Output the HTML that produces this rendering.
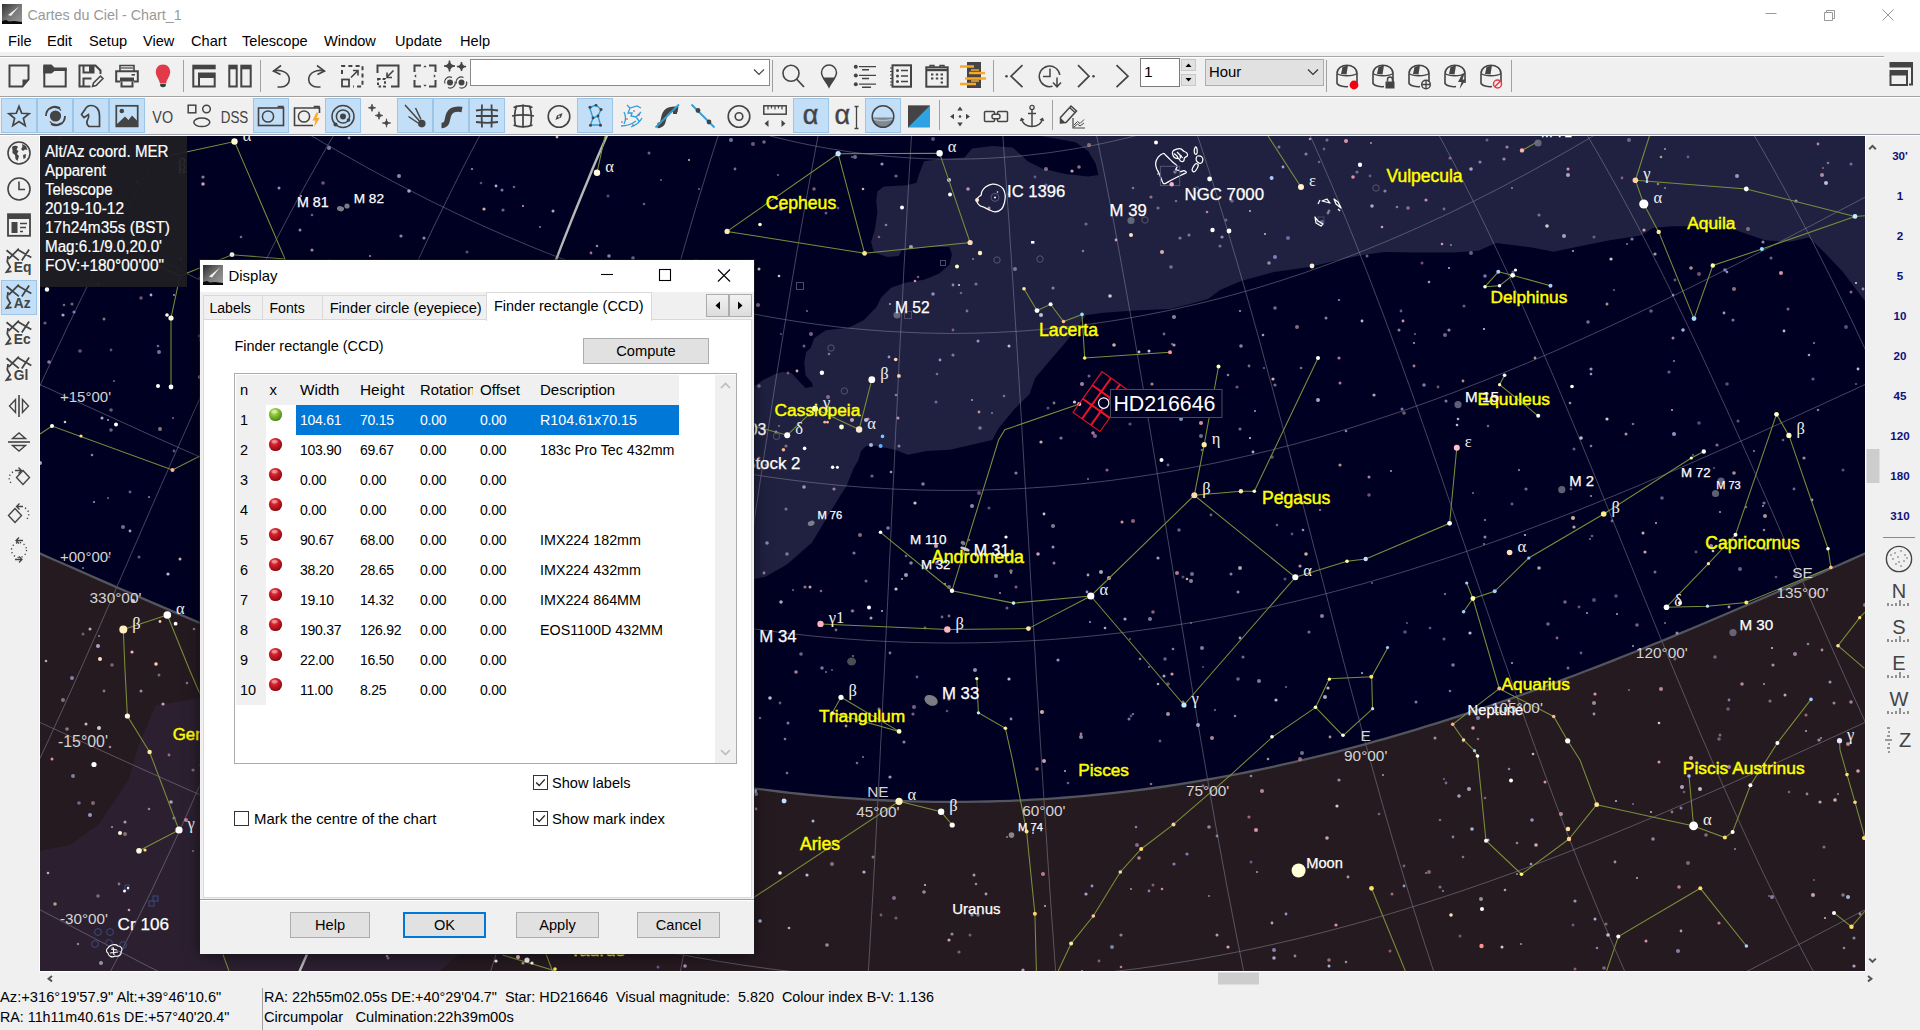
<!DOCTYPE html>
<html><head><meta charset="utf-8"><title>Cartes du Ciel - Chart_1</title>
<style>
*{box-sizing:border-box;margin:0;padding:0}
html,body{width:1920px;height:1030px;overflow:hidden;background:#f0f0f0;font-family:"Liberation Sans",sans-serif;font-size:14px;color:#000}
.abs{position:absolute}
#titlebar{left:0;top:0;width:1920px;height:30px;background:#fff}
#menubar{left:0;top:30px;width:1920px;height:22px;background:#fff}
#menubar span{position:absolute;top:3px;font-size:14.6px;white-space:nowrap}
.hl{position:absolute;height:1px;background:#a0a0a0}
.vsep{position:absolute;width:1px;background:#a0a0a0}
.tbsel{position:absolute;background:#c2dff7;border:1px solid #9cc6e8}
.t{position:absolute;white-space:nowrap}
svg{position:absolute;overflow:visible}
.ic{stroke:#444;fill:none;stroke-width:2}
</style></head><body>
<div id="titlebar" class="abs"></div>
<svg style="left:2px;top:4px" width="20" height="20" viewBox="0 0 20 20"><defs><linearGradient id="lg1" x1="0" y1="0" x2="1" y2="1"><stop offset="0" stop-color="#333"/><stop offset="0.5" stop-color="#777"/><stop offset="1" stop-color="#999"/></linearGradient></defs><rect width="20" height="20" fill="url(#lg1)"/><path d="M6 11 L17 2.5 L9 12Z" fill="#eee"/><path d="M0 17 L4 16 L7 17.5 L12 17 L20 18 V20 H0Z" fill="#0a0a0a"/></svg>
<div class="t" style="left:27.5px;top:6.5px;font-size:14.3px;color:#999">Cartes du Ciel - Chart_1</div>
<svg style="left:1750px;top:0" width="170" height="30" viewBox="0 0 170 30" stroke="#999" stroke-width="1" fill="none"><path d="M15.5 13.5H26.5"/><path d="M74.5 12.5H82.5V20.5H74.5Z M76.5 12.5V10.5H84.5V18.5H82.5"/><path d="M132.5 9.5L143.5 20.5M143.5 9.5L132.5 20.5"/></svg>
<div id="menubar" class="abs">
<span style="left:8px">File</span>
<span style="left:47px">Edit</span>
<span style="left:89px">Setup</span>
<span style="left:143px">View</span>
<span style="left:191px">Chart</span>
<span style="left:242px">Telescope</span>
<span style="left:324px">Window</span>
<span style="left:395px">Update</span>
<span style="left:460px">Help</span>
</div>
<div class="vsep" style="left:39px;top:136px;height:836px;background:#fff"></div><div class="vsep" style="left:1865px;top:136px;height:836px;background:#fff"></div><div class="hl" style="left:39px;top:971px;width:1827px;background:#fff"></div>
<div class="hl" style="left:0;top:56px;width:1884px;background:#a6a6a6"></div><div class="hl" style="left:0;top:57px;width:1884px;background:#fff"></div>
<div class="hl" style="left:0;top:96px;width:1920px;background:#a4a2a0"></div><div class="hl" style="left:0;top:97px;width:1920px;background:#fff"></div>
<div class="hl" style="left:0;top:134px;width:1920px;background:#9aa0a6"></div><div class="hl" style="left:0;top:135px;width:1920px;background:#fff"></div>
<svg style="left:7px;top:64px" width="24" height="24" viewBox="0 0 24 24" fill="none" stroke="#444" stroke-width="2" stroke-linejoin="miter"><path d="M2.5 1.5H21.5V15.5L15.5 22.5H2.5Z"/><path d="M21.5 15.5H15.5V22.5Z" fill="#444" stroke="none"/></svg>
<svg style="left:43px;top:64px" width="24" height="24" viewBox="0 0 24 24" fill="none" stroke="#444" stroke-width="2" stroke-linejoin="miter"><path d="M1.3 2V22.5H22.7V5.5H11"/><path d="M0.3 0.5H8.5L11.5 3.5H23.7V7H11.5L8.5 9.5H0.3Z" fill="#444" stroke="none"/></svg>
<svg style="left:78px;top:64px" width="24" height="24" viewBox="0 0 24 24" fill="none" stroke="#444" stroke-width="2" stroke-linejoin="miter"><path d="M12.5 22.5H1.5V1.5H17.5L22.5 6.5V10"/><path d="M5.5 1.5V8.5H15.5V1.5"/><rect x="11" y="2" width="4" height="6" fill="#444" stroke="none"/><path d="M5.5 22.5V14.5H13.5"/><path d="M14.5 22.5L15.5 19L22.5 12L25 14.5L18 21.5Z" stroke-width="1.5"/></svg>
<svg style="left:115px;top:64px" width="24" height="24" viewBox="0 0 24 24" fill="none" stroke="#444" stroke-width="2" stroke-linejoin="miter"><path d="M5 7V1.5H19V7" stroke-width="1.6"/><path d="M6 4H18" stroke-width="1.2"/><path d="M5 17.5H1.2V7.2H22.8V17.5H19"/><rect x="5" y="13.5" width="14" height="4" fill="#444" stroke="none"/><path d="M6.5 17.5V22.5H17.5V17.5"/><rect x="16.5" y="10" width="3.5" height="1.6" fill="#444" stroke="none"/></svg>
<svg style="left:151px;top:64px" width="24" height="24" viewBox="0 0 24 24" fill="none" stroke="#444" stroke-width="2" stroke-linejoin="miter"><path d="M12 0.5C7.5 0.5 4.8 4 4.8 8C4.8 12 8 15 9 19.5H15C16 15 19.2 12 19.2 8C19.2 4 16.5 0.5 12 0.5Z" fill="#e23a4b" stroke="none"/><path d="M9.2 20H14.8V22Q12 24.5 9.2 22Z" fill="#2c4038" stroke="none"/></svg>
<div class="vsep" style="left:183px;top:60px;height:32px"></div>
<svg style="left:192px;top:64px" width="24" height="24" viewBox="0 0 24 24" fill="none" stroke="#444" stroke-width="2" stroke-linejoin="miter"><path d="M1.3 5V22.5H6"/><rect x="0.3" y="0.7" width="23.4" height="4.6" fill="#444" stroke="none"/><path d="M7 14V22.5H22.7V14"/><rect x="6" y="8.5" width="17.7" height="5.5" fill="#444" stroke="none"/></svg>
<svg style="left:228px;top:64px" width="24" height="24" viewBox="0 0 24 24" fill="none" stroke="#444" stroke-width="2" stroke-linejoin="miter"><path d="M1.3 5V22.5H8.7V5"/><rect x="0.3" y="0.7" width="9.4" height="4.6" fill="#444" stroke="none"/><path d="M13.3 5V22.5H22.7V5"/><rect x="12.3" y="0.7" width="11.4" height="4.6" fill="#444" stroke="none"/></svg>
<div class="vsep" style="left:260px;top:60px;height:32px"></div>
<svg style="left:268px;top:64px" width="24" height="24" viewBox="0 0 24 24" fill="none" stroke="#444" stroke-width="2" stroke-linejoin="miter"><path d="M13 1.5L5.5 7L12.5 10.5" stroke-width="1.6"/><path d="M5.5 7C13 5 21.3 8.5 21.3 15.5C21.3 20 17.5 23 13 23H9.5" stroke-width="1.6"/></svg>
<svg style="left:306px;top:64px" width="24" height="24" viewBox="0 0 24 24" fill="none" stroke="#444" stroke-width="2" stroke-linejoin="miter"><path d="M11 1.5L18.5 7L11.5 10.5" stroke-width="1.6"/><path d="M18.5 7C11 5 2.7 8.5 2.7 15.5C2.7 20 6.5 23 11 23H14.5" stroke-width="1.6"/></svg>
<svg style="left:340px;top:64px" width="24" height="24" viewBox="0 0 24 24" fill="none" stroke="#444" stroke-width="2" stroke-linejoin="miter"><path d="M2 10V2H22.5V22.5H13" stroke-dasharray="4 3.2"/><rect x="2" y="15.5" width="7" height="7" stroke-width="1.8"/><path d="M11 13.5L18 6.5M13 6.5H18V11.5" stroke-width="1.6"/></svg>
<svg style="left:376px;top:64px" width="24" height="24" viewBox="0 0 24 24" fill="none" stroke="#444" stroke-width="2" stroke-linejoin="miter"><path d="M1.5 9V1.5H22.5V22.5H15"/><path d="M2 15H9V22.5H2Z" stroke-dasharray="2.6 2"/><path d="M17.5 6.5L11 13M11 8.5V13.5H16" stroke-width="1.6"/></svg>
<svg style="left:413px;top:64px" width="24" height="24" viewBox="0 0 24 24" fill="none" stroke="#444" stroke-width="2" stroke-linejoin="miter"><path d="M1.5 8V1.5H8M16 1.5H22.5V8M22.5 16V22.5H16M8 22.5H1.5V16"/><path d="M10.3 3.2L12 1.2L13.7 3.2ZM10.3 20.8L12 22.8L13.7 20.8ZM3.2 10.3L1.2 12L3.2 13.7ZM20.8 10.3L22.8 12L20.8 13.7Z" fill="#444" stroke="none"/></svg>
<svg style="left:443px;top:60px" width="26" height="32" viewBox="0 0 26 32" fill="none" stroke="#444" stroke-width="2" stroke-linejoin="miter"><path d="M6.5 0.5Q6.5 6 12 6Q6.5 6 6.5 11.5Q6.5 6 1 6Q6.5 6 6.5 0.5Z M18.5 1.9Q18.5 6.5 23.1 6.5Q18.5 6.5 18.5 11.1Q18.5 6.5 13.9 6.5Q18.5 6.5 18.5 1.9Z" fill="#444" stroke="#444" stroke-width="1.4"/><circle cx="7" cy="22.5" r="3" fill="#444" stroke="none"/><path d="M2 23.5A5 5 0 0 1 9 17.5 M12 21.5A5 5 0 0 1 5 27.5" stroke-width="1.1"/><circle cx="18.5" cy="22.5" r="3" fill="#444" stroke="none"/><path d="M13.5 23.5A5 5 0 0 1 20.5 17.5 M23.5 21.5A5 5 0 0 1 16.5 27.5" stroke-width="1.1"/></svg>
<div class="abs" style="left:470px;top:59px;width:300px;height:27px;background:#fff;border:1px solid #8a8a8a"></div>
<svg style="left:752px;top:67px" width="14" height="10" viewBox="0 0 14 10" fill="none" stroke="#444" stroke-width="1.2"><path d="M2 2.5L7 7.5L12 2.5"/></svg>
<div class="vsep" style="left:772px;top:60px;height:32px"></div>
<svg style="left:781px;top:64px" width="24" height="24" viewBox="0 0 24 24" fill="none" stroke="#444" stroke-width="2" stroke-linejoin="miter"><circle cx="10" cy="9.3" r="8" stroke-width="1.6"/><path d="M15.5 15L23 23" stroke-width="1.8"/></svg>
<svg style="left:816px;top:64px" width="24" height="24" viewBox="0 0 24 24" fill="none" stroke="#444" stroke-width="2" stroke-linejoin="miter"><path d="M13 23C10 17 5.5 13.5 5.5 8.5A7.5 7.5 0 0 1 20.5 8.5C20.5 13.5 16 17 13 23Z" stroke-width="1.5"/><path d="M6.8 13.5H19.2C17.5 17 15 19.5 13 23C11 19.5 8.5 17 6.8 13.5Z" fill="#444" stroke="none"/></svg>
<svg style="left:853px;top:64px" width="24" height="24" viewBox="0 0 24 24" fill="none" stroke="#444" stroke-width="2" stroke-linejoin="miter"><circle cx="2.8" cy="2.8" r="2" fill="#444" stroke="none"/><circle cx="2.8" cy="11.5" r="2" fill="#444" stroke="none"/><circle cx="2.8" cy="20.3" r="2" fill="#444" stroke="none"/><path d="M6 2.6H23M6 11.3H23M6 20.1H23" stroke-width="1.2"/><path d="M9 5.8H16M9 14.5H16M9 23.2H18" stroke-width="1.6"/></svg>
<svg style="left:889px;top:64px" width="24" height="24" viewBox="0 0 24 24" fill="none" stroke="#444" stroke-width="2" stroke-linejoin="miter"><rect x="3.5" y="1.3" width="18.5" height="21.4"/><path d="M1 4H3M1 7.5H3M1 11H3M1 14.5H3M1 18H3M1 21H3" stroke-width="1.2"/><circle cx="8.5" cy="6.5" r="1.5" fill="#444" stroke="none"/><circle cx="8.5" cy="12" r="1.5" fill="#444" stroke="none"/><circle cx="8.5" cy="17.5" r="1.5" fill="#444" stroke="none"/><path d="M12 6.5H19M12 12H19M12 17.5H19" stroke-width="1.6"/></svg>
<svg style="left:925px;top:64px" width="24" height="24" viewBox="0 0 24 24" fill="none" stroke="#444" stroke-width="2" stroke-linejoin="miter"><rect x="1.3" y="3.3" width="21.4" height="19.4"/><path d="M1.3 6H22.7" stroke-width="2.4"/><path d="M5 3.5V1.5H9V3.5M15 3.5V1.5H19V3.5" stroke-width="1.4"/><path d="M6 10.5H8.4M10.8 10.5H13.2M15.6 10.5H18M6 14.5H8.4M10.8 14.5H13.2M15.6 14.5H18M15.6 18.5H18" stroke-width="2.2"/></svg>
<svg style="left:959px;top:62px" width="28" height="26" viewBox="0 0 28 26" fill="none" stroke="#444" stroke-width="2" stroke-linejoin="miter"><rect x="8" y="0" width="14" height="26" fill="#444" stroke="none"/><path d="M1 4.5H15M10 11H26M6 16.5H27M1 22H17" stroke="#f9a826" stroke-width="2.6"/><path d="M12 8H20M12 19H20" stroke="#f9a826" stroke-width="1.6"/></svg>
<div class="vsep" style="left:993px;top:60px;height:32px"></div>
<svg style="left:1001px;top:64px" width="24" height="24" viewBox="0 0 24 24" fill="none" stroke="#444" stroke-width="2" stroke-linejoin="miter"><circle cx="5.5" cy="12.2" r="1.3" fill="#444" stroke="none"/><path d="M21.5 1.2L10 12.2L21.5 23.2" stroke-width="1.7"/></svg>
<svg style="left:1038px;top:64px" width="24" height="24" viewBox="0 0 24 24" fill="none" stroke="#444" stroke-width="2" stroke-linejoin="miter"><path d="M14.5 22.2A10.3 10.3 0 1 1 21.8 11" stroke-width="1.5"/><path d="M12 4.5V12.5H5" stroke-width="1.5"/><path d="M19 13.5V22.5M15 18.5L19 22.8L23 18.5" stroke-width="1.5"/></svg>
<svg style="left:1073px;top:64px" width="24" height="24" viewBox="0 0 24 24" fill="none" stroke="#444" stroke-width="2" stroke-linejoin="miter"><circle cx="20.5" cy="12.2" r="1.3" fill="#444" stroke="none"/><path d="M5 1.2L16 12.2L5 23.2" stroke-width="1.7"/></svg>
<svg style="left:1110px;top:64px" width="24" height="24" viewBox="0 0 24 24" fill="none" stroke="#444" stroke-width="2" stroke-linejoin="miter"><path d="M6.5 1.2L18 12.2L6.5 23.2" stroke-width="1.7"/></svg>
<div class="abs" style="left:1140px;top:58px;width:40px;height:29px;background:#fff;border:1px solid #7a7a7a"></div><div class="t" style="left:1144px;top:63px;font-size:15.5px">1</div>
<div class="abs" style="left:1181px;top:59px;width:15px;height:12px;background:#e1e1e1;border:1px solid #c8c8c8"></div><div class="abs" style="left:1181px;top:74px;width:15px;height:12px;background:#e1e1e1;border:1px solid #c8c8c8"></div>
<svg style="left:1181px;top:59px" width="15" height="27" viewBox="0 0 15 27"><path d="M4.5 8L7.5 4.5L10.5 8Z M4.5 19L7.5 22.5L10.5 19Z" fill="#000"/></svg>
<div class="abs" style="left:1205px;top:59px;width:119px;height:27px;background:#e1e1e1;border:1px solid #adadad"></div><div class="t" style="left:1209px;top:64px;font-size:14.9px">Hour</div>
<svg style="left:1306px;top:67px" width="14" height="10" viewBox="0 0 14 10" fill="none" stroke="#333" stroke-width="1.2"><path d="M2 2.5L7 7.5L12 2.5"/></svg>
<div class="vsep" style="left:1326px;top:60px;height:32px"></div>
<svg style="left:1335px;top:64px" width="26" height="28" viewBox="0 0 26 28" fill="none" stroke="#444" stroke-width="2" stroke-linejoin="miter"><path d="M2 9.5C2 -1.5 22 -1.5 22 9.5V19" stroke-width="1.6"/><path d="M2 9.5V19.5C4 22.5 10 23 13 22.5" stroke-width="1.6"/><path d="M2 9.5C6 12.5 18 12.5 22 9.5" stroke-width="1.4"/><path d="M7.5 3L13 1.2L11.5 10.5L6 10Z" fill="#444" stroke="none"/><circle cx="19" cy="21" r="4.4" fill="#f00010" stroke="none"/></svg>
<svg style="left:1371px;top:64px" width="26" height="28" viewBox="0 0 26 28" fill="none" stroke="#444" stroke-width="2" stroke-linejoin="miter"><path d="M2 9.5C2 -1.5 22 -1.5 22 9.5V19" stroke-width="1.6"/><path d="M2 9.5V19.5C4 22.5 10 23 13 22.5" stroke-width="1.6"/><path d="M2 9.5C6 12.5 18 12.5 22 9.5" stroke-width="1.4"/><path d="M7.5 3L13 1.2L11.5 10.5L6 10Z" fill="#444" stroke="none"/><rect x="14.5" y="17.5" width="9" height="7" fill="#444" stroke="none"/><path d="M16.5 17.5V15.5A2.5 2.5 0 0 1 21.5 15.5V17.5" stroke-width="1.5"/></svg>
<svg style="left:1407px;top:64px" width="26" height="28" viewBox="0 0 26 28" fill="none" stroke="#444" stroke-width="2" stroke-linejoin="miter"><path d="M2 9.5C2 -1.5 22 -1.5 22 9.5V19" stroke-width="1.6"/><path d="M2 9.5V19.5C4 22.5 10 23 13 22.5" stroke-width="1.6"/><path d="M2 9.5C6 12.5 18 12.5 22 9.5" stroke-width="1.4"/><path d="M7.5 3L13 1.2L11.5 10.5L6 10Z" fill="#444" stroke="none"/><circle cx="19" cy="20.5" r="4.3" stroke-width="1.4" fill="#f0f0f0"/><path d="M19 16V25M14.5 20.5H23.5" stroke-width="1.3"/></svg>
<svg style="left:1443px;top:64px" width="26" height="28" viewBox="0 0 26 28" fill="none" stroke="#444" stroke-width="2" stroke-linejoin="miter"><path d="M2 9.5C2 -1.5 22 -1.5 22 9.5V19" stroke-width="1.6"/><path d="M2 9.5V19.5C4 22.5 10 23 13 22.5" stroke-width="1.6"/><path d="M2 9.5C6 12.5 18 12.5 22 9.5" stroke-width="1.4"/><path d="M7.5 3L13 1.2L11.5 10.5L6 10Z" fill="#444" stroke="none"/><path d="M19.5 9.5L15 18H18.5L16.5 25L23 15.5H19.5L21.5 9.5Z" fill="#444" stroke="none"/></svg>
<svg style="left:1479px;top:64px" width="26" height="28" viewBox="0 0 26 28" fill="none" stroke="#444" stroke-width="2" stroke-linejoin="miter"><path d="M2 9.5C2 -1.5 22 -1.5 22 9.5V19" stroke-width="1.6"/><path d="M2 9.5V19.5C4 22.5 10 23 13 22.5" stroke-width="1.6"/><path d="M2 9.5C6 12.5 18 12.5 22 9.5" stroke-width="1.4"/><path d="M7.5 3L13 1.2L11.5 10.5L6 10Z" fill="#444" stroke="none"/><circle cx="18.5" cy="20" r="4" stroke="#e23a4b" stroke-width="1.5" fill="#f0f0f0"/><path d="M15.8 22.7L21.2 17.3" stroke="#e23a4b" stroke-width="1.5"/></svg>
<div class="vsep" style="left:1511px;top:60px;height:32px"></div>
<svg style="left:1889px;top:62px" width="24" height="24" viewBox="0 0 24 24" fill="none" stroke="#444" stroke-width="2" stroke-linejoin="miter"><rect x="0.5" y="0" width="23.5" height="5.5" fill="#444" stroke="none"/><path d="M23 5V22.5H20"/><rect x="0.5" y="8" width="18.5" height="5.5" fill="#444" stroke="none"/><path d="M1.5 13V23H18V13"/></svg>
<div class="tbsel" style="left:1px;top:98px;width:36px;height:35px"></div>
<div class="tbsel" style="left:37px;top:98px;width:36px;height:35px"></div>
<div class="tbsel" style="left:73px;top:98px;width:36px;height:35px"></div>
<div class="tbsel" style="left:109px;top:98px;width:36px;height:35px"></div>
<div class="tbsel" style="left:253px;top:98px;width:36px;height:35px"></div>
<div class="tbsel" style="left:325px;top:98px;width:36px;height:35px"></div>
<div class="tbsel" style="left:397px;top:98px;width:36px;height:35px"></div>
<div class="tbsel" style="left:433px;top:98px;width:36px;height:35px"></div>
<div class="tbsel" style="left:469px;top:98px;width:36px;height:35px"></div>
<div class="tbsel" style="left:577px;top:98px;width:36px;height:35px"></div>
<div class="tbsel" style="left:793px;top:98px;width:36px;height:35px"></div>
<div class="tbsel" style="left:865px;top:98px;width:36px;height:35px"></div>
<svg style="left:7px;top:104px" width="24" height="24" viewBox="0 0 24 24" fill="none" stroke="#444" stroke-width="2" stroke-linejoin="miter"><polygon points="12.0,2.4 14.7,9.3 22.1,9.7 16.4,14.4 18.2,21.6 12.0,17.6 5.8,21.6 7.6,14.4 1.9,9.7 9.3,9.3" stroke-width="1.7"/></svg>
<svg style="left:43px;top:104px" width="24" height="24" viewBox="0 0 24 24" fill="none" stroke="#444" stroke-width="2" stroke-linejoin="miter"><circle cx="12.5" cy="12" r="5.6" fill="#444" stroke="none"/><path d="M3 12C3 4 11 0.5 17 4M22 12C22 20 14 23.5 8 20" stroke-width="1.8"/><path d="M7 17.5C9 21 15 21.5 18 19M18 6.5C16 3 10 2.5 7 5" stroke-width="1.3"/></svg>
<svg style="left:79px;top:104px" width="24" height="24" viewBox="0 0 24 24" fill="none" stroke="#444" stroke-width="2" stroke-linejoin="miter"><path d="M10 22.5H20.5V12C20.5 5 17 1.5 12 1.5C9 1.5 7 3.5 6 5.5L2.5 10.5L5 13.5L9.5 10.5C10.5 13 9 15 8 17C7.5 19 8 21 10 22.5Z" stroke-width="1.7"/></svg>
<svg style="left:115px;top:104px" width="24" height="24" viewBox="0 0 24 24" fill="none" stroke="#444" stroke-width="2" stroke-linejoin="miter"><rect x="1.3" y="1.8" width="21.4" height="20.6" stroke-width="1.7"/><circle cx="6.8" cy="7" r="2.3" fill="#444" stroke="none"/><path d="M2 22V20L10 12.5L13.5 16L17 11.5L22 16.5V22Z" fill="#444" stroke="none"/></svg>
<svg style="left:151px;top:104px" width="24" height="24" viewBox="0 0 24 24"><text x="1.3" y="18.6" font-family="'Liberation Sans',sans-serif" font-size="17.4" fill="#444" textLength="20.8" lengthAdjust="spacingAndGlyphs">VO</text></svg>
<svg style="left:187px;top:104px" width="24" height="24" viewBox="0 0 24 24" fill="none" stroke="#444" stroke-width="2" stroke-linejoin="miter"><rect x="1.2" y="1.2" width="7.6" height="7.6" stroke-width="1.5"/><circle cx="19.5" cy="5" r="3.8" stroke-width="1.5"/><ellipse cx="14.8" cy="18.3" rx="8" ry="4.3" stroke-width="1.5"/></svg>
<svg style="left:220px;top:104px" width="34" height="24" viewBox="0 0 34 24"><text x="0.7" y="18.8" font-family="'Liberation Sans',sans-serif" font-size="17.4" fill="#444" textLength="27.6" lengthAdjust="spacingAndGlyphs">DSS</text></svg>
<svg style="left:259px;top:104px" width="24" height="24" viewBox="0 0 24 24" fill="none" stroke="#444" stroke-width="2" stroke-linejoin="miter"><rect x="-0.5" y="4" width="25" height="17.5" stroke-width="1.6"/><circle cx="9" cy="12.5" r="5.6" stroke-width="1.5"/><path d="M19.5 4V2.6H24V4.5" stroke-width="1.6"/></svg>
<svg style="left:295px;top:104px" width="24" height="24" viewBox="0 0 24 24" fill="none" stroke="#444" stroke-width="2" stroke-linejoin="miter"><path d="M18 21.5H-0.5V4H24.5V9" stroke-width="1.6"/><circle cx="9" cy="12.5" r="5.6" stroke-width="1.5"/><path d="M19.5 4V2.6H24V4.5" stroke-width="1.6"/><path d="M21.5 8.5L17.5 16.5H20.5L19 23.5L24.5 14H21.5L23.5 8.5Z" fill="#f9a826" stroke="none"/></svg>
<svg style="left:331px;top:104px" width="24" height="24" viewBox="0 0 24 24" fill="none" stroke="#444" stroke-width="2" stroke-linejoin="miter"><circle cx="12" cy="12.5" r="11" stroke-width="1.5"/><circle cx="12" cy="12.5" r="6.6" stroke-width="1.5"/><circle cx="12" cy="12.5" r="3" fill="#444" stroke="none"/><circle cx="4.5" cy="20.5" r="2" fill="#444" stroke="none"/><circle cx="17.5" cy="16" r="1.8" fill="#444" stroke="none"/></svg>
<svg style="left:367px;top:104px" width="24" height="24" viewBox="0 0 24 24" fill="none" stroke="#444" stroke-width="2" stroke-linejoin="miter"><path d="M5 0.2Q5 3.8 8.6 3.8Q5 3.8 5 7.4Q5 3.8 1.4 3.8Q5 3.8 5 0.2Z M12 7.7Q12 11.5 15.8 11.5Q12 11.5 12 15.3Q12 11.5 8.2 11.5Q12 11.5 12 7.7Z M19.5 14.8Q19.5 19 23.7 19Q19.5 19 19.5 23.2Q19.5 19 15.3 19Q19.5 19 19.5 14.8Z" fill="#444" stroke-width="0.8"/></svg>
<svg style="left:403px;top:104px" width="24" height="24" viewBox="0 0 24 24" fill="none" stroke="#444" stroke-width="2" stroke-linejoin="miter"><circle cx="18.8" cy="19.6" r="3.8" fill="#444" stroke="none"/><path d="M16.5 17L2 1M18 15.5L12.5 4M15 19L5.5 12.5" stroke-width="1.5"/></svg>
<svg style="left:439px;top:104px" width="24" height="24" viewBox="0 0 24 24" fill="none" stroke="#444" stroke-width="2" stroke-linejoin="miter"><path d="M2.5 21.5C9.5 21.5 7.5 15 10 10C12.5 5 17 4.5 23 5.5" stroke-width="5.4"/></svg>
<svg style="left:475px;top:104px" width="24" height="24" viewBox="0 0 24 24" fill="none" stroke="#444" stroke-width="2" stroke-linejoin="miter"><path d="M7 0.5C6.5 8 6.5 16 7 23.5M16.5 0.5C17 8 17 16 16.5 23.5" stroke-width="1.8"/><path d="M1 6.5C8 5.5 16 5.5 23 6.5M1 12H23M1 18C8 19 16 19 23 18" stroke-width="1.8"/></svg>
<svg style="left:511px;top:104px" width="24" height="24" viewBox="0 0 24 24" fill="none" stroke="#444" stroke-width="2" stroke-linejoin="miter"><path d="M2.5 3.5C8 1 16 1 21.5 3.5M1 12C8 10.5 16 10.5 23 12M2.5 21C8 23.5 16 23.5 21.5 21" stroke-width="1.7"/><path d="M12 0.5V23.5M5.5 1.5C3.5 8 3 15 4.5 22M18.5 1.5C20.5 8 21 15 19.5 22" stroke-width="1.7"/></svg>
<svg style="left:547px;top:104px" width="24" height="24" viewBox="0 0 24 24" fill="none" stroke="#444" stroke-width="2" stroke-linejoin="miter"><circle cx="12" cy="12.5" r="10.8" stroke-width="1.6"/><path d="M15.5 9L10 11.5L8.5 16L14 13.5Z" fill="#444" stroke="none"/><circle cx="12" cy="12.5" r="1" fill="#f0f0f0" stroke="none"/></svg>
<svg style="left:583px;top:104px" width="24" height="24" viewBox="0 0 24 24" fill="none" stroke="#444" stroke-width="2" stroke-linejoin="miter"><path d="M8 3L13 1L18 5.5L15 12L17.5 21H7.5L10 14L6.5 3Z M10 14L15 12" stroke="#2ba0dc" stroke-width="1.4"/><g fill="#444" stroke="none"><circle cx="7" cy="3.2" r="1.5"/><circle cx="13" cy="1.3" r="1.4"/><circle cx="18" cy="5.5" r="1.5"/><circle cx="15" cy="12" r="1.4"/><circle cx="10" cy="14" r="1.4"/><circle cx="17.5" cy="21.2" r="1.5"/><circle cx="7.5" cy="21.2" r="1.5"/></g></svg>
<svg style="left:619px;top:104px" width="24" height="24" viewBox="0 0 24 24" fill="none" stroke="#444" stroke-width="2" stroke-linejoin="miter"><path d="M8 1L11 4L18 2L22 4M11 4L9 9H13L12 12L17 13L22 8M5 8C7 12 7 16 5 20M2 22C8 22 13 20 17 17M12 23C17 21 21 18 23 14M17 13L20 17" stroke="#2ba0dc" stroke-width="1.3"/><g fill="#b03050" stroke="none"><circle cx="8" cy="15" r="0.8"/><circle cx="15" cy="7" r="0.8"/><circle cx="14" cy="21" r="0.8"/><circle cx="20" cy="11" r="0.8"/><circle cx="3" cy="18" r="0.8"/></g></svg>
<svg style="left:655px;top:104px" width="24" height="24" viewBox="0 0 24 24" fill="none" stroke="#444" stroke-width="2" stroke-linejoin="miter"><path d="M2.5 21.5C9.5 21.5 7.5 15 10 10C12.5 5 17 4.5 23 5.5" stroke-width="5.4"/><path d="M20 4V10" stroke-width="4"/><path d="M0.5 23.5L24 0.5" stroke="#2ba0dc" stroke-width="1.8"/></svg>
<svg style="left:691px;top:104px" width="24" height="24" viewBox="0 0 24 24" fill="none" stroke="#444" stroke-width="2" stroke-linejoin="miter"><path d="M0.5 0.5L23.5 23.5" stroke="#2ba0dc" stroke-width="1.8"/><circle cx="7" cy="6.5" r="2.4" fill="#444" stroke="none"/><circle cx="18" cy="18" r="2.4" fill="#444" stroke="none"/></svg>
<svg style="left:727px;top:104px" width="24" height="24" viewBox="0 0 24 24" fill="none" stroke="#444" stroke-width="2" stroke-linejoin="miter"><circle cx="12" cy="12.5" r="10.8" stroke-width="1.6"/><circle cx="12" cy="12.5" r="3.8" stroke-width="1.6"/></svg>
<svg style="left:763px;top:104px" width="24" height="24" viewBox="0 0 24 24" fill="none" stroke="#444" stroke-width="2" stroke-linejoin="miter"><rect x="0.8" y="1.8" width="22.4" height="8.4" stroke-width="1.5"/><path d="M5 2V5.5M8.5 2V4.5M12 2V5.5M15.5 2V4.5M19 2V5.5" stroke-width="1.2"/><path d="M5.5 16L1.5 19.5L5.5 23ZM18.5 16L22.5 19.5L18.5 23Z" fill="#444" stroke="none"/></svg>
<svg style="left:796px;top:98px" width="30" height="32" viewBox="0 0 30 32"><text x="6.7" y="25.5" stroke="#444" stroke-width="0.5" font-family="'Liberation Sans','DejaVu Sans',sans-serif" font-size="27" fill="#444">α</text></svg>
<svg style="left:832px;top:98px" width="34" height="32" viewBox="0 0 34 32"><text x="2.5" y="25.5" stroke="#444" stroke-width="0.4" font-family="'Liberation Sans','DejaVu Sans',sans-serif" font-size="27" fill="#444">α</text><path d="M24.5 8.5V30.5M22.5 8.5H26.5M22.5 30.5H26.5" stroke="#444" stroke-width="1.3"/></svg>
<svg style="left:871px;top:104px" width="24" height="24" viewBox="0 0 24 24" fill="none" stroke="#444" stroke-width="2" stroke-linejoin="miter"><defs><clipPath id="hc"><circle cx="12" cy="12.5" r="10.8"/></clipPath></defs><g clip-path="url(#hc)" stroke="none"><rect x="0" y="13.5" width="24" height="12" fill="#7d8a96"/><path d="M0 13.5C6 16.5 18 16.5 24 13.5V15C18 18 6 18 0 15Z" fill="#aebbc6"/></g><circle cx="12" cy="12.5" r="10.8" stroke-width="1.5"/></svg>
<svg style="left:907px;top:104px" width="24" height="24" viewBox="0 0 24 24" fill="none" stroke="#444" stroke-width="2" stroke-linejoin="miter"><path d="M1 1.5H23V23.5H1Z" fill="#2ea3e3" stroke="none"/><path d="M1 1.5H23L1 23.5Z" fill="#444" stroke="none"/></svg>
<div class="vsep" style="left:939px;top:100px;height:30px"></div>
<svg style="left:948px;top:104px" width="24" height="24" viewBox="0 0 24 24" fill="none" stroke="#444" stroke-width="2" stroke-linejoin="miter"><path d="M12 2.5L9.3 6.5H14.7ZM12 22.5L9.3 18.5H14.7ZM2 12.5L6 9.8V15.2ZM22 12.5L18 9.8V15.2Z" fill="#444" stroke="none"/><circle cx="12" cy="12.5" r="1.3" fill="#444" stroke="none"/></svg>
<svg style="left:984px;top:104px" width="24" height="24" viewBox="0 0 24 24" fill="none" stroke="#444" stroke-width="2" stroke-linejoin="miter"><rect x="0.5" y="7.5" width="10" height="10" rx="1" stroke-width="1.5"/><rect x="13.5" y="7.5" width="10" height="10" rx="1" stroke-width="1.5"/><rect x="8" y="10.3" width="8" height="4.4" rx="2" stroke-width="1.4" fill="#f0f0f0"/></svg>
<svg style="left:1020px;top:104px" width="24" height="24" viewBox="0 0 24 24" fill="none" stroke="#444" stroke-width="2" stroke-linejoin="miter"><circle cx="12" cy="3.5" r="2.1" stroke-width="1.3"/><path d="M12 5.6V22.5M8 9.5H16" stroke-width="1.5"/><path d="M1.5 15C3 20 7 22.5 12 22.5C17 22.5 21 20 22.5 15M0.5 17L1.5 14.5L4 16M23.5 17L22.5 14.5L20 16" stroke-width="1.4"/></svg>
<div class="vsep" style="left:1052px;top:100px;height:30px"></div>
<svg style="left:1059px;top:104px" width="28" height="26" viewBox="0 0 28 26" fill="none" stroke="#444" stroke-width="2" stroke-linejoin="miter"><path d="M1.5 13.5L12 2L17.5 7L7 18.5L1.5 19Z" stroke-width="1.5"/><path d="M1.5 14L6.5 18.5L1.5 19.2Z" fill="#444" stroke="none"/><path d="M10.5 3.5L16 8.5" stroke-width="1.3"/><path d="M14 14V24H26" stroke-width="1.2"/><path d="M15 21L18.5 17.5L21 19.5L25 15.5M15 23L18.5 20L21 22L25 19" stroke-width="1"/></svg>
<div class="tbsel" style="left:1px;top:280px;width:36px;height:35px"></div>
<svg style="left:5px;top:139px" width="28" height="28" viewBox="0 0 28 28" fill="none" stroke="#444" stroke-width="2" stroke-linejoin="miter"><circle cx="14" cy="14" r="11" stroke-width="1.6"/><path d="M7 8C9 6 12 6.5 13 8L11.5 10.5L13.5 12L12 15L14 17L12.5 22L10.5 20L10 16L7.5 14L7.5 11Z M17 5L21 7L22.5 11L20 10.5L18 12L16 10L17.5 8Z M18 16L21 15L20.5 19L18.5 20Z" fill="#444" stroke="none"/></svg>
<svg style="left:5px;top:175px" width="28" height="28" viewBox="0 0 28 28" fill="none" stroke="#444" stroke-width="2" stroke-linejoin="miter"><circle cx="14" cy="14" r="11" stroke-width="1.6"/><path d="M14 6.5V14.5H20" stroke-width="1.6"/></svg>
<svg style="left:5px;top:211px" width="28" height="28" viewBox="0 0 28 28" fill="none" stroke="#444" stroke-width="2" stroke-linejoin="miter"><rect x="3" y="3.2" width="22" height="21.6" stroke-width="1.8"/><rect x="3" y="3" width="22" height="5" fill="#444" stroke="none"/><rect x="6.5" y="11" width="6" height="11" fill="#444" stroke="none"/><path d="M15 12.5H22M15 16.5H21M15 20.5H18" stroke-width="1.6"/></svg>
<svg style="left:4px;top:247px" width="30" height="28" viewBox="0 0 30 28" fill="none" stroke="#444" stroke-width="2" stroke-linejoin="miter"><path d="M2.5 3.2L14.9 13.4M14.9 1.7L4.7 11.9M13.5 2.5L27.3 10.5M25.1 2.5L17.8 13.4M4 9L3.3 14.8L6.2 19.9L2.5 25L7.6 24.3" stroke-width="1.8"/><text x="9.8" y="24.8" font-family="'Liberation Sans',sans-serif" font-weight="bold" font-size="13.8" fill="#444" stroke="none">Eq</text></svg>
<svg style="left:4px;top:283px" width="30" height="28" viewBox="0 0 30 28" fill="none" stroke="#444" stroke-width="2" stroke-linejoin="miter"><path d="M2.5 3.2L14.9 13.4M14.9 1.7L4.7 11.9M13.5 2.5L27.3 10.5M25.1 2.5L17.8 13.4M4 9L3.3 14.8L6.2 19.9L2.5 25L7.6 24.3" stroke-width="1.8"/><text x="9.8" y="24.8" font-family="'Liberation Sans',sans-serif" font-weight="bold" font-size="13.8" fill="#444" stroke="none">Az</text></svg>
<svg style="left:4px;top:319px" width="30" height="28" viewBox="0 0 30 28" fill="none" stroke="#444" stroke-width="2" stroke-linejoin="miter"><path d="M2.5 3.2L14.9 13.4M14.9 1.7L4.7 11.9M13.5 2.5L27.3 10.5M25.1 2.5L17.8 13.4M4 9L3.3 14.8L6.2 19.9L2.5 25L7.6 24.3" stroke-width="1.8"/><text x="9.8" y="24.8" font-family="'Liberation Sans',sans-serif" font-weight="bold" font-size="13.8" fill="#444" stroke="none">Ec</text></svg>
<svg style="left:4px;top:355px" width="30" height="28" viewBox="0 0 30 28" fill="none" stroke="#444" stroke-width="2" stroke-linejoin="miter"><path d="M2.5 3.2L14.9 13.4M14.9 1.7L4.7 11.9M13.5 2.5L27.3 10.5M25.1 2.5L17.8 13.4M4 9L3.3 14.8L6.2 19.9L2.5 25L7.6 24.3" stroke-width="1.8"/><text x="9.8" y="24.8" font-family="'Liberation Sans',sans-serif" font-weight="bold" font-size="13.8" fill="#444" stroke="none">Gl</text></svg>
<svg style="left:5px;top:392px" width="28" height="28" viewBox="0 0 28 28" fill="none" stroke="#444" stroke-width="2" stroke-linejoin="miter"><path d="M14 3V25" stroke-width="1.6"/><path d="M10.5 7.5V20.5L4.5 14ZM17.5 7.5V20.5L23.5 14Z" stroke-width="1.4"/></svg>
<svg style="left:5px;top:428px" width="28" height="28" viewBox="0 0 28 28" fill="none" stroke="#444" stroke-width="2" stroke-linejoin="miter"><path d="M3 14H25" stroke-width="1.6"/><path d="M7.5 10.5H20.5L14 5ZM7.5 17.5H20.5L14 23Z" stroke-width="1.4"/></svg>
<svg style="left:5px;top:464px" width="28" height="28" viewBox="0 0 28 28" fill="none" stroke="#444" stroke-width="2" stroke-linejoin="miter"><path d="M18 6.5L24.5 13.5L18 20.5L11.5 13.5Z" stroke-width="1.4"/><path d="M10 6.5H16M13.5 3.5L16.5 6.5L13.5 9.5" stroke-width="1.3"/><path d="M8 8C4 10 3 15 6 19" stroke-width="1.4" stroke-dasharray="1.2 2.6"/></svg>
<svg style="left:5px;top:500px" width="28" height="28" viewBox="0 0 28 28" fill="none" stroke="#444" stroke-width="2" stroke-linejoin="miter"><path d="M10 8.5L16.5 15.5L10 22.5L3.5 15.5Z" stroke-width="1.4"/><path d="M18 6.5H12M14.5 3.5L11.5 6.5L14.5 9.5" stroke-width="1.3"/><path d="M20 8C24 10 25 15 22 19" stroke-width="1.4" stroke-dasharray="1.2 2.6"/></svg>
<svg style="left:5px;top:535px" width="28" height="30" viewBox="0 0 28 30" fill="none" stroke="#444" stroke-width="2" stroke-linejoin="miter"><circle cx="14" cy="15" r="7.5" stroke-width="1.4" stroke-dasharray="1.2 2.8"/><path d="M18 5.5H11M14 2.5L11 5.5L14 8.5M10 24.5H17M14 21.5L17 24.5L14 27.5" stroke-width="1.3"/></svg>
<svg style="left:1865px;top:136px" width="16" height="836" viewBox="0 0 16 836" fill="none" stroke="#555" stroke-width="2"><path d="M4.2 13.2L7.5 9.9L10.8 13.2M4.2 822.6L7.5 825.9L10.8 822.6"/><rect x="1.5" y="313" width="13" height="34" fill="#cdcdcd" stroke="none"/></svg>
<div class="t" style="left:1881px;width:38px;text-align:center;top:149px;font-size:11.6px;font-weight:bold;color:#10107c">30'</div>
<div class="t" style="left:1881px;width:38px;text-align:center;top:189px;font-size:11.6px;font-weight:bold;color:#10107c">1</div>
<div class="t" style="left:1881px;width:38px;text-align:center;top:229px;font-size:11.6px;font-weight:bold;color:#10107c">2</div>
<div class="t" style="left:1881px;width:38px;text-align:center;top:269px;font-size:11.6px;font-weight:bold;color:#10107c">5</div>
<div class="t" style="left:1881px;width:38px;text-align:center;top:309px;font-size:11.6px;font-weight:bold;color:#10107c">10</div>
<div class="t" style="left:1881px;width:38px;text-align:center;top:349px;font-size:11.6px;font-weight:bold;color:#10107c">20</div>
<div class="t" style="left:1881px;width:38px;text-align:center;top:389px;font-size:11.6px;font-weight:bold;color:#10107c">45</div>
<div class="t" style="left:1881px;width:38px;text-align:center;top:429px;font-size:11.6px;font-weight:bold;color:#10107c">120</div>
<div class="t" style="left:1881px;width:38px;text-align:center;top:469px;font-size:11.6px;font-weight:bold;color:#10107c">180</div>
<div class="t" style="left:1881px;width:38px;text-align:center;top:509px;font-size:11.6px;font-weight:bold;color:#10107c">310</div>
<div class="hl" style="left:1883px;top:537px;width:32px;background:#888"></div>
<svg style="left:1884px;top:544px" width="30" height="30" viewBox="0 0 30 30" fill="none" stroke="#444"><circle cx="15" cy="15" r="12.6" stroke-width="1.4"/><g fill="#444" stroke="none"><circle cx="11" cy="9" r="0.7"/><circle cx="17" cy="7" r="0.7"/><circle cx="21" cy="11" r="0.7"/><circle cx="9" cy="15" r="0.7"/><circle cx="14" cy="13" r="0.7"/><circle cx="20" cy="17" r="0.7"/><circle cx="12" cy="20" r="0.7"/><circle cx="17" cy="22" r="0.7"/><circle cx="23" cy="14" r="0.7"/><circle cx="7" cy="11" r="0.7"/><circle cx="15" cy="18" r="0.7"/></g></svg>
<svg style="left:1884px;top:579px" width="30" height="32" viewBox="0 0 30 32"><text x="15" y="18.6" text-anchor="middle" font-family="'Liberation Sans',sans-serif" font-size="20" fill="#444">N</text><path d="M4 24V27M8 25V27M12 24V27M16 21V27M20 25V27M24 24V27" stroke="#444" stroke-width="1.1"/></svg>
<svg style="left:1884px;top:615px" width="30" height="32" viewBox="0 0 30 32"><text x="15" y="18.6" text-anchor="middle" font-family="'Liberation Sans',sans-serif" font-size="20" fill="#444">S</text><path d="M4 24V27M8 25V27M12 24V27M16 21V27M20 25V27M24 24V27" stroke="#444" stroke-width="1.1"/></svg>
<svg style="left:1884px;top:651px" width="30" height="32" viewBox="0 0 30 32"><text x="15" y="18.6" text-anchor="middle" font-family="'Liberation Sans',sans-serif" font-size="20" fill="#444">E</text><path d="M4 24V27M8 25V27M12 24V27M16 21V27M20 25V27M24 24V27" stroke="#444" stroke-width="1.1"/></svg>
<svg style="left:1884px;top:687px" width="30" height="32" viewBox="0 0 30 32"><text x="15" y="18.6" text-anchor="middle" font-family="'Liberation Sans',sans-serif" font-size="20" fill="#444">W</text><path d="M4 24V27M8 25V27M12 24V27M16 21V27M20 25V27M24 24V27" stroke="#444" stroke-width="1.1"/></svg>
<svg style="left:1884px;top:724px" width="30" height="32" viewBox="0 0 30 32"><text x="21" y="22.6" text-anchor="middle" font-family="'Liberation Sans',sans-serif" font-size="20" fill="#444">Z</text><path d="M3 4H6M4 8H6M3 12H6M1 16H8M4 20H6M3 24H6M4 28H6" stroke="#444" stroke-width="1.1"/></svg>
<svg style="left:40px;top:971px" width="1841" height="16" viewBox="0 0 1841 16" fill="none" stroke="#555" stroke-width="2"><path d="M12 5L8.6 7.7L12 10.4M1828 5L1831.4 7.7L1828 10.4"/><rect x="1178" y="1.5" width="41" height="12" fill="#cdcdcd" stroke="none"/></svg>
<div class="vsep" style="left:262px;top:988px;height:42px;background:#a0a0a0"></div>
<div class="t" style="left:0px;top:987px;line-height:20px;font-size:14.69px;white-space:pre">Az:+316°19'57.9" Alt:+39°46'10.6"</div>
<div class="t" style="left:0px;top:1007px;line-height:20px;font-size:14.29px;white-space:pre">RA: 11h11m40.61s DE:+57°40'20.4"</div>
<div class="t" style="left:264px;top:987px;line-height:20px;font-size:14.39px;white-space:pre">RA: 22h55m02.05s DE:+40°29'04.7"  Star: HD216646  Visual magnitude:  5.820  Colour index B-V: 1.136</div>
<div class="t" style="left:264px;top:1007px;line-height:20px;font-size:14.70px;white-space:pre">Circumpolar   Culmination:22h39m00s</div>
<svg id="chart" style="left:40px;top:136px" width="1825" height="835" viewBox="40 136 1825 835" font-family="'Liberation Sans',sans-serif">
<defs><clipPath id="cc"><rect x="40" y="136" width="1825" height="835"/></clipPath><clipPath id="gc"><polygon points="23.9,546.4 33.1,550.5 42.4,554.6 51.7,558.7 61.0,562.7 70.2,566.8 79.5,570.9 88.8,575.0 98.1,579.1 107.4,583.1 116.7,587.2 126.0,591.3 135.4,595.3 144.7,599.4 154.0,603.4 163.4,607.4 172.7,611.4 182.1,615.4 191.5,619.4 200.9,623.4 210.3,627.3 219.8,631.3 229.2,635.2 238.7,639.1 248.2,643.0 257.7,646.8 267.2,650.7 276.8,654.5 286.3,658.3 295.9,662.1 305.5,665.8 315.2,669.6 324.9,673.3 334.5,676.9 344.3,680.6 354.0,684.2 363.8,687.8 373.6,691.3 383.4,694.8 393.2,698.3 403.1,701.7 413.0,705.1 423.0,708.5 432.9,711.8 442.9,715.1 453.0,718.4 463.0,721.6 473.1,724.7 483.2,727.9 493.4,730.9 503.6,733.9 513.8,736.9 524.0,739.8 534.3,742.7 544.6,745.5 555.0,748.3 565.4,751.0 575.8,753.6 586.2,756.2 596.7,758.7 607.2,761.2 617.7,763.6 628.3,766.0 638.9,768.2 649.5,770.5 660.1,772.6 670.8,774.7 681.5,776.7 692.2,778.6 703.0,780.5 713.8,782.3 724.6,784.0 735.4,785.7 746.2,787.3 757.1,788.8 768.0,790.2 778.9,791.5 789.9,792.8 800.8,794.0 811.8,795.1 822.8,796.1 833.8,797.1 844.8,797.9 855.8,798.7 866.8,799.4 877.9,800.0 888.9,800.5 900.0,801.0 911.1,801.4 922.1,801.6 933.2,801.8 944.3,801.9 955.4,801.9 966.5,801.9 977.5,801.7 988.6,801.5 999.7,801.2 1010.8,800.8 1021.8,800.3 1032.9,799.7 1043.9,799.1 1054.9,798.3 1066.0,797.5 1077.0,796.6 1087.9,795.6 1098.9,794.5 1109.9,793.4 1120.8,792.1 1131.8,790.8 1142.7,789.5 1153.5,788.0 1164.4,786.5 1175.2,784.8 1186.1,783.1 1196.8,781.4 1207.6,779.5 1218.4,777.6 1229.1,775.7 1239.8,773.6 1250.4,771.5 1261.1,769.3 1271.7,767.1 1282.2,764.7 1292.8,762.4 1303.3,759.9 1313.8,757.4 1324.2,754.9 1334.6,752.3 1345.0,749.6 1355.4,746.8 1365.7,744.1 1376.0,741.2 1386.3,738.3 1396.5,735.4 1406.7,732.4 1416.9,729.3 1427.0,726.2 1437.1,723.1 1447.2,719.9 1457.3,716.7 1467.3,713.4 1477.2,710.1 1487.2,706.8 1497.1,703.4 1507.0,700.0 1516.9,696.5 1526.7,693.0 1536.5,689.5 1546.3,685.9 1556.1,682.3 1565.8,678.7 1575.5,675.0 1585.2,671.3 1594.8,667.6 1604.5,663.9 1614.1,660.1 1623.6,656.3 1633.2,652.5 1642.7,648.7 1652.3,644.8 1661.8,641.0 1671.2,637.1 1680.7,633.1 1690.1,629.2 1699.6,625.3 1709.0,621.3 1718.4,617.3 1727.8,613.3 1737.1,609.3 1746.5,605.3 1755.8,601.3 1765.2,597.3 1774.5,593.2 1783.8,589.2 1793.1,585.1 1802.4,581.0 1811.7,576.9 1821.0,572.9 1830.3,568.8 1839.6,564.7 1848.9,560.6 1858.1,556.5 1867.4,552.4 1876.7,548.3 2100.0,1100.0 -200.0,1100.0"/></clipPath></defs>
<g clip-path="url(#cc)">
<rect x="40" y="136" width="1825" height="835" fill="#000022"/>
<polygon points="1040.2,136.0 1052.8,138.0 1075.6,142.3 1088.2,151.1 1095.7,163.8 1098.3,175.1 1088.2,176.4 1065.5,173.9 1042.7,168.8 1027.6,161.2 1022.6,156.2 1012.5,147.4 992.3,146.1 972.1,148.6 964.5,157.5 939.3,159.2 924.1,161.2 919.1,173.9 916.6,182.7 906.5,185.2 883.8,186.5 877.4,191.5 876.2,201.6 877.4,211.7 874.9,229.4 871.1,242.0 873.7,252.1 887.5,257.1 898.9,255.9 901.4,250.8 926.7,247.0 949.4,247.0 951.9,254.6 949.4,264.7 939.3,273.5 924.1,279.8 906.5,282.4 891.3,287.4 881.2,297.5 876.2,307.6 863.6,320.2 848.4,327.8 825.7,330.3 814.4,337.9 810.6,348.0 806.2,352.0 804.3,362.6 805.5,375.2 811.8,382.8 813.1,386.6 805.5,387.9 799.2,381.5 791.6,373.3 782.8,372.1 775.2,374.0 762.6,380.3 753.8,386.6 752.0,392.0 700.0,420.0 600.0,480.0 420.0,590.0 280.0,670.0 200.0,698.0 155.5,705.5 138.0,747.0 129.0,779.6 99.0,824.0 70.0,845.0 40.0,851.0 40.0,971.0 440.0,971.0 520.0,900.0 620.0,750.0 700.0,630.0 750.0,579.8 765.5,576.7 787.3,564.3 812.0,542.5 840.0,496.0 846.3,486.6 853.5,468.6 858.5,459.8 861.0,450.9 866.1,445.9 876.2,445.9 895.1,449.7 907.7,454.7 926.7,450.9 950.0,449.7 992.3,440.0 998.6,428.3 1014.0,409.6 1029.6,394.0 1035.0,378.3 1047.8,363.1 1062.9,345.5 1075.6,330.3 1085.6,315.2 1103.3,312.7 1135.0,310.5 1170.0,309.0 1190.0,304.0 1208.0,299.0 1220.0,290.0 1241.0,281.0 1274.0,272.0 1309.5,267.0 1340.0,259.7 1365.0,254.6 1385.0,252.0 1415.5,252.6 1453.0,252.6 1478.5,250.8 1496.0,243.0 1529.0,247.0 1553.7,251.8 1578.6,246.5 1609.6,240.3 1640.7,235.6 1653.0,227.9 1671.8,226.3 1702.8,226.3 1733.9,229.4 1765.0,240.3 1789.8,241.8 1809.0,237.5 1826.0,254.0 1843.0,272.0 1858.0,292.0 1865.0,301.0 1865.0,136.0" fill="#202140"/>
<g clip-path="url(#gc)"><rect x="40" y="136" width="1825" height="835" fill="#261a21"/><polygon points="1040.2,136.0 1052.8,138.0 1075.6,142.3 1088.2,151.1 1095.7,163.8 1098.3,175.1 1088.2,176.4 1065.5,173.9 1042.7,168.8 1027.6,161.2 1022.6,156.2 1012.5,147.4 992.3,146.1 972.1,148.6 964.5,157.5 939.3,159.2 924.1,161.2 919.1,173.9 916.6,182.7 906.5,185.2 883.8,186.5 877.4,191.5 876.2,201.6 877.4,211.7 874.9,229.4 871.1,242.0 873.7,252.1 887.5,257.1 898.9,255.9 901.4,250.8 926.7,247.0 949.4,247.0 951.9,254.6 949.4,264.7 939.3,273.5 924.1,279.8 906.5,282.4 891.3,287.4 881.2,297.5 876.2,307.6 863.6,320.2 848.4,327.8 825.7,330.3 814.4,337.9 810.6,348.0 806.2,352.0 804.3,362.6 805.5,375.2 811.8,382.8 813.1,386.6 805.5,387.9 799.2,381.5 791.6,373.3 782.8,372.1 775.2,374.0 762.6,380.3 753.8,386.6 752.0,392.0 700.0,420.0 600.0,480.0 420.0,590.0 280.0,670.0 200.0,698.0 155.5,705.5 138.0,747.0 129.0,779.6 99.0,824.0 70.0,845.0 40.0,851.0 40.0,971.0 440.0,971.0 520.0,900.0 620.0,750.0 700.0,630.0 750.0,579.8 765.5,576.7 787.3,564.3 812.0,542.5 840.0,496.0 846.3,486.6 853.5,468.6 858.5,459.8 861.0,450.9 866.1,445.9 876.2,445.9 895.1,449.7 907.7,454.7 926.7,450.9 950.0,449.7 992.3,440.0 998.6,428.3 1014.0,409.6 1029.6,394.0 1035.0,378.3 1047.8,363.1 1062.9,345.5 1075.6,330.3 1085.6,315.2 1103.3,312.7 1135.0,310.5 1170.0,309.0 1190.0,304.0 1208.0,299.0 1220.0,290.0 1241.0,281.0 1274.0,272.0 1309.5,267.0 1340.0,259.7 1365.0,254.6 1385.0,252.0 1415.5,252.6 1453.0,252.6 1478.5,250.8 1496.0,243.0 1529.0,247.0 1553.7,251.8 1578.6,246.5 1609.6,240.3 1640.7,235.6 1653.0,227.9 1671.8,226.3 1702.8,226.3 1733.9,229.4 1765.0,240.3 1789.8,241.8 1809.0,237.5 1826.0,254.0 1843.0,272.0 1858.0,292.0 1865.0,301.0 1865.0,136.0" fill="#2c2030"/></g>
<polyline points="-298.0,933.5 -290.3,937.7 -282.6,942.0 -274.9,946.3 -267.1,950.6 -259.4,955.0 -251.6,959.5 -243.8,964.0 -236.0,968.6 -228.1,973.2 -220.3,977.9 -212.4,982.7 -204.5,987.5 -196.6,992.3 -188.6,997.2 -180.7,1002.2 -172.7,1007.2 -164.6,1012.3 -156.6,1017.4 -148.5,1022.6 -140.4,1027.8 -132.2,1033.1 -124.0,1038.5 -115.8,1043.9 -107.5,1049.3 -99.2,1054.9 -90.8,1060.4 -82.4,1066.1 -74.0,1071.8 -65.5,1077.5 -57.0,1083.3 -48.4,1089.2 -39.7,1095.1 -31.0,1101.0 -22.3,1107.1 -13.4,1113.2 -4.5,1119.3 4.4,1125.5 13.4,1131.8 22.5,1138.1 31.7,1144.4 40.9,1150.9 50.3,1157.3 59.7,1163.9 69.2,1170.5 78.8,1177.1 88.4,1183.8 98.2,1190.5 108.1,1197.3 118.1,1204.2 128.1,1211.1 138.3,1218.0 148.6,1225.0 159.1,1232.0 169.6,1239.1 180.3,1246.3 191.1,1253.4 202.0,1260.6 213.1,1267.9 224.4,1275.1 235.7,1282.4 247.3,1289.8 259.0,1297.1 270.8,1304.5 282.8,1311.9 295.1,1319.3 307.4,1326.7 320.0,1334.1 332.8,1341.6 345.7,1349.0 358.9,1356.4 372.2,1363.7 385.8,1371.1 399.6,1378.4 413.6,1385.7 427.9,1392.9" stroke="#9a9aa8" stroke-opacity="0.45" stroke-width="1" fill="none"/>
<polyline points="1470.2,1396.3 1484.6,1389.2 1498.7,1381.9 1512.6,1374.6 1526.3,1367.3 1539.7,1359.9 1553.0,1352.5 1566.0,1345.1 1578.9,1337.7 1591.6,1330.3 1604.0,1322.9 1616.3,1315.5 1628.4,1308.1 1640.4,1300.7 1652.1,1293.3 1663.8,1286.0 1675.2,1278.6 1686.5,1271.4 1697.7,1264.1 1708.7,1256.9 1719.5,1249.7 1730.3,1242.5 1740.9,1235.4 1751.4,1228.4 1761.7,1221.4 1772.0,1214.4 1782.1,1207.5 1792.1,1200.6 1802.1,1193.8 1811.9,1187.0 1821.6,1180.3 1831.2,1173.6 1840.8,1167.0 1850.2,1160.5 1859.6,1154.0 1868.9,1147.5 1878.1,1141.1 1887.2,1134.8 1896.3,1128.5 1905.3,1122.3 1914.2,1116.1 1923.0,1110.0 1931.8,1103.9 1940.6,1097.9 1949.2,1092.0 1957.8,1086.1 1966.4,1080.3 1974.9,1074.5 1983.4,1068.8 1991.8,1063.1 2000.2,1057.5 2008.5,1052.0 2016.8,1046.5 2025.1,1041.1 2033.3,1035.7 2041.4,1030.4 2049.6,1025.1 2057.7,1019.9 2065.8,1014.7 2073.8,1009.6 2081.8,1004.6 2089.8,999.6 2097.8,994.7 2105.7,989.8 2113.6,985.0 2121.5,980.2 2129.4,975.5 2137.2,970.8 2145.0,966.2 2152.8,961.7 2160.6,957.2 2168.4,952.7 2176.1,948.4 2183.9,944.0 2191.6,939.7 2199.3,935.5" stroke="#9a9aa8" stroke-opacity="0.45" stroke-width="1" fill="none"/>
<polyline points="-297.6,744.1 -289.1,747.8 -280.6,751.4 -272.0,755.1 -263.5,758.9 -254.9,762.7 -246.4,766.5 -237.8,770.4 -229.3,774.3 -220.7,778.2 -212.1,782.2 -203.5,786.2 -194.9,790.3 -186.3,794.4 -177.7,798.5 -169.1,802.7 -160.4,806.9 -151.8,811.1 -143.1,815.4 -134.4,819.7 -125.7,824.0 -117.0,828.4 -108.2,832.8 -99.4,837.3 -90.6,841.7 -81.8,846.2 -73.0,850.8 -64.1,855.3 -55.2,859.9 -46.3,864.6 -37.3,869.2 -28.4,873.9 -19.3,878.6 -10.3,883.3 -1.2,888.1 7.9,892.9 17.1,897.7 26.3,902.5 35.5,907.4 44.8,912.3 54.1,917.2 63.5,922.1 72.9,927.1 82.3,932.0 91.9,937.0 101.4,942.0 111.0,947.0 120.7,952.1 130.4,957.1 140.2,962.2 150.1,967.3 160.0,972.3 169.9,977.4 180.0,982.5 190.1,987.6 200.2,992.8 210.5,997.9 220.8,1003.0 231.2,1008.1 241.6,1013.2 252.1,1018.3 262.8,1023.4 273.5,1028.5 284.2,1033.6 295.1,1038.7 306.0,1043.8 317.1,1048.8 328.2,1053.8 339.4,1058.8 350.7,1063.8 362.1,1068.8 373.6,1073.7 385.2,1078.6 396.9,1083.4 408.7,1088.2 420.6,1093.0 432.6,1097.7 444.7,1102.4 456.9,1107.0 469.2,1111.6 481.6,1116.1 494.1,1120.5 506.7,1124.9 519.4,1129.2 532.2,1133.4 545.1,1137.5 558.2,1141.6 571.3,1145.5 584.5,1149.4 597.9,1153.1 611.3,1156.8 624.8,1160.3 638.4,1163.8 652.2,1167.1 666.0,1170.3 679.9,1173.4 693.9,1176.3 708.0,1179.1 722.1,1181.8 736.4,1184.3 750.7,1186.7 765.1,1188.9 779.5,1191.0 794.0,1192.9 808.6,1194.7 823.2,1196.2 837.9,1197.7 852.6,1198.9 867.4,1200.0 882.1,1201.0 897.0,1201.7 911.8,1202.3 926.6,1202.7 941.5,1202.9 956.4,1202.9 971.2,1202.8 986.1,1202.5 1000.9,1202.0 1015.7,1201.3 1030.5,1200.5 1045.3,1199.5 1060.0,1198.3 1074.7,1197.0 1089.4,1195.4 1104.0,1193.8 1118.5,1191.9 1133.0,1189.9 1147.4,1187.8 1161.8,1185.5 1176.0,1183.0 1190.2,1180.4 1204.4,1177.7 1218.4,1174.8 1232.3,1171.8 1246.2,1168.6 1260.0,1165.4 1273.7,1162.0 1287.2,1158.5 1300.7,1154.9 1314.1,1151.2 1327.4,1147.4 1340.6,1143.5 1353.6,1139.5 1366.6,1135.4 1379.5,1131.2 1392.2,1126.9 1404.9,1122.6 1417.5,1118.2 1429.9,1113.7 1442.3,1109.2 1454.5,1104.6 1466.6,1100.0 1478.7,1095.3 1490.6,1090.5 1502.4,1085.7 1514.2,1080.9 1525.8,1076.0 1537.4,1071.1 1548.8,1066.2 1560.2,1061.2 1571.4,1056.2 1582.6,1051.2 1593.7,1046.2 1604.7,1041.1 1615.6,1036.1 1626.4,1031.0 1637.1,1025.9 1647.8,1020.8 1658.3,1015.7 1668.8,1010.6 1679.3,1005.4 1689.6,1000.3 1699.9,995.2 1710.1,990.1 1720.2,985.0 1730.3,979.9 1740.3,974.8 1750.2,969.7 1760.1,964.6 1769.9,959.5 1779.6,954.5 1789.3,949.4 1799.0,944.4 1808.6,939.4 1818.1,934.4 1827.6,929.4 1837.0,924.5 1846.4,919.5 1855.7,914.6 1865.0,909.7 1874.3,904.9 1883.5,900.0 1892.7,895.2 1901.8,890.4 1910.9,885.6 1920.0,880.9 1929.0,876.1 1938.0,871.5 1947.0,866.8 1955.9,862.1 1964.8,857.5 1973.7,853.0 1982.6,848.4 1991.4,843.9 2000.2,839.4 2009.0,834.9 2017.8,830.5 2026.5,826.1 2035.2,821.8 2043.9,817.5 2052.6,813.2 2061.3,808.9 2069.9,804.7 2078.6,800.5 2087.2,796.4 2095.8,792.2 2104.4,788.2 2113.0,784.1 2121.6,780.1 2130.2,776.2 2138.7,772.2 2147.3,768.4 2155.8,764.5 2164.4,760.7 2172.9,756.9 2181.5,753.2 2190.0,749.5 2198.5,745.9" stroke="#9a9aa8" stroke-opacity="0.45" stroke-width="1" fill="none"/>
<polyline points="-293.7,578.8 -284.5,582.3 -275.4,585.8 -266.2,589.3 -257.1,592.8 -247.9,596.4 -238.8,600.1 -229.7,603.7 -220.6,607.4 -211.4,611.1 -202.3,614.9 -193.2,618.6 -184.1,622.4 -175.1,626.3 -166.0,630.1 -156.9,634.0 -147.8,637.9 -138.7,641.8 -129.6,645.8 -120.5,649.8 -111.4,653.8 -102.3,657.8 -93.2,661.8 -84.1,665.9 -75.0,670.0 -65.9,674.1 -56.8,678.2 -47.6,682.3 -38.5,686.5 -29.3,690.6 -20.2,694.8 -11.0,699.0 -1.8,703.2 7.4,707.5 16.6,711.7 25.9,715.9 35.1,720.2 44.4,724.5 53.7,728.7 63.0,733.0 72.4,737.3 81.7,741.6 91.1,745.9 100.5,750.2 110.0,754.5 119.4,758.8 128.9,763.1 138.5,767.4 148.0,771.7 157.6,776.0 167.2,780.3 176.9,784.6 186.5,788.9 196.3,793.2 206.0,797.5 215.8,801.7 225.6,806.0 235.5,810.3 245.4,814.5 255.4,818.7 265.4,822.9 275.4,827.1 285.5,831.3 295.7,835.4 305.8,839.6 316.1,843.7 326.3,847.8 336.7,851.8 347.0,855.9 357.5,859.9 367.9,863.9 378.5,867.8 389.1,871.7 399.7,875.6 410.4,879.4 421.1,883.2 431.9,887.0 442.8,890.7 453.7,894.4 464.6,898.0 475.7,901.6 486.7,905.1 497.9,908.5 509.1,912.0 520.3,915.3 531.6,918.6 543.0,921.8 554.4,925.0 565.9,928.1 577.4,931.1 589.0,934.1 600.6,937.0 612.3,939.8 624.0,942.6 635.8,945.2 647.7,947.8 659.6,950.3 671.5,952.7 683.5,955.0 695.5,957.3 707.6,959.4 719.7,961.5 731.9,963.4 744.1,965.3 756.4,967.0 768.6,968.7 780.9,970.3 793.3,971.7 805.7,973.1 818.1,974.3 830.5,975.5 843.0,976.5 855.4,977.4 867.9,978.2 880.5,978.9 893.0,979.5 905.5,980.0 918.1,980.4 930.6,980.6 943.2,980.8 955.8,980.8 968.3,980.7 980.9,980.5 993.4,980.2 1006.0,979.8 1018.5,979.2 1031.0,978.6 1043.6,977.8 1056.0,977.0 1068.5,976.0 1081.0,974.9 1093.4,973.7 1105.8,972.4 1118.1,971.0 1130.5,969.5 1142.8,967.9 1155.0,966.1 1167.2,964.3 1179.4,962.4 1191.6,960.4 1203.7,958.3 1215.7,956.1 1227.7,953.8 1239.7,951.5 1251.6,949.0 1263.5,946.5 1275.3,943.8 1287.1,941.1 1298.8,938.4 1310.5,935.5 1322.1,932.6 1333.6,929.6 1345.1,926.5 1356.6,923.4 1367.9,920.2 1379.3,916.9 1390.5,913.6 1401.8,910.2 1412.9,906.7 1424.0,903.3 1435.1,899.7 1446.1,896.1 1457.0,892.5 1467.9,888.8 1478.7,885.0 1489.5,881.3 1500.2,877.4 1510.9,873.6 1521.5,869.7 1532.0,865.8 1542.5,861.8 1553.0,857.8 1563.4,853.8 1573.7,849.7 1584.0,845.7 1594.3,841.6 1604.5,837.4 1614.6,833.3 1624.7,829.1 1634.8,824.9 1644.8,820.7 1654.8,816.5 1664.7,812.3 1674.6,808.1 1684.5,803.8 1694.3,799.5 1704.1,795.3 1713.8,791.0 1723.5,786.7 1733.2,782.4 1742.8,778.1 1752.4,773.8 1762.0,769.5 1771.5,765.2 1781.0,760.9 1790.5,756.6 1799.9,752.2 1809.4,747.9 1818.8,743.6 1828.1,739.3 1837.5,735.1 1846.8,730.8 1856.1,726.5 1865.4,722.2 1874.7,718.0 1883.9,713.7 1893.2,709.5 1902.4,705.3 1911.6,701.0 1920.8,696.8 1929.9,692.7 1939.1,688.5 1948.2,684.3 1957.4,680.2 1966.5,676.0 1975.6,671.9 1984.7,667.8 1993.9,663.8 2003.0,659.7 2012.1,655.7 2021.2,651.7 2030.2,647.7 2039.3,643.7 2048.4,639.8 2057.5,635.9 2066.6,632.0 2075.7,628.1 2084.8,624.3 2093.9,620.4 2103.0,616.7 2112.1,612.9 2121.2,609.2 2130.3,605.5 2139.4,601.8 2148.5,598.2 2157.7,594.6 2166.8,591.0 2176.0,587.4 2185.1,583.9 2194.3,580.5" stroke="#9a9aa8" stroke-opacity="0.45" stroke-width="1" fill="none"/>
<polyline points="-293.0,241.2 -282.5,245.2 -272.0,249.2 -261.6,253.2 -251.3,257.3 -241.0,261.3 -230.7,265.4 -220.5,269.6 -210.4,273.7 -200.3,277.9 -190.2,282.1 -180.2,286.3 -170.2,290.5 -160.3,294.7 -150.4,298.9 -140.5,303.2 -130.7,307.5 -120.9,311.7 -111.2,316.0 -101.5,320.3 -91.8,324.6 -82.2,328.9 -72.6,333.2 -63.0,337.5 -53.5,341.8 -44.0,346.1 -34.5,350.4 -25.1,354.8 -15.6,359.1 -6.2,363.4 3.1,367.7 12.5,371.9 21.8,376.2 31.1,380.5 40.4,384.8 49.7,389.0 58.9,393.3 68.2,397.5 77.4,401.7 86.6,406.0 95.8,410.2 104.9,414.3 114.1,418.5 123.2,422.7 132.4,426.8 141.5,431.0 150.6,435.1 159.7,439.2 168.9,443.2 178.0,447.3 187.1,451.3 196.2,455.3 205.2,459.3 214.3,463.3 223.4,467.2 232.5,471.1 241.6,475.0 250.7,478.9 259.8,482.7 268.9,486.6 278.0,490.3 287.1,494.1 296.2,497.8 305.3,501.5 314.4,505.2 323.5,508.8 332.7,512.4 341.8,516.0 351.0,519.6 360.1,523.1 369.3,526.5 378.5,530.0 387.7,533.4 396.9,536.7 406.1,540.1 415.3,543.3 424.6,546.6 433.8,549.8 443.1,553.0 452.4,556.1 461.7,559.2 471.0,562.2 480.3,565.2 489.6,568.1 499.0,571.0 508.4,573.9 517.8,576.7 527.2,579.5 536.6,582.2 546.0,584.8 555.5,587.5 564.9,590.0 574.4,592.5 583.9,595.0 593.5,597.4 603.0,599.7 612.6,602.0 622.1,604.3 631.7,606.5 641.3,608.6 650.9,610.7 660.6,612.7 670.2,614.6 679.9,616.5 689.6,618.3 699.3,620.1 709.0,621.8 718.7,623.5 728.4,625.0 738.2,626.6 748.0,628.0 757.7,629.4 767.5,630.7 777.3,632.0 787.1,633.2 797.0,634.3 806.8,635.4 816.6,636.4 826.5,637.3 836.3,638.1 846.2,638.9 856.1,639.6 866.0,640.3 875.9,640.9 885.7,641.4 895.6,641.8 905.5,642.2 915.4,642.5 925.3,642.7 935.3,642.9 945.2,643.0 955.1,643.0 965.0,642.9 974.9,642.8 984.8,642.6 994.7,642.3 1004.6,642.0 1014.5,641.6 1024.4,641.1 1034.3,640.6 1044.2,640.0 1054.1,639.3 1063.9,638.5 1073.8,637.7 1083.6,636.8 1093.5,635.8 1103.3,634.8 1113.2,633.7 1123.0,632.6 1132.8,631.3 1142.6,630.0 1152.4,628.7 1162.1,627.3 1171.9,625.8 1181.6,624.2 1191.4,622.6 1201.1,620.9 1210.8,619.2 1220.5,617.4 1230.1,615.5 1239.8,613.6 1249.4,611.6 1259.1,609.6 1268.7,607.5 1278.3,605.3 1287.9,603.1 1297.4,600.9 1307.0,598.5 1316.5,596.1 1326.0,593.7 1335.5,591.2 1345.0,588.7 1354.4,586.1 1363.9,583.5 1373.3,580.8 1382.7,578.0 1392.1,575.3 1401.5,572.4 1410.9,569.5 1420.2,566.6 1429.6,563.6 1438.9,560.6 1448.2,557.6 1457.5,554.5 1466.7,551.3 1476.0,548.1 1485.2,544.9 1494.5,541.6 1503.7,538.3 1512.9,535.0 1522.1,531.6 1531.3,528.2 1540.5,524.7 1549.6,521.2 1558.8,517.7 1567.9,514.2 1577.1,510.6 1586.2,506.9 1595.3,503.3 1604.4,499.6 1613.6,495.9 1622.7,492.1 1631.8,488.4 1640.9,484.6 1649.9,480.7 1659.0,476.9 1668.1,473.0 1677.2,469.1 1686.3,465.2 1695.4,461.2 1704.5,457.2 1713.6,453.2 1722.7,449.2 1731.8,445.2 1740.9,441.1 1750.0,437.0 1759.1,432.9 1768.2,428.8 1777.4,424.7 1786.5,420.5 1795.7,416.4 1804.8,412.2 1814.0,408.0 1823.2,403.8 1832.4,399.5 1841.6,395.3 1850.9,391.1 1860.1,386.8 1869.4,382.5 1878.7,378.3 1888.0,374.0 1897.4,369.7 1906.7,365.4 1916.1,361.1 1925.5,356.8 1935.0,352.5 1944.4,348.2 1953.9,343.9 1963.5,339.6 1973.0,335.3 1982.6,331.0 1992.2,326.7 2001.9,322.4 2011.5,318.1 2021.3,313.8 2031.0,309.5 2040.8,305.3 2050.6,301.0 2060.5,296.7 2070.4,292.5 2080.4,288.3 2090.4,284.1 2100.4,279.9 2110.5,275.7 2120.7,271.6 2130.8,267.4 2141.1,263.3 2151.3,259.2 2161.7,255.2 2172.0,251.1 2182.5,247.1 2192.9,243.1" stroke="#9a9aa8" stroke-opacity="0.45" stroke-width="1" fill="none"/>
<polyline points="-299.2,31.0 -287.6,35.9 -276.2,40.8 -264.8,45.8 -253.6,50.8 -242.4,55.8 -231.3,60.8 -220.3,65.9 -209.4,70.9 -198.6,76.0 -187.9,81.1 -177.2,86.2 -166.7,91.3 -156.2,96.4 -145.7,101.6 -135.4,106.7 -125.1,111.8 -114.9,116.9 -104.8,122.0 -94.7,127.1 -84.7,132.2 -74.8,137.3 -64.9,142.4 -55.1,147.5 -45.4,152.5 -35.7,157.6 -26.0,162.6 -16.4,167.6 -6.9,172.6 2.6,177.6 12.0,182.5 21.4,187.5 30.7,192.4 40.0,197.3 49.3,202.1 58.5,207.0 67.7,211.8 76.8,216.6 85.9,221.4 95.0,226.1 104.0,230.9 113.0,235.5 122.0,240.2 130.9,244.9 139.8,249.5 148.7,254.0 157.6,258.6 166.4,263.1 175.2,267.6 184.0,272.1 192.8,276.5 201.5,280.9 210.2,285.2 218.9,289.5 227.6,293.8 236.3,298.1 244.9,302.3 253.6,306.5 262.2,310.6 270.8,314.8 279.4,318.8 288.0,322.9 296.6,326.9 305.2,330.8 313.7,334.8 322.3,338.6 330.8,342.5 339.4,346.3 347.9,350.1 356.5,353.8 365.0,357.5 373.5,361.1 382.1,364.7 390.6,368.3 399.1,371.8 407.6,375.3 416.1,378.7 424.7,382.1 433.2,385.5 441.7,388.8 450.3,392.0 458.8,395.2 467.3,398.4 475.9,401.5 484.4,404.6 492.9,407.6 501.5,410.6 510.0,413.5 518.6,416.4 527.2,419.2 535.7,422.0 544.3,424.7 552.9,427.4 561.5,430.0 570.1,432.6 578.7,435.2 587.3,437.6 595.9,440.1 604.5,442.4 613.2,444.8 621.8,447.0 630.5,449.2 639.1,451.4 647.8,453.5 656.4,455.6 665.1,457.6 673.8,459.5 682.5,461.4 691.2,463.2 699.9,465.0 708.6,466.7 717.3,468.4 726.1,470.0 734.8,471.5 743.5,473.0 752.3,474.4 761.0,475.8 769.8,477.1 778.6,478.3 787.3,479.5 796.1,480.6 804.9,481.7 813.7,482.7 822.5,483.6 831.3,484.5 840.1,485.4 848.9,486.1 857.7,486.8 866.5,487.5 875.3,488.0 884.2,488.5 893.0,489.0 901.8,489.4 910.6,489.7 919.5,490.0 928.3,490.2 937.1,490.3 946.0,490.4 954.8,490.4 963.6,490.4 972.5,490.3 981.3,490.1 990.1,489.8 999.0,489.5 1007.8,489.2 1016.6,488.8 1025.4,488.3 1034.2,487.7 1043.1,487.1 1051.9,486.5 1060.7,485.7 1069.5,484.9 1078.3,484.1 1087.1,483.2 1095.9,482.2 1104.7,481.2 1113.4,480.1 1122.2,478.9 1131.0,477.7 1139.8,476.4 1148.5,475.1 1157.3,473.7 1166.0,472.2 1174.7,470.7 1183.5,469.1 1192.2,467.5 1200.9,465.8 1209.6,464.1 1218.3,462.3 1227.0,460.4 1235.7,458.5 1244.4,456.5 1253.1,454.5 1261.7,452.4 1270.4,450.3 1279.0,448.1 1287.7,445.9 1296.3,443.6 1304.9,441.2 1313.6,438.8 1322.2,436.4 1330.8,433.8 1339.4,431.3 1348.0,428.7 1356.6,426.0 1365.1,423.3 1373.7,420.6 1382.3,417.7 1390.8,414.9 1399.4,412.0 1408.0,409.0 1416.5,406.0 1425.0,403.0 1433.6,399.9 1442.1,396.7 1450.7,393.6 1459.2,390.3 1467.7,387.0 1476.2,383.7 1484.8,380.4 1493.3,376.9 1501.8,373.5 1510.3,370.0 1518.9,366.4 1527.4,362.9 1535.9,359.2 1544.4,355.6 1553.0,351.9 1561.5,348.1 1570.1,344.3 1578.6,340.5 1587.2,336.6 1595.7,332.7 1604.3,328.8 1612.9,324.8 1621.5,320.8 1630.1,316.7 1638.7,312.6 1647.3,308.5 1655.9,304.3 1664.6,300.1 1673.2,295.9 1681.9,291.6 1690.6,287.3 1699.3,283.0 1708.0,278.6 1716.8,274.2 1725.6,269.7 1734.4,265.3 1743.2,260.8 1752.0,256.2 1760.9,251.7 1769.8,247.1 1778.7,242.4 1787.7,237.8 1796.6,233.1 1805.7,228.4 1814.7,223.7 1823.8,218.9 1832.9,214.1 1842.1,209.3 1851.3,204.5 1860.5,199.6 1869.8,194.7 1879.1,189.8 1888.5,184.9 1897.9,179.9 1907.3,175.0 1916.9,170.0 1926.4,165.0 1936.0,160.0 1945.7,154.9 1955.4,149.9 1965.2,144.8 1975.1,139.7 1985.0,134.7 1994.9,129.6 2005.0,124.5 2015.1,119.4 2025.2,114.2 2035.5,109.1 2045.8,104.0 2056.2,98.9 2066.6,93.8 2077.1,88.7 2087.8,83.6 2098.5,78.5 2109.2,73.4 2120.1,68.3 2131.0,63.2 2142.1,58.2 2153.2,53.2 2164.4,48.2 2175.7,43.2 2187.1,38.2 2198.6,33.3" stroke="#9a9aa8" stroke-opacity="0.45" stroke-width="1" fill="none"/>
<polyline points="-298.7,-260.3 -285.3,-252.9 -272.0,-245.5 -259.0,-238.1 -246.1,-230.7 -233.4,-223.3 -221.0,-215.9 -208.7,-208.5 -196.6,-201.1 -184.6,-193.7 -172.9,-186.3 -161.2,-179.0 -149.8,-171.6 -138.5,-164.4 -127.3,-157.1 -116.3,-149.9 -105.5,-142.7 -94.7,-135.5 -84.1,-128.4 -73.6,-121.4 -63.3,-114.4 -53.0,-107.4 -42.9,-100.5 -32.9,-93.6 -22.9,-86.8 -13.1,-80.0 -3.4,-73.3 6.2,-66.6 15.8,-60.0 25.2,-53.5 34.6,-47.0 43.9,-40.5 53.1,-34.1 62.2,-27.8 71.3,-21.5 80.3,-15.3 89.2,-9.1 98.0,-3.0 106.8,3.1 115.6,9.1 124.2,15.0 132.8,20.9 141.4,26.7 149.9,32.5 158.4,38.2 166.8,43.9 175.2,49.5 183.5,55.0 191.8,60.5 200.1,65.9 208.3,71.3 216.4,76.6 224.6,81.9 232.7,87.1 240.8,92.3 248.8,97.4 256.8,102.4 264.8,107.4 272.8,112.3 280.7,117.2 288.6,122.0 296.5,126.8 304.4,131.5 312.2,136.2 320.0,140.8 327.8,145.3 335.6,149.8 343.4,154.3 351.1,158.6 358.9,163.0 366.6,167.3 374.3,171.5 382.0,175.7 389.7,179.8 397.4,183.8 405.1,187.9 412.7,191.8 420.4,195.7 428.0,199.6 435.6,203.4 443.3,207.1 450.9,210.8 458.5,214.5 466.1,218.0 473.7,221.6 481.3,225.1 488.9,228.5 496.5,231.8 504.1,235.2 511.7,238.4 519.3,241.6 526.9,244.8 534.4,247.9 542.0,251.0 549.6,254.0 557.2,256.9 564.8,259.8 572.4,262.6 579.9,265.4 587.5,268.1 595.1,270.8 602.7,273.4 610.3,276.0 617.9,278.5 625.5,280.9 633.1,283.3 640.7,285.7 648.3,288.0 655.9,290.2 663.5,292.4 671.1,294.5 678.7,296.6 686.3,298.6 693.9,300.6 701.5,302.5 709.2,304.3 716.8,306.1 724.4,307.8 732.1,309.5 739.7,311.1 747.3,312.7 755.0,314.2 762.6,315.7 770.3,317.1 777.9,318.4 785.6,319.7 793.2,320.9 800.9,322.1 808.6,323.2 816.2,324.2 823.9,325.2 831.6,326.2 839.2,327.1 846.9,327.9 854.6,328.7 862.3,329.4 869.9,330.0 877.6,330.6 885.3,331.2 893.0,331.6 900.7,332.0 908.4,332.4 916.1,332.7 923.7,333.0 931.4,333.1 939.1,333.3 946.8,333.4 954.5,333.4 962.2,333.3 969.9,333.2 977.6,333.1 985.3,332.8 992.9,332.6 1000.6,332.2 1008.3,331.8 1016.0,331.4 1023.7,330.9 1031.4,330.3 1039.1,329.7 1046.7,329.0 1054.4,328.3 1062.1,327.5 1069.8,326.6 1077.4,325.7 1085.1,324.7 1092.8,323.7 1100.4,322.6 1108.1,321.5 1115.8,320.3 1123.4,319.0 1131.1,317.7 1138.7,316.3 1146.4,314.9 1154.0,313.4 1161.6,311.9 1169.3,310.3 1176.9,308.7 1184.5,306.9 1192.2,305.2 1199.8,303.4 1207.4,301.5 1215.0,299.6 1222.7,297.6 1230.3,295.5 1237.9,293.4 1245.5,291.3 1253.1,289.1 1260.7,286.8 1268.3,284.5 1275.9,282.1 1283.5,279.7 1291.1,277.2 1298.7,274.7 1306.3,272.1 1313.8,269.4 1321.4,266.7 1329.0,264.0 1336.6,261.2 1344.2,258.3 1351.8,255.4 1359.3,252.4 1366.9,249.4 1374.5,246.3 1382.1,243.2 1389.7,240.0 1397.3,236.7 1404.9,233.4 1412.4,230.1 1420.0,226.7 1427.6,223.2 1435.2,219.7 1442.9,216.2 1450.5,212.6 1458.1,208.9 1465.7,205.2 1473.3,201.4 1481.0,197.6 1488.6,193.7 1496.3,189.8 1503.9,185.8 1511.6,181.7 1519.3,177.6 1527.0,173.5 1534.7,169.3 1542.4,165.0 1550.1,160.7 1557.9,156.4 1565.6,152.0 1573.4,147.5 1581.2,143.0 1589.0,138.4 1596.9,133.8 1604.7,129.1 1612.6,124.3 1620.5,119.5 1628.4,114.7 1636.4,109.8 1644.3,104.8 1652.3,99.8 1660.4,94.7 1668.4,89.6 1676.5,84.4 1684.6,79.2 1692.8,73.9 1701.0,68.5 1709.2,63.1 1717.5,57.7 1725.8,52.1 1734.2,46.6 1742.6,40.9 1751.0,35.2 1759.5,29.5 1768.0,23.7 1776.6,17.8 1785.3,11.9 1794.0,6.0 1802.7,-0.1 1811.6,-6.2 1820.5,-12.3 1829.4,-18.5 1838.4,-24.8 1847.5,-31.1 1856.7,-37.4 1865.9,-43.9 1875.3,-50.3 1884.7,-56.9 1894.2,-63.5 1903.8,-70.1 1913.4,-76.8 1923.2,-83.5 1933.1,-90.3 1943.1,-97.2 1953.1,-104.1 1963.3,-111.0 1973.6,-118.0 1984.1,-125.0 1994.6,-132.1 2005.3,-139.3 2016.1,-146.4 2027.0,-153.6 2038.1,-160.9 2049.4,-168.1 2060.7,-175.4 2072.3,-182.8 2084.0,-190.1 2095.8,-197.5 2107.8,-204.9 2120.1,-212.3 2132.4,-219.7 2145.0,-227.1 2157.8,-234.6 2170.7,-242.0 2183.9,-249.4 2197.2,-256.7" stroke="#9a9aa8" stroke-opacity="0.45" stroke-width="1" fill="none"/>
<polyline points="185.3,-297.3 192.5,-288.4 199.6,-279.6 206.7,-270.9 213.7,-262.4 220.6,-254.0 227.5,-245.8 234.4,-237.7 241.2,-229.7 247.9,-221.9 254.7,-214.2 261.3,-206.6 268.0,-199.1 274.6,-191.7 281.2,-184.5 287.8,-177.3 294.3,-170.3 300.8,-163.4 307.3,-156.6 313.7,-149.9 320.1,-143.3 326.5,-136.8 332.9,-130.3 339.3,-124.0 345.6,-117.8 352.0,-111.7 358.3,-105.6 364.6,-99.7 370.9,-93.8 377.1,-88.1 383.4,-82.4 389.7,-76.8 395.9,-71.3 402.1,-65.8 408.3,-60.5 414.5,-55.2 420.7,-50.0 426.9,-44.9 433.1,-39.9 439.3,-34.9 445.5,-30.0 451.6,-25.2 457.8,-20.5 464.0,-15.8 470.1,-11.2 476.3,-6.7 482.4,-2.2 488.6,2.2 494.7,6.5 500.8,10.7 507.0,14.9 513.1,19.0 519.3,23.1 525.4,27.1 531.5,31.0 537.7,34.8 543.8,38.6 549.9,42.3 556.1,46.0 562.2,49.6 568.4,53.1 574.5,56.6 580.6,60.0 586.8,63.4 592.9,66.7 599.1,69.9 605.2,73.0 611.4,76.2 617.5,79.2 623.7,82.2 629.9,85.1 636.0,88.0 642.2,90.8 648.4,93.5 654.5,96.2 660.7,98.9 666.9,101.4 673.1,103.9 679.2,106.4 685.4,108.8 691.6,111.2 697.8,113.4 704.0,115.7 710.2,117.8 716.4,120.0 722.6,122.0 728.8,124.0 735.1,126.0 741.3,127.9 747.5,129.7 753.7,131.5 759.9,133.2 766.2,134.9 772.4,136.5 778.6,138.0 784.9,139.5 791.1,141.0 797.4,142.4 803.6,143.7 809.9,145.0 816.1,146.2 822.4,147.4 828.6,148.5 834.9,149.5 841.2,150.5 847.4,151.5 853.7,152.4 860.0,153.2 866.2,154.0 872.5,154.7 878.8,155.4 885.0,156.0 891.3,156.6 897.6,157.1 903.9,157.5 910.2,157.9 916.4,158.3 922.7,158.6 929.0,158.8 935.3,159.0 941.6,159.1 947.9,159.2 954.1,159.2 960.4,159.1 966.7,159.0 973.0,158.9 979.3,158.7 985.5,158.4 991.8,158.1 998.1,157.7 1004.4,157.3 1010.7,156.8 1016.9,156.3 1023.2,155.7 1029.5,155.0 1035.8,154.3 1042.0,153.6 1048.3,152.8 1054.6,151.9 1060.8,151.0 1067.1,150.0 1073.4,149.0 1079.6,147.9 1085.9,146.8 1092.1,145.6 1098.4,144.3 1104.6,143.0 1110.9,141.6 1117.1,140.2 1123.4,138.8 1129.6,137.2 1135.8,135.6 1142.1,134.0 1148.3,132.3 1154.5,130.6 1160.7,128.7 1167.0,126.9 1173.2,125.0 1179.4,123.0 1185.6,121.0 1191.8,118.9 1198.0,116.7 1204.2,114.5 1210.4,112.3 1216.6,109.9 1222.8,107.6 1229.0,105.1 1235.2,102.6 1241.3,100.1 1247.5,97.5 1253.7,94.8 1259.9,92.1 1266.0,89.3 1272.2,86.5 1278.3,83.6 1284.5,80.6 1290.7,77.6 1296.8,74.5 1303.0,71.4 1309.1,68.2 1315.3,65.0 1321.4,61.6 1327.6,58.3 1333.7,54.8 1339.8,51.3 1346.0,47.7 1352.1,44.1 1358.3,40.4 1364.4,36.7 1370.5,32.8 1376.7,29.0 1382.8,25.0 1388.9,21.0 1395.1,16.9 1401.2,12.8 1407.4,8.5 1413.5,4.3 1419.6,-0.1 1425.8,-4.5 1431.9,-9.0 1438.1,-13.6 1444.2,-18.2 1450.4,-22.9 1456.6,-27.7 1462.7,-32.5 1468.9,-37.5 1475.1,-42.5 1481.3,-47.6 1487.5,-52.7 1493.7,-57.9 1499.9,-63.3 1506.1,-68.7 1512.4,-74.1 1518.6,-79.7 1524.9,-85.3 1531.1,-91.1 1537.4,-96.9 1543.7,-102.8 1550.0,-108.8 1556.3,-114.9 1562.7,-121.0 1569.0,-127.3 1575.4,-133.7 1581.8,-140.1 1588.2,-146.7 1594.6,-153.3 1601.1,-160.1 1607.6,-167.0 1614.1,-173.9 1620.6,-181.0 1627.2,-188.2 1633.8,-195.5 1640.5,-203.0 1647.1,-210.5 1653.8,-218.2 1660.6,-225.9 1667.4,-233.8 1674.2,-241.9 1681.1,-250.1 1688.0,-258.4 1695.0,-266.8 1702.0,-275.4 1709.1,-284.1 1716.2,-293.0" stroke="#9a9aa8" stroke-opacity="0.45" stroke-width="1" fill="none"/>
<polyline points="591.2,-295.4 593.7,-290.0 596.3,-284.7 598.9,-279.5 601.6,-274.4 604.3,-269.3 607.0,-264.3 609.8,-259.4 612.6,-254.5 615.5,-249.7 618.4,-245.0 621.4,-240.4 624.3,-235.8 627.4,-231.3 630.4,-226.9 633.5,-222.5 636.6,-218.2 639.8,-213.9 642.9,-209.8 646.2,-205.6 649.4,-201.6 652.7,-197.6 656.0,-193.7 659.3,-189.8 662.7,-186.0 666.0,-182.3 669.4,-178.6 672.9,-175.0 676.3,-171.4 679.8,-167.9 683.3,-164.5 686.8,-161.1 690.4,-157.8 693.9,-154.5 697.5,-151.3 701.1,-148.2 704.8,-145.1 708.4,-142.0 712.1,-139.0 715.8,-136.1 719.5,-133.2 723.2,-130.4 726.9,-127.6 730.7,-124.9 734.5,-122.3 738.3,-119.7 742.1,-117.1 745.9,-114.6 749.7,-112.2 753.6,-109.8 757.5,-107.4 761.3,-105.1 765.2,-102.9 769.1,-100.7 773.1,-98.6 777.0,-96.5 780.9,-94.4 784.9,-92.4 788.9,-90.5 792.8,-88.6 796.8,-86.8 800.8,-85.0 804.8,-83.3 808.9,-81.6 812.9,-79.9 816.9,-78.4 821.0,-76.8 825.0,-75.3 829.1,-73.9 833.2,-72.5 837.3,-71.2 841.3,-69.9 845.4,-68.6 849.5,-67.4 853.7,-66.3 857.8,-65.2 861.9,-64.1 866.0,-63.1 870.2,-62.1 874.3,-61.2 878.4,-60.4 882.6,-59.6 886.7,-58.8 890.9,-58.1 895.1,-57.4 899.2,-56.8 903.4,-56.2 907.6,-55.7 911.7,-55.2 915.9,-54.8 920.1,-54.4 924.3,-54.0 928.5,-53.7 932.6,-53.5 936.8,-53.3 941.0,-53.1 945.2,-53.0 949.4,-53.0 953.6,-53.0 957.8,-53.0 962.0,-53.1 966.2,-53.2 970.3,-53.4 974.5,-53.6 978.7,-53.9 982.9,-54.2 987.1,-54.6 991.3,-55.0 995.4,-55.4 999.6,-55.9 1003.8,-56.5 1007.9,-57.1 1012.1,-57.7 1016.3,-58.4 1020.4,-59.2 1024.6,-60.0 1028.7,-60.8 1032.9,-61.7 1037.0,-62.6 1041.1,-63.6 1045.3,-64.7 1049.4,-65.7 1053.5,-66.9 1057.6,-68.0 1061.7,-69.3 1065.8,-70.5 1069.9,-71.8 1073.9,-73.2 1078.0,-74.6 1082.1,-76.1 1086.1,-77.6 1090.2,-79.2 1094.2,-80.8 1098.2,-82.5 1102.3,-84.2 1106.3,-85.9 1110.3,-87.7 1114.2,-89.6 1118.2,-91.5 1122.2,-93.5 1126.1,-95.5 1130.1,-97.5 1134.0,-99.7 1137.9,-101.8 1141.8,-104.0 1145.7,-106.3 1149.6,-108.6 1153.4,-111.0 1157.3,-113.4 1161.1,-115.9 1164.9,-118.4 1168.7,-121.0 1172.5,-123.6 1176.3,-126.3 1180.0,-129.1 1183.7,-131.9 1187.4,-134.7 1191.1,-137.6 1194.8,-140.6 1198.5,-143.6 1202.1,-146.7 1205.7,-149.8 1209.3,-153.0 1212.9,-156.2 1216.5,-159.5 1220.0,-162.9 1223.5,-166.3 1227.0,-169.7 1230.5,-173.3 1233.9,-176.9 1237.3,-180.5 1240.7,-184.2 1244.1,-188.0 1247.4,-191.8 1250.7,-195.7 1254.0,-199.7 1257.3,-203.7 1260.5,-207.8 1263.7,-211.9 1266.9,-216.1 1270.0,-220.4 1273.1,-224.7 1276.2,-229.2 1279.2,-233.6 1282.2,-238.2 1285.2,-242.8 1288.1,-247.5 1291.0,-252.2 1293.8,-257.0 1296.7,-261.9 1299.4,-266.9 1302.1,-271.9 1304.8,-277.0 1307.5,-282.2 1310.1,-287.5 1312.6,-292.8 1315.1,-298.2" stroke="#9a9aa8" stroke-opacity="0.45" stroke-width="1" fill="none"/>
<polyline points="-295.4,-106.2 -287.7,-122.1 -279.7,-138.2 -271.4,-154.6 -262.6,-171.4 -253.4,-188.4 -243.7,-205.7 -233.4,-223.3 -222.7,-241.2 -211.3,-259.4 -199.2,-278.0 -186.5,-296.8" stroke="#9a9aa8" stroke-opacity="0.45" stroke-width="1" fill="none"/>
<polyline points="-297.5,380.8 -293.9,370.8 -290.3,360.8 -286.6,350.7 -282.9,340.5 -279.2,330.3 -275.3,320.1 -271.5,309.8 -267.6,299.4 -263.6,289.0 -259.6,278.5 -255.5,267.9 -251.3,257.3 -247.0,246.5 -242.7,235.7 -238.3,224.8 -233.8,213.9 -229.3,202.8 -224.6,191.6 -219.8,180.3 -214.9,169.0 -209.9,157.5 -204.8,145.9 -199.6,134.2 -194.2,122.4 -188.7,110.5 -183.0,98.4 -177.2,86.2 -171.3,73.9 -165.1,61.4 -158.8,48.8 -152.2,36.1 -145.5,23.2 -138.5,10.2 -131.3,-3.0 -123.8,-16.4 -116.1,-29.9 -108.1,-43.6 -99.8,-57.4 -91.2,-71.4 -82.3,-85.5 -73.0,-99.9 -63.3,-114.4 -53.2,-129.0 -42.6,-143.8 -31.7,-158.8 -20.2,-173.9 -8.2,-189.1 4.4,-204.5 17.5,-220.0 31.3,-235.5 45.7,-251.2 60.8,-266.8 76.7,-282.5 93.3,-298.2" stroke="#9a9aa8" stroke-opacity="0.45" stroke-width="1" fill="none"/>
<polyline points="-298.0,791.2 -293.6,781.2 -289.2,771.2 -284.8,761.3 -280.6,751.4 -276.3,741.6 -272.1,731.8 -268.0,722.1 -263.9,712.4 -259.8,702.7 -255.8,693.0 -251.8,683.4 -247.8,673.8 -243.8,664.3 -239.9,654.8 -236.0,645.2 -232.1,635.8 -228.2,626.3 -224.4,616.8 -220.6,607.4 -216.7,598.0 -212.9,588.5 -209.1,579.1 -205.3,569.7 -201.5,560.3 -197.7,550.9 -193.9,541.5 -190.1,532.1 -186.3,522.7 -182.5,513.3 -178.7,503.9 -174.8,494.4 -171.0,485.0 -167.1,475.5 -163.2,466.0 -159.3,456.6 -155.4,447.0 -151.5,437.5 -147.5,427.9 -143.5,418.3 -139.5,408.7 -135.4,399.0 -131.4,389.3 -127.2,379.6 -123.1,369.8 -118.8,360.0 -114.6,350.2 -110.3,340.3 -105.9,330.3 -101.5,320.3 -97.0,310.3 -92.5,300.2 -87.9,290.0 -83.2,279.8 -78.5,269.5 -73.6,259.1 -68.7,248.7 -63.8,238.2 -58.7,227.6 -53.5,217.0 -48.2,206.3 -42.9,195.5 -37.4,184.6 -31.8,173.6 -26.0,162.6 -20.2,151.4 -14.2,140.2 -8.0,128.9 -1.7,117.4 4.7,105.9 11.4,94.3 18.2,82.5 25.1,70.7 32.3,58.7 39.7,46.7 47.3,34.5 55.2,22.2 63.3,9.8 71.6,-2.7 80.3,-15.3 89.2,-28.0 98.4,-40.8 107.9,-53.7 117.8,-66.8 128.0,-79.9 138.6,-93.1 149.6,-106.4 161.0,-119.7 172.9,-133.2 185.2,-146.6 198.0,-160.2 211.4,-173.7 225.2,-187.2 239.6,-200.7 254.7,-214.2 270.3,-227.5 286.5,-240.8 303.5,-253.9 321.1,-266.8 339.4,-279.4 358.4,-291.8" stroke="#9a9aa8" stroke-opacity="0.45" stroke-width="1" fill="none"/>
<polyline points="-293.7,1059.9 -285.8,1048.2 -278.1,1036.6 -270.6,1025.0 -263.3,1013.6 -256.2,1002.2 -249.3,990.9 -242.6,979.7 -236.0,968.6 -229.5,957.6 -223.2,946.7 -217.1,935.8 -211.0,925.0 -205.1,914.3 -199.4,903.7 -193.7,893.1 -188.1,882.7 -182.7,872.2 -177.3,861.9 -172.0,851.6 -166.8,841.4 -161.7,831.3 -156.7,821.2 -151.8,811.1 -146.9,801.1 -142.1,791.2 -137.3,781.3 -132.6,771.5 -128.0,761.7 -123.4,752.0 -118.9,742.3 -114.4,732.6 -110.0,723.0 -105.6,713.4 -101.2,703.8 -96.9,694.3 -92.6,684.8 -88.4,675.3 -84.1,665.9 -79.9,656.5 -75.7,647.1 -71.6,637.7 -67.4,628.3 -63.3,619.0 -59.2,609.7 -55.1,600.3 -51.0,591.0 -47.0,581.7 -42.9,572.4 -38.8,563.1 -34.8,553.9 -30.7,544.6 -26.6,535.3 -22.6,526.0 -18.5,516.7 -14.4,507.4 -10.3,498.0 -6.2,488.7 -2.1,479.4 2.0,470.0 6.2,460.6 10.4,451.2 14.6,441.8 18.8,432.4 23.1,422.9 27.3,413.4 31.7,403.9 36.0,394.4 40.4,384.8 44.8,375.1 49.3,365.5 53.8,355.8 58.4,346.0 63.1,336.3 67.7,326.4 72.5,316.6 77.3,306.6 82.2,296.6 87.1,286.6 92.1,276.5 97.2,266.4 102.4,256.2 107.7,245.9 113.0,235.5 118.5,225.1 124.0,214.7 129.7,204.1 135.5,193.5 141.4,182.8 147.4,172.0 153.5,161.2 159.8,150.2 166.2,139.2 172.8,128.1 179.6,116.9 186.5,105.7 193.5,94.3 200.8,82.9 208.3,71.3 215.9,59.7 223.8,48.0 231.9,36.2 240.3,24.2 248.9,12.3 257.8,0.2 266.9,-12.0 276.3,-24.2 286.1,-36.5 296.2,-48.9 306.6,-61.4 317.3,-73.9 328.5,-86.4 340.0,-99.0 352.0,-111.7 364.4,-124.3 377.2,-137.0 390.5,-149.6 404.3,-162.2 418.6,-174.8 433.4,-187.2 448.8,-199.6 464.8,-211.8 481.4,-223.8 498.5,-235.7 516.3,-247.2 534.7,-258.5 553.7,-269.4 573.4,-280.0 593.7,-290.0 614.6,-299.6" stroke="#9a9aa8" stroke-opacity="0.45" stroke-width="1" fill="none"/>
<polyline points="-262.3,1228.0 -250.1,1215.3 -238.3,1202.7 -226.9,1190.0 -215.9,1177.5 -205.3,1164.9 -195.0,1152.5 -185.1,1140.1 -175.5,1127.7 -166.1,1115.5 -157.1,1103.3 -148.3,1091.3 -139.8,1079.3 -131.6,1067.4 -123.6,1055.6 -115.8,1043.9 -108.2,1032.3 -100.8,1020.7 -93.6,1009.3 -86.6,997.9 -79.8,986.7 -73.1,975.5 -66.6,964.4 -60.3,953.4 -54.0,942.5 -48.0,931.6 -42.0,920.9 -36.2,910.2 -30.4,899.6 -24.8,889.1 -19.3,878.6 -13.9,868.2 -8.6,857.9 -3.4,847.6 1.7,837.4 6.8,827.3 11.8,817.2 16.7,807.2 21.5,797.2 26.3,787.3 31.0,777.4 35.6,767.6 40.2,757.8 44.8,748.1 49.3,738.4 53.7,728.7 58.1,719.1 62.5,709.5 66.8,700.0 71.1,690.5 75.4,681.0 79.6,671.5 83.8,662.1 88.0,652.6 92.1,643.3 96.3,633.9 100.4,624.5 104.5,615.2 108.6,605.8 112.7,596.5 116.7,587.2 120.8,577.9 124.8,568.6 128.9,559.3 132.9,550.0 137.0,540.7 141.0,531.4 145.1,522.1 149.1,512.8 153.2,503.5 157.3,494.1 161.4,484.8 165.5,475.4 169.6,466.1 173.8,456.7 178.0,447.3 182.2,437.8 186.4,428.4 190.6,418.9 194.9,409.4 199.2,399.8 203.6,390.3 208.0,380.7 212.4,371.0 216.9,361.3 221.4,351.6 226.0,341.8 230.7,332.0 235.4,322.2 240.1,312.3 244.9,302.3 249.8,292.3 254.8,282.2 259.8,272.1 264.9,261.9 270.1,251.7 275.4,241.4 280.8,231.0 286.3,220.5 291.9,210.0 297.5,199.4 303.3,188.8 309.3,178.0 315.3,167.2 321.5,156.3 327.8,145.3 334.3,134.3 340.9,123.1 347.7,111.9 354.7,100.5 361.8,89.1 369.2,77.6 376.7,66.0 384.4,54.3 392.4,42.5 400.6,30.7 409.0,18.7 417.7,6.7 426.7,-5.5 435.9,-17.7 445.5,-30.0 455.3,-42.4 465.5,-54.8 476.1,-67.4 487.0,-79.9 498.3,-92.5 510.0,-105.2 522.1,-117.9 534.6,-130.6 547.7,-143.3 561.2,-156.0 575.2,-168.6 589.7,-181.1 604.8,-193.6 620.4,-206.0 636.6,-218.2 653.4,-230.2 670.9,-242.0 688.9,-253.5 707.6,-264.7 726.9,-275.5 746.9,-285.9 767.5,-295.9" stroke="#9a9aa8" stroke-opacity="0.45" stroke-width="1" fill="none"/>
<polyline points="-164.4,1332.9 -149.0,1319.4 -134.3,1305.7 -120.1,1292.1 -106.5,1278.4 -93.4,1264.7 -80.8,1251.1 -68.7,1237.5 -57.1,1224.0 -45.9,1210.5 -35.1,1197.1 -24.7,1183.9 -14.6,1170.7 -4.9,1157.6 4.4,1144.6 13.4,1131.8 22.2,1119.0 30.6,1106.4 38.8,1093.8 46.8,1081.4 54.5,1069.1 61.9,1056.9 69.2,1044.8 76.2,1032.9 83.1,1021.0 89.8,1009.3 96.3,997.6 102.6,986.1 108.8,974.7 114.8,963.3 120.7,952.1 126.5,940.9 132.1,929.9 137.6,918.9 143.0,908.0 148.3,897.2 153.5,886.5 158.5,875.8 163.5,865.3 168.4,854.8 173.3,844.4 178.0,834.0 182.7,823.7 187.3,813.5 191.8,803.3 196.3,793.2 200.7,783.1 205.0,773.1 209.3,763.2 213.6,753.3 217.7,743.4 221.9,733.6 226.0,723.8 230.1,714.1 234.1,704.4 238.1,694.7 242.1,685.1 246.0,675.5 249.9,665.9 253.8,656.4 257.7,646.8 261.5,637.3 265.4,627.8 269.2,618.4 273.0,608.9 276.8,599.5 280.5,590.0 284.3,580.6 288.1,571.2 291.8,561.7 295.6,552.3 299.3,542.9 303.1,533.5 306.9,524.1 310.6,514.6 314.4,505.2 318.2,495.7 322.0,486.3 325.8,476.8 329.7,467.3 333.5,457.8 337.4,448.3 341.3,438.7 345.2,429.1 349.1,419.5 353.1,409.9 357.1,400.2 361.2,390.5 365.2,380.7 369.4,371.0 373.5,361.1 377.7,351.3 382.0,341.3 386.3,331.4 390.7,321.4 395.1,311.3 399.6,301.2 404.1,291.0 408.7,280.7 413.4,270.4 418.2,260.1 423.0,249.6 427.9,239.1 432.9,228.5 438.1,217.9 443.3,207.1 448.6,196.3 454.0,185.4 459.5,174.4 465.2,163.3 471.0,152.1 476.9,140.9 483.0,129.5 489.2,118.0 495.6,106.5 502.1,94.8 508.8,83.0 515.7,71.2 522.8,59.2 530.1,47.1 537.7,34.8 545.4,22.5 553.4,10.1 561.7,-2.5 570.2,-15.2 579.0,-27.9 588.1,-40.8 597.6,-53.8 607.3,-66.9 617.4,-80.2 627.9,-93.5 638.8,-106.9 650.2,-120.3 661.9,-133.9 674.1,-147.5 686.8,-161.1 700.0,-174.8 713.8,-188.5 728.1,-202.1 743.0,-215.7 758.6,-229.3 774.7,-242.7 791.6,-256.0 809.1,-269.2 827.4,-282.1 846.4,-294.7" stroke="#9a9aa8" stroke-opacity="0.45" stroke-width="1" fill="none"/>
<polyline points="33.0,1387.5 48.4,1371.5 63.1,1355.6 77.2,1339.7 90.5,1323.9 103.3,1308.2 115.5,1292.7 127.1,1277.3 138.2,1262.0 148.9,1247.0 159.1,1232.0 168.8,1217.3 178.2,1202.7 187.2,1188.3 195.9,1174.1 204.3,1160.1 212.3,1146.2 220.0,1132.5 227.5,1118.9 234.7,1105.6 241.7,1092.3 248.5,1079.3 255.0,1066.4 261.3,1053.6 267.5,1041.0 273.5,1028.5 279.3,1016.2 284.9,1004.0 290.4,992.0 295.7,980.0 300.9,968.2 306.0,956.5 311.0,944.9 315.8,933.4 320.6,922.1 325.2,910.8 329.7,899.6 334.2,888.6 338.6,877.6 342.8,866.7 347.0,855.9 351.2,845.2 355.2,834.5 359.2,823.9 363.1,813.4 367.0,803.0 370.8,792.6 374.6,782.3 378.3,772.1 382.0,761.9 385.6,751.7 389.2,741.6 392.7,731.6 396.2,721.6 399.7,711.7 403.1,701.7 406.5,691.9 409.9,682.0 413.3,672.2 416.6,662.4 419.9,652.7 423.2,642.9 426.5,633.2 429.8,623.6 433.0,613.9 436.3,604.2 439.5,594.6 442.7,584.9 445.9,575.3 449.1,565.7 452.4,556.1 455.6,546.5 458.8,536.8 462.0,527.2 465.2,517.6 468.4,508.0 471.7,498.3 474.9,488.6 478.2,479.0 481.5,469.3 484.7,459.6 488.1,449.8 491.4,440.0 494.7,430.3 498.1,420.4 501.5,410.6 504.9,400.7 508.4,390.7 511.9,380.8 515.4,370.8 518.9,360.7 522.5,350.6 526.2,340.4 529.9,330.2 533.6,319.9 537.4,309.6 541.2,299.2 545.1,288.7 549.1,278.2 553.1,267.6 557.2,256.9 561.3,246.1 565.6,235.3 569.9,224.4 574.3,213.3 578.8,202.2 583.4,191.0 588.1,179.7 592.8,168.3 597.7,156.7 602.8,145.1 607.9,133.4 613.2,121.5 618.6,109.5 624.1,97.4 629.9,85.1 635.7,72.7 641.8,60.2 648.0,47.5 654.4,34.7 661.1,21.7 667.9,8.6 675.0,-4.7 682.4,-18.2 690.0,-31.8 697.8,-45.6 706.0,-59.5 714.5,-73.7 723.3,-88.0 732.5,-102.4 742.1,-117.1 752.0,-131.9 762.5,-146.9 773.3,-162.1 784.7,-177.4 796.6,-192.8 809.0,-208.5 822.0,-224.2 835.7,-240.0 850.0,-255.9 865.1,-271.9" stroke="#b8b8b8" stroke-width="2.4" fill="none"/>
<polyline points="298.5,1397.6 310.6,1378.6 322.0,1359.9 332.8,1341.6 343.0,1323.5 352.6,1305.9 361.8,1288.5 370.6,1271.4 378.9,1254.7 386.8,1238.3 394.4,1222.1 401.6,1206.3 408.5,1190.7 415.2,1175.3 421.5,1160.3 427.7,1145.5 433.5,1130.9 439.2,1116.5 444.7,1102.4 449.9,1088.5 455.0,1074.8 459.9,1061.3 464.7,1047.9 469.3,1034.8 473.8,1021.8 478.2,1009.0 482.4,996.4 486.5,983.9 490.5,971.6 494.4,959.4 498.2,947.3 501.9,935.4 505.5,923.6 509.1,912.0 512.5,900.4 515.9,888.9 519.2,877.6 522.5,866.4 525.7,855.2 528.8,844.2 531.9,833.2 535.0,822.3 537.9,811.6 540.9,800.8 543.8,790.2 546.6,779.6 549.5,769.1 552.2,758.7 555.0,748.3 557.7,737.9 560.4,727.7 563.0,717.4 565.7,707.2 568.3,697.1 570.9,687.0 573.4,676.9 576.0,666.9 578.5,656.9 581.0,646.9 583.6,637.0 586.0,627.1 588.5,617.2 591.0,607.3 593.5,597.4 595.9,587.5 598.4,577.7 600.8,567.8 603.3,558.0 605.7,548.2 608.2,538.3 610.6,528.5 613.1,518.6 615.5,508.8 618.0,498.9 620.5,489.0 622.9,479.1 625.4,469.2 627.9,459.2 630.5,449.2 633.0,439.2 635.5,429.2 638.1,419.1 640.7,409.0 643.3,398.9 646.0,388.7 648.6,378.5 651.3,368.2 654.0,357.8 656.8,347.4 659.6,337.0 662.4,326.5 665.2,315.9 668.1,305.2 671.1,294.5 674.1,283.7 677.1,272.8 680.2,261.9 683.3,250.8 686.5,239.7 689.8,228.4 693.1,217.1 696.5,205.6 700.0,194.0 703.6,182.4 707.2,170.6 710.9,158.6 714.7,146.6 718.6,134.4 722.6,122.0 726.7,109.5 731.0,96.9 735.3,84.1 739.8,71.1 744.5,57.9 749.2,44.6 754.2,31.1 759.3,17.3 764.6,3.4 770.0,-10.8 775.7,-25.1 781.6,-39.7 787.8,-54.6 794.2,-69.7 800.8,-85.0 807.8,-100.6 815.0,-116.5 822.6,-132.7 830.6,-149.1 838.9,-165.9 847.7,-183.0 856.9,-200.4 866.7,-218.1 876.9,-236.1 887.7,-254.5" stroke="#9a9aa8" stroke-opacity="0.45" stroke-width="1" fill="none"/>
<polyline points="574.6,1381.6 581.7,1360.8 588.4,1340.6 594.7,1320.9 600.6,1301.7 606.2,1283.1 611.5,1264.8 616.6,1247.0 621.4,1229.6 625.9,1212.6 630.3,1196.0 634.5,1179.7 638.4,1163.8 642.3,1148.1 645.9,1132.8 649.5,1117.7 652.8,1103.0 656.1,1088.4 659.3,1074.2 662.3,1060.1 665.2,1046.3 668.1,1032.7 670.8,1019.3 673.5,1006.1 676.1,993.1 678.6,980.2 681.1,967.5 683.5,955.0 685.8,942.7 688.1,930.5 690.3,918.4 692.5,906.4 694.6,894.6 696.7,882.9 698.7,871.4 700.7,859.9 702.7,848.5 704.6,837.3 706.5,826.1 708.4,815.0 710.2,804.0 712.0,793.1 713.8,782.3 715.5,771.6 717.2,760.9 718.9,750.2 720.6,739.7 722.3,729.2 723.9,718.7 725.6,708.3 727.2,698.0 728.8,687.7 730.4,677.4 732.0,667.2 733.5,657.0 735.1,646.8 736.6,636.7 738.2,626.6 739.7,616.5 741.3,606.4 742.8,596.3 744.3,586.3 745.8,576.2 747.3,566.2 748.9,556.2 750.4,546.2 751.9,536.1 753.4,526.1 754.9,516.1 756.4,506.0 758.0,495.9 759.5,485.9 761.0,475.8 762.6,465.6 764.1,455.5 765.7,445.3 767.3,435.1 768.9,424.9 770.5,414.6 772.1,404.2 773.7,393.9 775.3,383.4 777.0,373.0 778.7,362.4 780.4,351.9 782.1,341.2 783.8,330.5 785.6,319.7 787.4,308.8 789.2,297.9 791.0,286.9 792.9,275.7 794.8,264.5 796.7,253.2 798.7,241.8 800.7,230.3 802.8,218.7 804.9,206.9 807.0,195.0 809.2,183.0 811.5,170.9 813.8,158.6 816.1,146.2 818.5,133.6 821.0,120.9 823.6,107.9 826.2,94.8 828.9,81.5 831.7,68.0 834.6,54.3 837.6,40.4 840.7,26.3 843.9,11.9 847.2,-2.8 850.7,-17.7 854.3,-32.9 858.0,-48.3 861.9,-64.1 866.0,-80.2 870.2,-96.7 874.7,-113.5 879.3,-130.6 884.2,-148.2 889.4,-166.2 894.9,-184.6 900.6,-203.6 906.7,-222.9 913.2,-242.9" stroke="#9a9aa8" stroke-opacity="0.45" stroke-width="1" fill="none"/>
<polyline points="834.6,1393.9 836.9,1371.7 839.1,1350.2 841.1,1329.4 843.1,1309.2 844.9,1289.5 846.6,1270.5 848.2,1251.9 849.8,1233.8 851.2,1216.2 852.6,1198.9 853.9,1182.1 855.2,1165.7 856.4,1149.6 857.6,1133.8 858.7,1118.4 859.8,1103.3 860.8,1088.4 861.8,1073.8 862.8,1059.5 863.7,1045.4 864.6,1031.6 865.5,1017.9 866.3,1004.5 867.1,991.3 867.9,978.2 868.7,965.4 869.5,952.7 870.2,940.2 870.9,927.8 871.6,915.6 872.3,903.5 873.0,891.5 873.6,879.7 874.3,868.0 874.9,856.4 875.5,844.9 876.1,833.6 876.7,822.3 877.3,811.1 877.9,800.0 878.5,789.0 879.0,778.1 879.6,767.2 880.1,756.4 880.6,745.7 881.2,735.1 881.7,724.5 882.2,713.9 882.7,703.4 883.2,693.0 883.8,682.6 884.3,672.2 884.8,661.9 885.3,651.6 885.7,641.4 886.2,631.1 886.7,620.9 887.2,610.7 887.7,600.6 888.2,590.4 888.7,580.3 889.1,570.1 889.6,560.0 890.1,549.9 890.6,539.8 891.1,529.6 891.5,519.5 892.0,509.3 892.5,499.2 893.0,489.0 893.5,478.8 894.0,468.6 894.5,458.3 894.9,448.0 895.4,437.7 895.9,427.4 896.5,417.0 897.0,406.6 897.5,396.1 898.0,385.6 898.5,375.0 899.0,364.3 899.6,353.6 900.1,342.9 900.7,332.0 901.2,321.1 901.8,310.2 902.4,299.1 903.0,287.9 903.5,276.7 904.1,265.3 904.8,253.9 905.4,242.3 906.0,230.7 906.7,218.9 907.3,207.0 908.0,194.9 908.7,182.7 909.4,170.4 910.2,157.9 910.9,145.3 911.7,132.5 912.5,119.5 913.3,106.3 914.1,92.9 915.0,79.4 915.9,65.6 916.8,51.6 917.7,37.3 918.7,22.8 919.8,8.0 920.8,-7.0 921.9,-22.4 923.1,-38.0 924.3,-54.0 925.5,-70.4 926.8,-87.1 928.2,-104.2 929.7,-121.7 931.2,-139.6 932.8,-158.1 934.5,-177.0 936.2,-196.5 938.1,-216.5 940.1,-237.1" stroke="#9a9aa8" stroke-opacity="0.45" stroke-width="1" fill="none"/>
<polyline points="1096.6,1390.8 1093.8,1368.8 1091.2,1347.4 1088.7,1326.7 1086.3,1306.6 1084.1,1287.1 1082.1,1268.1 1080.1,1249.7 1078.2,1231.7 1076.4,1214.1 1074.7,1197.0 1073.1,1180.2 1071.6,1163.8 1070.1,1147.8 1068.7,1132.1 1067.3,1116.7 1066.0,1101.6 1064.7,1086.8 1063.5,1072.3 1062.3,1058.0 1061.2,1044.0 1060.1,1030.2 1059.0,1016.6 1058.0,1003.2 1057.0,990.0 1056.0,977.0 1055.1,964.1 1054.2,951.5 1053.3,939.0 1052.4,926.6 1051.5,914.4 1050.7,902.4 1049.9,890.4 1049.1,878.6 1048.3,866.9 1047.5,855.4 1046.8,843.9 1046.0,832.6 1045.3,821.3 1044.6,810.1 1043.9,799.1 1043.2,788.1 1042.5,777.1 1041.8,766.3 1041.2,755.5 1040.5,744.8 1039.9,734.2 1039.2,723.6 1038.6,713.1 1038.0,702.6 1037.3,692.1 1036.7,681.8 1036.1,671.4 1035.5,661.1 1034.9,650.8 1034.3,640.6 1033.7,630.3 1033.1,620.1 1032.5,610.0 1031.9,599.8 1031.3,589.7 1030.7,579.5 1030.1,569.4 1029.6,559.3 1029.0,549.2 1028.4,539.0 1027.8,528.9 1027.2,518.8 1026.6,508.6 1026.0,498.5 1025.4,488.3 1024.8,478.1 1024.2,467.9 1023.6,457.6 1023.0,447.3 1022.4,437.0 1021.8,426.7 1021.2,416.3 1020.6,405.9 1019.9,395.4 1019.3,384.9 1018.6,374.3 1018.0,363.7 1017.3,353.0 1016.7,342.2 1016.0,331.4 1015.3,320.5 1014.6,309.5 1013.9,298.4 1013.2,287.3 1012.5,276.0 1011.7,264.7 1011.0,253.2 1010.2,241.7 1009.5,230.0 1008.7,218.2 1007.8,206.3 1007.0,194.3 1006.2,182.1 1005.3,169.8 1004.4,157.3 1003.5,144.7 1002.5,131.9 1001.6,118.9 1000.6,105.7 999.5,92.3 998.5,78.8 997.4,65.0 996.3,51.0 995.1,36.7 993.9,22.2 992.6,7.5 991.3,-7.6 990.0,-22.9 988.5,-38.6 987.1,-54.6 985.5,-70.9 983.9,-87.6 982.2,-104.7 980.5,-122.2 978.6,-140.1 976.7,-158.5 974.6,-177.4 972.4,-196.8 970.1,-216.8 967.6,-237.5" stroke="#9a9aa8" stroke-opacity="0.45" stroke-width="1" fill="none"/>
<polyline points="1361.8,1394.1 1353.9,1373.1 1346.6,1352.7 1339.6,1332.9 1333.1,1313.5 1326.9,1294.7 1321.0,1276.3 1315.5,1258.3 1310.2,1240.8 1305.2,1223.6 1300.4,1206.8 1295.8,1190.4 1291.4,1174.3 1287.2,1158.5 1283.2,1143.0 1279.4,1127.8 1275.7,1112.9 1272.1,1098.3 1268.6,1083.9 1265.3,1069.7 1262.1,1055.8 1259.0,1042.1 1256.0,1028.6 1253.1,1015.3 1250.3,1002.2 1247.5,989.3 1244.8,976.5 1242.2,963.9 1239.7,951.5 1237.2,939.2 1234.8,927.0 1232.5,915.0 1230.2,903.1 1227.9,891.4 1225.7,879.8 1223.6,868.2 1221.5,856.8 1219.4,845.5 1217.3,834.3 1215.3,823.2 1213.4,812.1 1211.4,801.2 1209.5,790.3 1207.6,779.5 1205.8,768.8 1203.9,758.2 1202.1,747.6 1200.3,737.1 1198.5,726.6 1196.8,716.2 1195.1,705.8 1193.3,695.5 1191.6,685.2 1189.9,675.0 1188.3,664.7 1186.6,654.6 1184.9,644.4 1183.3,634.3 1181.6,624.2 1180.0,614.2 1178.4,604.1 1176.7,594.1 1175.1,584.0 1173.5,574.0 1171.9,564.0 1170.3,554.0 1168.7,544.0 1167.0,534.0 1165.4,523.9 1163.8,513.9 1162.2,503.9 1160.5,493.8 1158.9,483.8 1157.3,473.7 1155.6,463.6 1154.0,453.4 1152.3,443.2 1150.6,433.0 1148.9,422.8 1147.2,412.5 1145.5,402.2 1143.8,391.8 1142.0,381.4 1140.2,371.0 1138.4,360.4 1136.6,349.9 1134.8,339.2 1132.9,328.5 1131.1,317.7 1129.1,306.9 1127.2,295.9 1125.2,284.9 1123.2,273.8 1121.2,262.6 1119.1,251.3 1117.0,239.9 1114.9,228.4 1112.7,216.7 1110.4,205.0 1108.1,193.1 1105.8,181.1 1103.4,169.0 1100.9,156.7 1098.4,144.3 1095.8,131.7 1093.1,119.0 1090.4,106.1 1087.6,93.0 1084.7,79.7 1081.7,66.2 1078.6,52.5 1075.4,38.6 1072.1,24.5 1068.6,10.1 1065.1,-4.5 1061.4,-19.4 1057.5,-34.5 1053.5,-50.0 1049.4,-65.7 1045.0,-81.8 1040.5,-98.2 1035.7,-115.0 1030.7,-132.1 1025.4,-149.6 1019.9,-167.5 1014.1,-185.9 1007.9,-204.7 1001.4,-224.0 994.5,-243.8" stroke="#9a9aa8" stroke-opacity="0.45" stroke-width="1" fill="none"/>
<polyline points="1625.8,1385.0 1613.7,1366.4 1602.3,1348.2 1591.6,1330.3 1581.3,1312.7 1571.6,1295.4 1562.4,1278.4 1553.6,1261.6 1545.3,1245.2 1537.3,1229.1 1529.6,1213.2 1522.3,1197.6 1515.3,1182.3 1508.6,1167.2 1502.2,1152.4 1495.9,1137.8 1490.0,1123.4 1484.2,1109.2 1478.7,1095.3 1473.3,1081.5 1468.1,1068.0 1463.1,1054.6 1458.3,1041.5 1453.6,1028.5 1449.0,1015.6 1444.5,1003.0 1440.2,990.5 1436.0,978.1 1431.9,965.9 1428.0,953.8 1424.1,941.8 1420.3,930.0 1416.6,918.3 1412.9,906.7 1409.4,895.3 1405.9,883.9 1402.5,872.7 1399.1,861.5 1395.9,850.4 1392.6,839.4 1389.5,828.6 1386.3,817.7 1383.3,807.0 1380.2,796.4 1377.3,785.8 1374.3,775.2 1371.4,764.8 1368.6,754.4 1365.7,744.1 1362.9,733.8 1360.2,723.5 1357.4,713.3 1354.7,703.2 1352.0,693.1 1349.3,683.0 1346.7,673.0 1344.0,663.0 1341.4,653.0 1338.8,643.1 1336.2,633.2 1333.7,623.3 1331.1,613.4 1328.6,603.6 1326.0,593.7 1323.5,583.9 1320.9,574.1 1318.4,564.2 1315.9,554.4 1313.3,544.6 1310.8,534.8 1308.3,525.0 1305.7,515.1 1303.2,505.3 1300.6,495.4 1298.0,485.6 1295.5,475.7 1292.9,465.8 1290.3,455.8 1287.7,445.9 1285.1,435.9 1282.4,425.8 1279.7,415.8 1277.0,405.7 1274.3,395.6 1271.6,385.4 1268.8,375.2 1266.0,364.9 1263.2,354.5 1260.4,344.2 1257.5,333.7 1254.5,323.2 1251.6,312.6 1248.5,302.0 1245.5,291.3 1242.4,280.5 1239.2,269.6 1236.0,258.6 1232.7,247.6 1229.4,236.4 1226.0,225.2 1222.5,213.9 1219.0,202.4 1215.4,190.8 1211.7,179.2 1207.9,167.4 1204.0,155.4 1200.1,143.4 1196.0,131.2 1191.8,118.9 1187.5,106.4 1183.1,93.7 1178.6,80.9 1173.9,68.0 1169.0,54.8 1164.1,41.5 1158.9,28.0 1153.6,14.3 1148.1,0.4 1142.4,-13.7 1136.4,-28.1 1130.3,-42.6 1123.9,-57.4 1117.2,-72.4 1110.3,-87.7 1103.0,-103.3 1095.4,-119.1 1087.5,-135.2 1079.2,-151.5 1070.5,-168.2 1061.4,-185.2 1051.8,-202.4 1041.6,-220.0 1031.0,-237.8 1019.7,-256.0" stroke="#9a9aa8" stroke-opacity="0.45" stroke-width="1" fill="none"/>
<polyline points="1901.7,1389.5 1885.8,1373.8 1870.7,1358.2 1856.3,1342.5 1842.5,1327.0 1829.4,1311.5 1816.8,1296.1 1804.8,1280.9 1793.3,1265.8 1782.4,1250.8 1771.8,1236.0 1761.7,1221.4 1752.0,1206.9 1742.7,1192.5 1733.8,1178.4 1725.2,1164.4 1716.9,1150.6 1708.9,1136.9 1701.2,1123.4 1693.7,1110.0 1686.5,1096.8 1679.5,1083.8 1672.8,1070.9 1666.2,1058.2 1659.9,1045.6 1653.7,1033.1 1647.8,1020.8 1642.0,1008.6 1636.3,996.5 1630.8,984.6 1625.4,972.8 1620.2,961.1 1615.1,949.5 1610.1,938.0 1605.2,926.7 1600.4,915.4 1595.7,904.2 1591.2,893.1 1586.7,882.2 1582.3,871.3 1578.0,860.5 1573.7,849.7 1569.5,839.1 1565.4,828.5 1561.4,818.0 1557.4,807.6 1553.5,797.2 1549.7,786.9 1545.8,776.7 1542.1,766.5 1538.4,756.3 1534.7,746.2 1531.1,736.2 1527.5,726.2 1523.9,716.3 1520.4,706.4 1516.9,696.5 1513.4,686.7 1510.0,676.9 1506.6,667.1 1503.2,657.3 1499.8,647.6 1496.4,637.9 1493.1,628.3 1489.8,618.6 1486.5,609.0 1483.2,599.3 1479.9,589.7 1476.6,580.1 1473.3,570.5 1470.0,560.9 1466.7,551.3 1463.5,541.7 1460.2,532.1 1456.9,522.5 1453.6,512.9 1450.3,503.3 1447.0,493.7 1443.7,484.0 1440.4,474.3 1437.0,464.7 1433.6,455.0 1430.3,445.2 1426.9,435.5 1423.4,425.7 1420.0,415.9 1416.5,406.0 1413.0,396.1 1409.5,386.2 1405.9,376.3 1402.3,366.2 1398.6,356.2 1394.9,346.1 1391.2,335.9 1387.4,325.7 1383.6,315.4 1379.7,305.1 1375.7,294.7 1371.7,284.2 1367.7,273.7 1363.5,263.1 1359.3,252.4 1355.1,241.6 1350.7,230.8 1346.3,219.9 1341.7,208.8 1337.1,197.7 1332.4,186.5 1327.6,175.2 1322.6,163.8 1317.6,152.3 1312.4,140.6 1307.1,128.9 1301.7,117.0 1296.1,105.0 1290.4,92.9 1284.5,80.6 1278.4,68.3 1272.2,55.7 1265.8,43.1 1259.1,30.3 1252.3,17.3 1245.2,4.2 1237.9,-9.1 1230.3,-22.5 1222.5,-36.1 1214.4,-49.8 1205.9,-63.7 1197.2,-77.8 1188.1,-92.0 1178.6,-106.4 1168.7,-121.0 1158.4,-135.7 1147.7,-150.6 1136.5,-165.6 1124.8,-180.8 1112.5,-196.1 1099.7,-211.5 1086.3,-227.0 1072.2,-242.6 1057.5,-258.3 1042.0,-274.0" stroke="#9a9aa8" stroke-opacity="0.45" stroke-width="1" fill="none"/>
<polyline points="2079.7,1321.2 2064.6,1307.7 2050.2,1294.2 2036.4,1280.7 2023.0,1267.2 2010.2,1253.6 1997.9,1240.2 1986.0,1226.7 1974.6,1213.4 1963.6,1200.1 1953.0,1186.9 1942.8,1173.8 1932.9,1160.7 1923.4,1147.8 1914.2,1135.0 1905.3,1122.3 1896.6,1109.7 1888.3,1097.2 1880.2,1084.8 1872.3,1072.5 1864.7,1060.3 1857.3,1048.3 1850.1,1036.3 1843.2,1024.5 1836.4,1012.7 1829.7,1001.1 1823.3,989.6 1817.0,978.1 1810.8,966.8 1804.8,955.6 1799.0,944.4 1793.2,933.4 1787.6,922.4 1782.1,911.5 1776.8,900.7 1771.5,890.0 1766.3,879.4 1761.2,868.8 1756.3,858.3 1751.4,847.9 1746.5,837.5 1741.8,827.2 1737.1,817.0 1732.5,806.8 1728.0,796.7 1723.5,786.7 1719.1,776.7 1714.7,766.7 1710.4,756.8 1706.2,747.0 1701.9,737.2 1697.8,727.4 1693.6,717.7 1689.6,708.0 1685.5,698.3 1681.5,688.7 1677.5,679.1 1673.5,669.5 1669.6,660.0 1665.7,650.4 1661.8,641.0 1657.9,631.5 1654.0,622.0 1650.2,612.6 1646.3,603.1 1642.5,593.7 1638.7,584.3 1634.9,574.9 1631.1,565.5 1627.3,556.1 1623.5,546.7 1619.7,537.3 1615.9,527.9 1612.1,518.5 1608.3,509.0 1604.4,499.6 1600.6,490.2 1596.8,480.7 1592.9,471.2 1589.0,461.8 1585.1,452.2 1581.2,442.7 1577.2,433.2 1573.2,423.6 1569.2,414.0 1565.2,404.3 1561.1,394.6 1557.0,384.9 1552.9,375.2 1548.7,365.4 1544.4,355.6 1540.2,345.7 1535.8,335.8 1531.4,325.8 1527.0,315.8 1522.5,305.7 1517.9,295.6 1513.3,285.4 1508.6,275.1 1503.8,264.8 1499.0,254.4 1494.0,244.0 1489.0,233.4 1483.9,222.8 1478.7,212.2 1473.3,201.4 1467.9,190.6 1462.4,179.7 1456.7,168.6 1450.9,157.5 1445.0,146.4 1438.9,135.1 1432.7,123.7 1426.3,112.2 1419.8,100.6 1413.1,89.0 1406.2,77.2 1399.2,65.3 1391.9,53.3 1384.4,41.2 1376.7,29.0 1368.7,16.6 1360.5,4.2 1352.0,-8.4 1343.3,-21.0 1334.2,-33.8 1324.9,-46.6 1315.2,-59.6 1305.2,-72.7 1294.8,-85.8 1284.0,-99.1 1272.8,-112.4 1261.2,-125.8 1249.1,-139.3 1236.6,-152.8 1223.5,-166.3 1210.0,-179.8 1195.8,-193.3 1181.2,-206.8 1165.9,-220.2 1150.0,-233.5 1133.4,-246.7 1116.2,-259.7 1098.2,-272.5 1079.6,-285.1 1060.3,-297.3" stroke="#9a9aa8" stroke-opacity="0.45" stroke-width="1" fill="none"/>
<polyline points="2177.0,1218.7 2165.0,1206.0 2153.5,1193.4 2142.3,1180.9 2131.6,1168.4 2121.2,1155.9 2111.1,1143.5 2101.3,1131.2 2091.9,1119.0 2082.8,1106.8 2073.9,1094.7 2065.3,1082.8 2056.9,1070.8 2048.8,1059.0 2040.9,1047.3 2033.3,1035.7 2025.8,1024.1 2018.5,1012.7 2011.5,1001.3 2004.6,990.1 1997.8,978.9 1991.2,967.8 1984.8,956.8 1978.5,945.8 1972.4,935.0 1966.4,924.2 1960.5,913.5 1954.7,902.9 1949.0,892.3 1943.5,881.9 1938.0,871.5 1932.7,861.1 1927.4,850.8 1922.2,840.6 1917.1,830.5 1912.1,820.4 1907.2,810.4 1902.3,800.4 1897.5,790.4 1892.7,780.6 1888.1,770.7 1883.4,761.0 1878.8,751.2 1874.3,741.5 1869.8,731.9 1865.4,722.2 1861.0,712.6 1856.7,703.1 1852.3,693.6 1848.1,684.1 1843.8,674.6 1839.6,665.2 1835.4,655.8 1831.2,646.4 1827.0,637.0 1822.9,627.6 1818.8,618.3 1814.7,609.0 1810.6,599.6 1806.5,590.3 1802.4,581.0 1798.4,571.7 1794.3,562.4 1790.2,553.1 1786.2,543.9 1782.1,534.6 1778.0,525.3 1774.0,516.0 1769.9,506.7 1765.8,497.3 1761.7,488.0 1757.6,478.7 1753.4,469.3 1749.3,459.9 1745.1,450.5 1740.9,441.1 1736.6,431.7 1732.4,422.2 1728.1,412.7 1723.8,403.2 1719.4,393.6 1715.0,384.0 1710.6,374.4 1706.1,364.7 1701.6,355.0 1697.0,345.3 1692.4,335.5 1687.7,325.7 1682.9,315.8 1678.1,305.9 1673.2,295.9 1668.3,285.8 1663.3,275.7 1658.2,265.6 1653.0,255.4 1647.7,245.1 1642.3,234.8 1636.9,224.3 1631.3,213.9 1625.6,203.3 1619.9,192.7 1614.0,182.0 1607.9,171.2 1601.8,160.3 1595.5,149.4 1589.0,138.4 1582.4,127.3 1575.7,116.1 1568.8,104.8 1561.7,93.4 1554.4,82.0 1546.9,70.4 1539.2,58.8 1531.3,47.1 1523.2,35.2 1514.8,23.3 1506.2,11.3 1497.3,-0.7 1488.1,-12.9 1478.7,-25.1 1468.9,-37.5 1458.8,-49.9 1448.4,-62.3 1437.6,-74.8 1426.4,-87.4 1414.8,-100.0 1402.9,-112.6 1390.5,-125.3 1377.6,-138.0 1364.2,-150.6 1350.4,-163.2 1336.1,-175.7 1321.2,-188.2 1305.7,-200.5 1289.7,-212.7 1273.1,-224.7 1255.9,-236.6 1238.1,-248.1 1219.6,-259.4 1200.6,-270.2 1180.8,-280.7 1160.5,-290.8" stroke="#9a9aa8" stroke-opacity="0.45" stroke-width="1" fill="none"/>
<polyline points="2194.2,1029.4 2186.8,1017.9 2179.7,1006.5 2172.7,995.1 2165.9,983.9 2159.3,972.7 2152.8,961.7 2146.5,950.7 2140.3,939.8 2134.3,929.0 2128.3,918.2 2122.5,907.6 2116.9,897.0 2111.3,886.5 2105.8,876.0 2100.4,865.6 2095.1,855.3 2089.9,845.1 2084.8,834.9 2079.8,824.8 2074.8,814.7 2069.9,804.7 2065.1,794.7 2060.4,784.8 2055.7,775.0 2051.0,765.2 2046.4,755.4 2041.9,745.7 2037.4,736.0 2033.0,726.3 2028.6,716.7 2024.2,707.2 2019.9,697.6 2015.6,688.1 2011.4,678.6 2007.2,669.2 2003.0,659.7 1998.8,650.3 1994.6,640.9 1990.5,631.6 1986.4,622.2 1982.3,612.9 1978.2,603.5 1974.1,594.2 1970.1,584.9 1966.0,575.6 1962.0,566.3 1957.9,557.0 1953.9,547.7 1949.8,538.4 1945.8,529.1 1941.7,519.8 1937.7,510.5 1933.6,501.2 1929.5,491.8 1925.4,482.5 1921.3,473.1 1917.1,463.7 1913.0,454.4 1908.8,444.9 1904.6,435.5 1900.4,426.0 1896.1,416.5 1891.8,407.0 1887.5,397.5 1883.1,387.9 1878.7,378.3 1874.3,368.6 1869.8,358.9 1865.2,349.2 1860.6,339.4 1856.0,329.6 1851.3,319.7 1846.5,309.8 1841.7,299.8 1836.8,289.8 1831.8,279.7 1826.7,269.6 1821.6,259.4 1816.4,249.1 1811.1,238.8 1805.7,228.4 1800.2,217.9 1794.6,207.4 1788.8,196.8 1783.0,186.1 1777.0,175.4 1771.0,164.5 1764.7,153.6 1758.4,142.6 1751.9,131.5 1745.2,120.3 1738.4,109.1 1731.4,97.7 1724.2,86.3 1716.8,74.7 1709.2,63.1 1701.4,51.4 1693.4,39.6 1685.2,27.7 1676.7,15.7 1667.9,3.7 1658.9,-8.5 1649.5,-20.7 1639.9,-33.1 1630.0,-45.5 1619.7,-57.9 1609.1,-70.5 1598.1,-83.0 1586.7,-95.7 1574.9,-108.3 1562.7,-121.0 1550.0,-133.7 1536.9,-146.4 1523.2,-159.1 1509.1,-171.7 1494.4,-184.2 1479.2,-196.7 1463.4,-209.0 1447.1,-221.2 1430.1,-233.1 1412.5,-244.9 1394.3,-256.3 1375.5,-267.4 1356.0,-278.1 1335.9,-288.4 1315.1,-298.2" stroke="#9a9aa8" stroke-opacity="0.45" stroke-width="1" fill="none"/>
<polyline points="2198.5,745.9 2194.4,736.0 2190.2,726.3 2186.2,716.5 2182.1,706.8 2178.1,697.1 2174.1,687.5 2170.2,677.9 2166.3,668.3 2162.4,658.7 2158.5,649.2 2154.7,639.7 2150.8,630.2 2147.0,620.7 2143.2,611.3 2139.4,601.8 2135.6,592.4 2131.9,582.9 2128.1,573.5 2124.3,564.1 2120.6,554.7 2116.8,545.3 2113.1,535.8 2109.3,526.4 2105.5,517.0 2101.8,507.5 2098.0,498.1 2094.2,488.6 2090.4,479.2 2086.5,469.7 2082.7,460.2 2078.8,450.6 2074.9,441.1 2071.0,431.5 2067.1,421.9 2063.1,412.3 2059.1,402.6 2055.1,392.9 2051.0,383.2 2046.9,373.4 2042.7,363.6 2038.6,353.7 2034.3,343.8 2030.0,333.9 2025.7,323.9 2021.3,313.8 2016.8,303.7 2012.3,293.5 2007.7,283.3 2003.0,273.0 1998.3,262.6 1993.4,252.2 1988.5,241.7 1983.5,231.2 1978.5,220.5 1973.3,209.8 1968.0,199.0 1962.6,188.1 1957.1,177.1 1951.5,166.1 1945.7,154.9 1939.8,143.7 1933.8,132.3 1927.6,120.9 1921.3,109.4 1914.8,97.7 1908.1,86.0 1901.2,74.1 1894.2,62.2 1886.9,50.1 1879.5,37.9 1871.8,25.6 1863.8,13.2 1855.6,0.6 1847.2,-12.0 1838.4,-24.8 1829.4,-37.6 1820.1,-50.6 1810.4,-63.7 1800.3,-76.9 1789.9,-90.1 1779.1,-103.5 1767.9,-117.0 1756.3,-130.5 1744.2,-144.1 1731.6,-157.7 1718.5,-171.4 1704.9,-185.1 1690.7,-198.7 1676.0,-212.4 1660.6,-225.9 1644.6,-239.4 1627.9,-252.8 1610.5,-265.9 1592.5,-278.9 1573.7,-291.6" stroke="#9a9aa8" stroke-opacity="0.45" stroke-width="1" fill="none"/>
<polyline points="2199.6,324.7 2195.8,314.4 2192.0,304.0 2188.1,293.6 2184.2,283.1 2180.2,272.5 2176.2,261.8 2172.0,251.1 2167.8,240.3 2163.6,229.4 2159.2,218.4 2154.7,207.4 2150.2,196.2 2145.6,184.9 2140.8,173.6 2136.0,162.1 2131.0,150.5 2125.9,138.8 2120.7,127.0 2115.4,115.0 2109.9,103.0 2104.3,90.8 2098.5,78.5 2092.5,66.0 2086.3,53.4 2080.0,40.6 2073.5,27.7 2066.7,14.7 2059.7,1.4 2052.5,-11.9 2045.0,-25.5 2037.3,-39.2 2029.3,-53.1 2020.9,-67.1 2012.2,-81.3 2003.2,-95.7 1993.8,-110.3 1984.1,-125.0 1973.9,-140.0 1963.2,-155.0 1952.1,-170.3 1940.5,-185.7 1928.3,-201.2 1915.5,-216.9 1902.2,-232.7 1888.1,-248.6 1873.4,-264.5 1858.0,-280.5 1841.8,-296.5" stroke="#9a9aa8" stroke-opacity="0.45" stroke-width="1" fill="none"/>
<polyline points="2195.6,-164.4 2186.8,-181.5 2177.6,-198.9 2168.0,-216.5 2157.8,-234.6 2147.0,-252.9 2135.6,-271.6 2123.5,-290.6" stroke="#9a9aa8" stroke-opacity="0.45" stroke-width="1" fill="none"/>
<polyline points="23.9,546.4 33.1,550.5 42.4,554.6 51.7,558.7 61.0,562.7 70.2,566.8 79.5,570.9 88.8,575.0 98.1,579.1 107.4,583.1 116.7,587.2 126.0,591.3 135.4,595.3 144.7,599.4 154.0,603.4 163.4,607.4 172.7,611.4 182.1,615.4 191.5,619.4 200.9,623.4 210.3,627.3 219.8,631.3 229.2,635.2 238.7,639.1 248.2,643.0 257.7,646.8 267.2,650.7 276.8,654.5 286.3,658.3 295.9,662.1 305.5,665.8 315.2,669.6 324.9,673.3 334.5,676.9 344.3,680.6 354.0,684.2 363.8,687.8 373.6,691.3 383.4,694.8 393.2,698.3 403.1,701.7 413.0,705.1 423.0,708.5 432.9,711.8 442.9,715.1 453.0,718.4 463.0,721.6 473.1,724.7 483.2,727.9 493.4,730.9 503.6,733.9 513.8,736.9 524.0,739.8 534.3,742.7 544.6,745.5 555.0,748.3 565.4,751.0 575.8,753.6 586.2,756.2 596.7,758.7 607.2,761.2 617.7,763.6 628.3,766.0 638.9,768.2 649.5,770.5 660.1,772.6 670.8,774.7 681.5,776.7 692.2,778.6 703.0,780.5 713.8,782.3 724.6,784.0 735.4,785.7 746.2,787.3 757.1,788.8 768.0,790.2 778.9,791.5 789.9,792.8 800.8,794.0 811.8,795.1 822.8,796.1 833.8,797.1 844.8,797.9 855.8,798.7 866.8,799.4 877.9,800.0 888.9,800.5 900.0,801.0 911.1,801.4 922.1,801.6 933.2,801.8 944.3,801.9 955.4,801.9 966.5,801.9 977.5,801.7 988.6,801.5 999.7,801.2 1010.8,800.8 1021.8,800.3 1032.9,799.7 1043.9,799.1 1054.9,798.3 1066.0,797.5 1077.0,796.6 1087.9,795.6 1098.9,794.5 1109.9,793.4 1120.8,792.1 1131.8,790.8 1142.7,789.5 1153.5,788.0 1164.4,786.5 1175.2,784.8 1186.1,783.1 1196.8,781.4 1207.6,779.5 1218.4,777.6 1229.1,775.7 1239.8,773.6 1250.4,771.5 1261.1,769.3 1271.7,767.1 1282.2,764.7 1292.8,762.4 1303.3,759.9 1313.8,757.4 1324.2,754.9 1334.6,752.3 1345.0,749.6 1355.4,746.8 1365.7,744.1 1376.0,741.2 1386.3,738.3 1396.5,735.4 1406.7,732.4 1416.9,729.3 1427.0,726.2 1437.1,723.1 1447.2,719.9 1457.3,716.7 1467.3,713.4 1477.2,710.1 1487.2,706.8 1497.1,703.4 1507.0,700.0 1516.9,696.5 1526.7,693.0 1536.5,689.5 1546.3,685.9 1556.1,682.3 1565.8,678.7 1575.5,675.0 1585.2,671.3 1594.8,667.6 1604.5,663.9 1614.1,660.1 1623.6,656.3 1633.2,652.5 1642.7,648.7 1652.3,644.8 1661.8,641.0 1671.2,637.1 1680.7,633.1 1690.1,629.2 1699.6,625.3 1709.0,621.3 1718.4,617.3 1727.8,613.3 1737.1,609.3 1746.5,605.3 1755.8,601.3 1765.2,597.3 1774.5,593.2 1783.8,589.2 1793.1,585.1 1802.4,581.0 1811.7,576.9 1821.0,572.9 1830.3,568.8 1839.6,564.7 1848.9,560.6 1858.1,556.5 1867.4,552.4 1876.7,548.3" stroke="#53555d" stroke-width="2.3" fill="none"/>
<circle cx="631" cy="262" r="1.8" fill="#c8a0c8" opacity="0.50"/><circle cx="1539" cy="215" r="1.6" fill="#c8a0c8" opacity="0.60"/><circle cx="108" cy="498" r="1.1" fill="#d0d0e8" opacity="0.50"/><circle cx="1046" cy="185" r="1.6" fill="#a0a0e0" opacity="0.60"/><circle cx="1191" cy="623" r="1.1" fill="#f0a0b0" opacity="0.50"/><circle cx="1822" cy="175" r="2.0" fill="#e0b0c0" opacity="0.75"/><circle cx="805" cy="587" r="1.6" fill="#e8c0b0" opacity="0.60"/><circle cx="228" cy="613" r="1.3" fill="#b0c8f0" opacity="0.50"/><circle cx="1040" cy="188" r="1.1" fill="#d0d0e8" opacity="0.90"/><circle cx="1282" cy="493" r="1.4" fill="#e0e0e0" opacity="0.90"/><circle cx="700" cy="343" r="1.3" fill="#d0d0e8" opacity="0.50"/><circle cx="1088" cy="575" r="1.4" fill="#e0e0e0" opacity="0.75"/><circle cx="1151" cy="197" r="1.6" fill="#f0a0b0" opacity="0.60"/><circle cx="1422" cy="263" r="1.5" fill="#f0a0b0" opacity="0.50"/><circle cx="1796" cy="201" r="1.6" fill="#b0c8f0" opacity="0.75"/><circle cx="1309" cy="632" r="1.6" fill="#e0e0e0" opacity="0.50"/><circle cx="1573" cy="925" r="1.5" fill="#a0a0e0" opacity="0.50"/><circle cx="1374" cy="395" r="1.6" fill="#e0e0e0" opacity="0.75"/><circle cx="1348" cy="877" r="1.4" fill="#c8a0c8" opacity="0.90"/><circle cx="689" cy="646" r="1.5" fill="#c8a0c8" opacity="0.60"/><circle cx="1442" cy="244" r="1.3" fill="#f0a0b0" opacity="0.90"/><circle cx="1713" cy="551" r="1.3" fill="#e0e0e0" opacity="0.90"/><circle cx="1043" cy="874" r="2.0" fill="#f0a0b0" opacity="0.75"/><circle cx="1329" cy="960" r="1.8" fill="#f0a0b0" opacity="0.60"/><circle cx="315" cy="283" r="1.3" fill="#d0d0e8" opacity="0.50"/><circle cx="925" cy="628" r="1.4" fill="#e8c0b0" opacity="0.50"/><circle cx="306" cy="582" r="1.6" fill="#b0c8f0" opacity="0.60"/><circle cx="1300" cy="566" r="1.6" fill="#c8a0c8" opacity="0.90"/><circle cx="1682" cy="787" r="2.0" fill="#c0b0d8" opacity="0.90"/><circle cx="766" cy="465" r="1.5" fill="#f0a0b0" opacity="0.50"/><circle cx="388" cy="958" r="1.5" fill="#e0b0c0" opacity="0.50"/><circle cx="661" cy="180" r="1.1" fill="#e0b0c0" opacity="0.50"/><circle cx="1772" cy="648" r="1.1" fill="#d0d0e8" opacity="0.90"/><circle cx="311" cy="347" r="1.4" fill="#b0c8f0" opacity="0.90"/><circle cx="264" cy="845" r="1.5" fill="#e0e0e0" opacity="0.90"/><circle cx="609" cy="256" r="1.8" fill="#b0c8f0" opacity="0.75"/><circle cx="913" cy="714" r="1.6" fill="#c8a0c8" opacity="0.60"/><circle cx="1776" cy="577" r="1.3" fill="#c0b0d8" opacity="0.50"/><circle cx="1424" cy="385" r="1.8" fill="#a0a0e0" opacity="0.75"/><circle cx="986" cy="894" r="1.4" fill="#d0d0e8" opacity="0.75"/><circle cx="1202" cy="648" r="2.0" fill="#d0d0e8" opacity="0.60"/><circle cx="1533" cy="754" r="1.3" fill="#d0d0e8" opacity="0.90"/><circle cx="689" cy="160" r="1.1" fill="#e8c0b0" opacity="0.90"/><circle cx="513" cy="714" r="1.4" fill="#e0e0e0" opacity="0.75"/><circle cx="1783" cy="440" r="1.3" fill="#a0a0e0" opacity="0.60"/><circle cx="898" cy="418" r="1.5" fill="#c8a0c8" opacity="0.90"/><circle cx="1699" cy="423" r="1.8" fill="#a0a0e0" opacity="0.50"/><circle cx="1700" cy="789" r="2.0" fill="#d0d0e8" opacity="0.90"/><circle cx="1662" cy="498" r="1.8" fill="#b0c8f0" opacity="0.50"/><circle cx="1502" cy="947" r="1.5" fill="#e0e0e0" opacity="0.90"/><circle cx="1397" cy="207" r="1.3" fill="#e0b0c0" opacity="0.60"/><circle cx="90" cy="629" r="1.5" fill="#e0b0c0" opacity="0.90"/><circle cx="1240" cy="429" r="1.6" fill="#c0b0d8" opacity="0.60"/><circle cx="79" cy="803" r="1.8" fill="#a0a0e0" opacity="0.60"/><circle cx="832" cy="864" r="2.0" fill="#d0d0e8" opacity="0.50"/><circle cx="500" cy="381" r="1.3" fill="#b0c8f0" opacity="0.75"/><circle cx="1033" cy="833" r="1.1" fill="#b0c8f0" opacity="0.90"/><circle cx="1249" cy="817" r="1.6" fill="#f0a0b0" opacity="0.60"/><circle cx="1011" cy="573" r="1.1" fill="#e0e0e0" opacity="0.60"/><circle cx="1151" cy="784" r="1.3" fill="#e0b0c0" opacity="0.60"/><circle cx="904" cy="742" r="1.6" fill="#c8a0c8" opacity="0.75"/><circle cx="1285" cy="579" r="1.5" fill="#a0a0e0" opacity="0.50"/><circle cx="494" cy="367" r="2.0" fill="#a0a0e0" opacity="0.90"/><circle cx="1065" cy="771" r="1.1" fill="#e0e0e0" opacity="0.75"/><circle cx="1158" cy="558" r="1.6" fill="#d0d0e8" opacity="0.75"/><circle cx="866" cy="581" r="1.5" fill="#c0b0d8" opacity="0.60"/><circle cx="1316" cy="868" r="1.4" fill="#c0b0d8" opacity="0.60"/><circle cx="1573" cy="251" r="1.1" fill="#f0a0b0" opacity="0.90"/><circle cx="617" cy="696" r="1.5" fill="#a0a0e0" opacity="0.60"/><circle cx="1262" cy="791" r="2.0" fill="#e0b0c0" opacity="0.75"/><circle cx="301" cy="873" r="1.5" fill="#d0d0e8" opacity="0.50"/><circle cx="767" cy="543" r="1.8" fill="#d0d0e8" opacity="0.60"/><circle cx="1329" cy="966" r="1.5" fill="#b0c8f0" opacity="0.90"/><circle cx="397" cy="402" r="1.8" fill="#b0c8f0" opacity="0.50"/><circle cx="657" cy="519" r="1.8" fill="#c8a0c8" opacity="0.90"/><circle cx="645" cy="657" r="1.6" fill="#a0a0e0" opacity="0.50"/><circle cx="1838" cy="794" r="1.1" fill="#a0a0e0" opacity="0.75"/><circle cx="536" cy="892" r="1.3" fill="#e8c0b0" opacity="0.60"/><circle cx="1536" cy="845" r="1.8" fill="#e8c0b0" opacity="0.90"/><circle cx="313" cy="904" r="1.6" fill="#e0e0e0" opacity="0.75"/><circle cx="203" cy="184" r="1.8" fill="#e0b0c0" opacity="0.90"/><circle cx="1674" cy="361" r="1.1" fill="#a0a0e0" opacity="0.75"/><circle cx="193" cy="851" r="1.1" fill="#e8c0b0" opacity="0.50"/><circle cx="868" cy="419" r="1.6" fill="#f0a0b0" opacity="0.75"/><circle cx="1175" cy="172" r="1.8" fill="#d0d0e8" opacity="0.50"/><circle cx="1809" cy="355" r="1.3" fill="#d0d0e8" opacity="0.75"/><circle cx="1187" cy="579" r="1.3" fill="#e8c0b0" opacity="0.90"/><circle cx="953" cy="285" r="1.4" fill="#c8a0c8" opacity="0.75"/><circle cx="107" cy="151" r="1.6" fill="#c0b0d8" opacity="0.60"/><circle cx="978" cy="341" r="1.5" fill="#a0a0e0" opacity="0.90"/><circle cx="1238" cy="592" r="1.5" fill="#c0b0d8" opacity="0.75"/><circle cx="1295" cy="956" r="1.4" fill="#d0d0e8" opacity="0.60"/><circle cx="779" cy="426" r="1.1" fill="#e0b0c0" opacity="0.50"/><circle cx="169" cy="755" r="1.4" fill="#f0a0b0" opacity="0.60"/><circle cx="141" cy="691" r="1.5" fill="#c0b0d8" opacity="0.75"/><circle cx="1133" cy="714" r="1.1" fill="#e0e0e0" opacity="0.60"/><circle cx="327" cy="508" r="1.4" fill="#b0c8f0" opacity="0.75"/><circle cx="1815" cy="593" r="1.3" fill="#c8a0c8" opacity="0.75"/><circle cx="438" cy="289" r="1.4" fill="#f0a0b0" opacity="0.50"/><circle cx="906" cy="556" r="1.3" fill="#d0d0e8" opacity="0.50"/><circle cx="206" cy="818" r="1.3" fill="#f0a0b0" opacity="0.50"/><circle cx="759" cy="386" r="1.8" fill="#d0d0e8" opacity="0.50"/><circle cx="1109" cy="578" r="2.0" fill="#e0b0c0" opacity="0.90"/><circle cx="1435" cy="738" r="1.5" fill="#e0b0c0" opacity="0.75"/><circle cx="1362" cy="673" r="1.1" fill="#c0b0d8" opacity="0.90"/><circle cx="1379" cy="814" r="1.3" fill="#c0b0d8" opacity="0.50"/><circle cx="1548" cy="624" r="1.8" fill="#d0d0e8" opacity="0.50"/><circle cx="97" cy="247" r="1.4" fill="#a0a0e0" opacity="0.90"/><circle cx="1565" cy="602" r="1.8" fill="#c8a0c8" opacity="0.60"/><circle cx="933" cy="139" r="2.0" fill="#a0a0e0" opacity="0.50"/><circle cx="1243" cy="191" r="1.8" fill="#e0e0e0" opacity="0.75"/><circle cx="1517" cy="843" r="1.3" fill="#d0d0e8" opacity="0.60"/><circle cx="1390" cy="951" r="1.5" fill="#f0a0b0" opacity="0.50"/><circle cx="914" cy="707" r="2.0" fill="#c8a0c8" opacity="0.60"/><circle cx="181" cy="259" r="1.4" fill="#e8c0b0" opacity="0.60"/><circle cx="63" cy="187" r="1.4" fill="#a0a0e0" opacity="0.60"/><circle cx="1273" cy="379" r="1.6" fill="#e8c0b0" opacity="0.90"/><circle cx="890" cy="777" r="1.6" fill="#d0d0e8" opacity="0.75"/><circle cx="1825" cy="918" r="1.1" fill="#e8c0b0" opacity="0.90"/><circle cx="180" cy="559" r="1.5" fill="#e8c0b0" opacity="0.90"/><circle cx="423" cy="926" r="1.3" fill="#a0a0e0" opacity="0.50"/><circle cx="299" cy="574" r="1.4" fill="#e0b0c0" opacity="0.75"/><circle cx="1659" cy="723" r="1.3" fill="#e0e0e0" opacity="0.90"/><circle cx="759" cy="269" r="1.5" fill="#e0e0e0" opacity="0.90"/><circle cx="591" cy="253" r="1.4" fill="#f0a0b0" opacity="0.75"/><circle cx="261" cy="413" r="1.4" fill="#b0c8f0" opacity="0.90"/><circle cx="259" cy="910" r="1.8" fill="#c8a0c8" opacity="0.75"/><circle cx="502" cy="190" r="1.5" fill="#a0a0e0" opacity="0.75"/><circle cx="1729" cy="767" r="2.0" fill="#c8a0c8" opacity="0.75"/><circle cx="226" cy="833" r="1.4" fill="#e0b0c0" opacity="0.60"/><circle cx="1812" cy="500" r="1.4" fill="#d0d0e8" opacity="0.75"/><circle cx="1473" cy="493" r="1.1" fill="#f0a0b0" opacity="0.60"/><circle cx="1353" cy="177" r="1.8" fill="#f0a0b0" opacity="0.90"/><circle cx="1162" cy="252" r="2.0" fill="#e8c0b0" opacity="0.90"/><circle cx="129" cy="910" r="1.3" fill="#e0b0c0" opacity="0.90"/><circle cx="797" cy="371" r="1.4" fill="#e8c0b0" opacity="0.90"/><circle cx="1237" cy="387" r="1.6" fill="#f0a0b0" opacity="0.50"/><circle cx="345" cy="271" r="1.3" fill="#c0b0d8" opacity="0.90"/><circle cx="1044" cy="514" r="1.4" fill="#e0e0e0" opacity="0.90"/><circle cx="295" cy="297" r="1.1" fill="#e0b0c0" opacity="0.75"/><circle cx="1054" cy="403" r="1.4" fill="#e8c0b0" opacity="0.60"/><circle cx="1659" cy="762" r="1.5" fill="#f0a0b0" opacity="0.90"/><circle cx="1401" cy="311" r="1.4" fill="#b0c8f0" opacity="0.50"/><circle cx="949" cy="616" r="1.4" fill="#e0b0c0" opacity="0.60"/><circle cx="209" cy="885" r="1.5" fill="#f0a0b0" opacity="0.90"/><circle cx="828" cy="397" r="2.0" fill="#c8a0c8" opacity="0.60"/><circle cx="99" cy="728" r="2.0" fill="#e0e0e0" opacity="0.90"/><circle cx="40" cy="463" r="2.0" fill="#c0b0d8" opacity="0.90"/><circle cx="1814" cy="343" r="1.1" fill="#d0d0e8" opacity="0.60"/><circle cx="318" cy="948" r="1.1" fill="#e0e0e0" opacity="0.50"/><circle cx="1046" cy="169" r="2.0" fill="#e0b0c0" opacity="0.60"/><circle cx="1079" cy="167" r="1.8" fill="#e8c0b0" opacity="0.60"/><circle cx="1183" cy="577" r="1.5" fill="#a0a0e0" opacity="0.50"/><circle cx="168" cy="574" r="1.6" fill="#d0d0e8" opacity="0.90"/><circle cx="516" cy="796" r="1.1" fill="#c8a0c8" opacity="0.75"/><circle cx="1858" cy="369" r="1.4" fill="#d0d0e8" opacity="0.90"/><circle cx="1000" cy="593" r="1.1" fill="#f0a0b0" opacity="0.75"/><circle cx="141" cy="298" r="1.8" fill="#f0a0b0" opacity="0.50"/><circle cx="509" cy="693" r="1.4" fill="#d0d0e8" opacity="0.90"/><circle cx="102" cy="418" r="1.5" fill="#b0c8f0" opacity="0.90"/><circle cx="401" cy="802" r="1.8" fill="#c0b0d8" opacity="0.50"/><circle cx="415" cy="946" r="1.4" fill="#d0d0e8" opacity="0.60"/><circle cx="889" cy="357" r="1.4" fill="#a0a0e0" opacity="0.90"/><circle cx="1153" cy="885" r="1.5" fill="#f0a0b0" opacity="0.50"/><circle cx="1771" cy="258" r="1.5" fill="#c8a0c8" opacity="0.60"/><circle cx="83" cy="634" r="1.5" fill="#c8a0c8" opacity="0.50"/><circle cx="376" cy="511" r="1.8" fill="#b0c8f0" opacity="0.50"/><circle cx="1860" cy="914" r="1.4" fill="#d0d0e8" opacity="0.60"/><circle cx="1231" cy="574" r="1.5" fill="#c8a0c8" opacity="0.75"/><circle cx="1253" cy="452" r="1.4" fill="#b0c8f0" opacity="0.90"/><circle cx="349" cy="138" r="1.4" fill="#a0a0e0" opacity="0.75"/><circle cx="807" cy="875" r="1.6" fill="#d0d0e8" opacity="0.90"/><circle cx="691" cy="822" r="2.0" fill="#f0a0b0" opacity="0.50"/><circle cx="130" cy="531" r="1.4" fill="#c0b0d8" opacity="0.90"/><circle cx="392" cy="440" r="1.5" fill="#c8a0c8" opacity="0.90"/><circle cx="493" cy="658" r="1.5" fill="#c8a0c8" opacity="0.90"/><circle cx="104" cy="188" r="1.1" fill="#e8c0b0" opacity="0.60"/><circle cx="1404" cy="886" r="1.4" fill="#b0c8f0" opacity="0.75"/><circle cx="651" cy="932" r="1.1" fill="#e8c0b0" opacity="0.75"/><circle cx="1727" cy="384" r="1.8" fill="#a0a0e0" opacity="0.50"/><circle cx="1547" cy="226" r="1.8" fill="#e0e0e0" opacity="0.90"/><circle cx="1481" cy="899" r="2.0" fill="#e0e0e0" opacity="0.60"/><circle cx="1734" cy="289" r="2.0" fill="#e8c0b0" opacity="0.60"/><circle cx="1148" cy="410" r="1.4" fill="#e0e0e0" opacity="0.75"/><circle cx="1470" cy="633" r="1.6" fill="#d0d0e8" opacity="0.90"/><circle cx="1414" cy="343" r="1.1" fill="#c8a0c8" opacity="0.90"/><circle cx="1048" cy="408" r="1.5" fill="#a0a0e0" opacity="0.50"/><circle cx="523" cy="206" r="1.1" fill="#f0a0b0" opacity="0.90"/><circle cx="1844" cy="948" r="1.3" fill="#d0d0e8" opacity="0.60"/><circle cx="801" cy="654" r="1.8" fill="#d0d0e8" opacity="0.50"/><circle cx="1463" cy="381" r="1.4" fill="#e8c0b0" opacity="0.75"/><circle cx="504" cy="353" r="1.5" fill="#d0d0e8" opacity="0.60"/><circle cx="488" cy="264" r="1.6" fill="#d0d0e8" opacity="0.75"/><circle cx="158" cy="346" r="1.3" fill="#c0b0d8" opacity="0.60"/><circle cx="1226" cy="220" r="1.5" fill="#c8a0c8" opacity="0.50"/><circle cx="48" cy="873" r="1.3" fill="#e0e0e0" opacity="0.75"/><circle cx="114" cy="381" r="1.1" fill="#c8a0c8" opacity="0.60"/><circle cx="1136" cy="827" r="1.3" fill="#a0a0e0" opacity="0.75"/><circle cx="976" cy="284" r="1.6" fill="#e8c0b0" opacity="0.50"/><circle cx="233" cy="634" r="1.6" fill="#b0c8f0" opacity="0.60"/><circle cx="108" cy="420" r="1.1" fill="#d0d0e8" opacity="0.75"/><circle cx="110" cy="747" r="1.3" fill="#c8a0c8" opacity="0.75"/><circle cx="786" cy="446" r="1.6" fill="#e8c0b0" opacity="0.50"/><circle cx="411" cy="800" r="1.6" fill="#e0e0e0" opacity="0.50"/><circle cx="785" cy="801" r="1.8" fill="#c0b0d8" opacity="0.60"/><circle cx="1207" cy="212" r="1.3" fill="#f0a0b0" opacity="0.75"/><circle cx="788" cy="373" r="1.4" fill="#f0a0b0" opacity="0.50"/><circle cx="610" cy="609" r="1.4" fill="#f0a0b0" opacity="0.90"/><circle cx="73" cy="776" r="2.0" fill="#b0c8f0" opacity="0.60"/><circle cx="753" cy="474" r="1.1" fill="#f0a0b0" opacity="0.60"/><circle cx="813" cy="821" r="1.5" fill="#b0c8f0" opacity="0.90"/><circle cx="1451" cy="245" r="1.1" fill="#c0b0d8" opacity="0.60"/><circle cx="1209" cy="896" r="1.1" fill="#b0c8f0" opacity="0.60"/><circle cx="306" cy="373" r="1.6" fill="#e0b0c0" opacity="0.50"/><circle cx="239" cy="546" r="2.0" fill="#d0d0e8" opacity="0.75"/><circle cx="271" cy="923" r="1.5" fill="#b0c8f0" opacity="0.50"/><circle cx="1149" cy="667" r="1.1" fill="#e0b0c0" opacity="0.60"/><circle cx="1173" cy="649" r="1.3" fill="#e0e0e0" opacity="0.60"/><circle cx="1072" cy="171" r="1.6" fill="#e0b0c0" opacity="0.90"/><circle cx="696" cy="261" r="1.8" fill="#d0d0e8" opacity="0.50"/><circle cx="1653" cy="839" r="1.8" fill="#c8a0c8" opacity="0.75"/><circle cx="255" cy="637" r="1.6" fill="#e8c0b0" opacity="0.90"/><circle cx="602" cy="344" r="1.5" fill="#b0c8f0" opacity="0.90"/><circle cx="959" cy="285" r="1.1" fill="#e0e0e0" opacity="0.90"/><circle cx="469" cy="774" r="2.0" fill="#e0e0e0" opacity="0.60"/><circle cx="1519" cy="470" r="1.1" fill="#e0b0c0" opacity="0.75"/><circle cx="826" cy="213" r="1.5" fill="#c0b0d8" opacity="0.50"/><circle cx="114" cy="245" r="1.8" fill="#b0c8f0" opacity="0.50"/><circle cx="139" cy="557" r="1.5" fill="#e0b0c0" opacity="0.50"/><circle cx="1604" cy="968" r="1.8" fill="#a0a0e0" opacity="0.60"/><circle cx="280" cy="876" r="1.4" fill="#e0b0c0" opacity="0.60"/><circle cx="160" cy="429" r="2.0" fill="#e8c0b0" opacity="0.60"/><circle cx="631" cy="648" r="2.0" fill="#e0e0e0" opacity="0.60"/><circle cx="504" cy="941" r="1.5" fill="#d0d0e8" opacity="0.75"/><circle cx="1164" cy="334" r="1.4" fill="#c8a0c8" opacity="0.60"/><circle cx="372" cy="271" r="1.4" fill="#b0c8f0" opacity="0.90"/><circle cx="348" cy="791" r="1.1" fill="#c0b0d8" opacity="0.50"/><circle cx="1201" cy="436" r="2.0" fill="#e0e0e0" opacity="0.50"/><circle cx="500" cy="583" r="2.0" fill="#f0a0b0" opacity="0.75"/><circle cx="523" cy="963" r="1.6" fill="#e0b0c0" opacity="0.75"/><circle cx="644" cy="204" r="1.3" fill="#e0b0c0" opacity="0.50"/><circle cx="581" cy="567" r="1.4" fill="#b0c8f0" opacity="0.50"/><circle cx="1403" cy="321" r="1.4" fill="#f0a0b0" opacity="0.90"/><circle cx="976" cy="884" r="1.3" fill="#e0e0e0" opacity="0.60"/><circle cx="1158" cy="174" r="1.1" fill="#c8a0c8" opacity="0.75"/><circle cx="594" cy="573" r="1.6" fill="#d0d0e8" opacity="0.90"/><circle cx="1105" cy="628" r="1.3" fill="#b0c8f0" opacity="0.90"/><circle cx="329" cy="148" r="2.0" fill="#d0d0e8" opacity="0.60"/><circle cx="863" cy="189" r="1.3" fill="#e8c0b0" opacity="0.90"/><circle cx="1521" cy="944" r="1.1" fill="#c0b0d8" opacity="0.75"/><circle cx="1125" cy="619" r="1.6" fill="#c0b0d8" opacity="0.90"/><circle cx="494" cy="890" r="1.1" fill="#c8a0c8" opacity="0.50"/><circle cx="781" cy="334" r="1.1" fill="#a0a0e0" opacity="0.50"/><circle cx="1158" cy="684" r="1.3" fill="#e0b0c0" opacity="0.90"/><circle cx="404" cy="644" r="1.6" fill="#f0a0b0" opacity="0.60"/><circle cx="968" cy="189" r="1.8" fill="#c8a0c8" opacity="0.90"/><circle cx="1346" cy="141" r="2.0" fill="#f0a0b0" opacity="0.90"/><circle cx="187" cy="683" r="1.3" fill="#d0d0e8" opacity="0.50"/><circle cx="517" cy="674" r="1.1" fill="#b0c8f0" opacity="0.75"/><circle cx="1339" cy="358" r="1.6" fill="#f0a0b0" opacity="0.75"/><circle cx="580" cy="911" r="1.3" fill="#a0a0e0" opacity="0.50"/><circle cx="350" cy="891" r="2.0" fill="#d0d0e8" opacity="0.60"/><circle cx="1402" cy="409" r="1.5" fill="#b0c8f0" opacity="0.60"/><circle cx="732" cy="847" r="1.8" fill="#c0b0d8" opacity="0.90"/><circle cx="902" cy="579" r="1.1" fill="#c8a0c8" opacity="0.90"/><circle cx="1784" cy="331" r="1.4" fill="#d0d0e8" opacity="0.90"/><circle cx="1176" cy="201" r="1.3" fill="#e0b0c0" opacity="0.50"/><circle cx="89" cy="225" r="1.3" fill="#b0c8f0" opacity="0.60"/><circle cx="1319" cy="162" r="1.3" fill="#c8a0c8" opacity="0.50"/><circle cx="1385" cy="191" r="1.6" fill="#b0c8f0" opacity="0.60"/><circle cx="1532" cy="820" r="1.8" fill="#a0a0e0" opacity="0.90"/><circle cx="235" cy="308" r="1.1" fill="#c8a0c8" opacity="0.50"/><circle cx="1772" cy="897" r="2.0" fill="#a0a0e0" opacity="0.75"/><circle cx="911" cy="247" r="2.0" fill="#d0d0e8" opacity="0.75"/><circle cx="622" cy="490" r="1.1" fill="#b0c8f0" opacity="0.75"/><circle cx="1737" cy="176" r="2.0" fill="#b0c8f0" opacity="0.75"/><circle cx="1444" cy="639" r="1.5" fill="#e8c0b0" opacity="0.50"/><circle cx="1480" cy="162" r="1.6" fill="#a0a0e0" opacity="0.75"/><circle cx="896" cy="176" r="1.6" fill="#d0d0e8" opacity="0.50"/><circle cx="1089" cy="376" r="1.5" fill="#c8a0c8" opacity="0.60"/><circle cx="566" cy="763" r="1.1" fill="#c8a0c8" opacity="0.75"/><circle cx="936" cy="546" r="2.0" fill="#e0b0c0" opacity="0.90"/><circle cx="1121" cy="935" r="1.6" fill="#e8c0b0" opacity="0.60"/><circle cx="558" cy="315" r="1.8" fill="#d0d0e8" opacity="0.90"/><circle cx="343" cy="920" r="2.0" fill="#a0a0e0" opacity="0.90"/><circle cx="1478" cy="718" r="2.0" fill="#a0a0e0" opacity="0.75"/><circle cx="689" cy="471" r="1.5" fill="#a0a0e0" opacity="0.90"/><circle cx="1661" cy="157" r="1.3" fill="#e8c0b0" opacity="0.75"/><circle cx="821" cy="591" r="1.3" fill="#f0a0b0" opacity="0.60"/><circle cx="1763" cy="242" r="1.6" fill="#c8a0c8" opacity="0.75"/><circle cx="1101" cy="572" r="2.0" fill="#e0e0e0" opacity="0.75"/><circle cx="349" cy="502" r="2.0" fill="#e8c0b0" opacity="0.60"/><circle cx="270" cy="522" r="1.8" fill="#d0d0e8" opacity="0.60"/><circle cx="528" cy="766" r="2.0" fill="#e0b0c0" opacity="0.60"/><circle cx="1819" cy="740" r="1.6" fill="#c0b0d8" opacity="0.75"/><circle cx="334" cy="410" r="1.3" fill="#e8c0b0" opacity="0.50"/><circle cx="340" cy="685" r="1.3" fill="#f0a0b0" opacity="0.60"/><circle cx="1835" cy="800" r="1.8" fill="#e8c0b0" opacity="0.90"/><circle cx="540" cy="227" r="1.1" fill="#e8c0b0" opacity="0.60"/><circle cx="1656" cy="523" r="1.1" fill="#f0a0b0" opacity="0.90"/><circle cx="1306" cy="554" r="1.8" fill="#e8c0b0" opacity="0.90"/><circle cx="80" cy="351" r="1.8" fill="#f0a0b0" opacity="0.50"/><circle cx="1392" cy="894" r="1.5" fill="#f0a0b0" opacity="0.60"/><circle cx="1259" cy="681" r="2.0" fill="#d0d0e8" opacity="0.60"/><circle cx="1211" cy="515" r="1.4" fill="#e8c0b0" opacity="0.50"/><circle cx="1673" cy="338" r="1.5" fill="#e0b0c0" opacity="0.75"/><circle cx="1590" cy="539" r="1.1" fill="#f0a0b0" opacity="0.60"/><circle cx="1672" cy="410" r="1.1" fill="#f0a0b0" opacity="0.90"/><circle cx="1697" cy="225" r="1.4" fill="#c0b0d8" opacity="0.60"/><circle cx="334" cy="789" r="1.3" fill="#c0b0d8" opacity="0.75"/><circle cx="224" cy="616" r="1.6" fill="#d0d0e8" opacity="0.90"/><circle cx="975" cy="670" r="2.0" fill="#b0c8f0" opacity="0.75"/><circle cx="789" cy="928" r="1.3" fill="#e0b0c0" opacity="0.90"/><circle cx="978" cy="915" r="1.8" fill="#b0c8f0" opacity="0.50"/><circle cx="501" cy="455" r="1.1" fill="#c8a0c8" opacity="0.50"/><circle cx="804" cy="487" r="1.8" fill="#b0c8f0" opacity="0.75"/><circle cx="239" cy="389" r="1.5" fill="#c0b0d8" opacity="0.60"/><circle cx="1854" cy="938" r="1.5" fill="#d0d0e8" opacity="0.60"/><circle cx="276" cy="784" r="2.0" fill="#d0d0e8" opacity="0.90"/><circle cx="1212" cy="738" r="2.0" fill="#e0b0c0" opacity="0.75"/><circle cx="1256" cy="830" r="2.0" fill="#f0a0b0" opacity="0.90"/><circle cx="1858" cy="771" r="1.8" fill="#e0b0c0" opacity="0.90"/><circle cx="687" cy="846" r="1.4" fill="#f0a0b0" opacity="0.75"/><circle cx="1834" cy="703" r="1.5" fill="#c8a0c8" opacity="0.75"/><circle cx="693" cy="682" r="1.4" fill="#e0e0e0" opacity="0.90"/><circle cx="822" cy="668" r="1.8" fill="#b0c8f0" opacity="0.60"/><circle cx="1735" cy="849" r="1.1" fill="#a0a0e0" opacity="0.75"/><circle cx="1471" cy="253" r="2.0" fill="#b0c8f0" opacity="0.50"/><circle cx="1240" cy="311" r="1.1" fill="#e8c0b0" opacity="0.75"/><circle cx="1150" cy="619" r="2.0" fill="#d0d0e8" opacity="0.60"/><circle cx="1457" cy="425" r="1.3" fill="#d0d0e8" opacity="0.90"/><circle cx="1485" cy="276" r="1.8" fill="#a0a0e0" opacity="0.75"/><circle cx="400" cy="714" r="1.6" fill="#a0a0e0" opacity="0.90"/><circle cx="1265" cy="234" r="1.1" fill="#e8c0b0" opacity="0.90"/><circle cx="467" cy="252" r="1.5" fill="#c0b0d8" opacity="0.50"/><circle cx="924" cy="892" r="1.8" fill="#e0e0e0" opacity="0.60"/><circle cx="949" cy="587" r="2.0" fill="#c8a0c8" opacity="0.60"/><circle cx="1574" cy="527" r="1.6" fill="#e0e0e0" opacity="0.75"/><circle cx="1574" cy="449" r="1.5" fill="#a0a0e0" opacity="0.60"/><circle cx="1203" cy="667" r="1.1" fill="#c8a0c8" opacity="0.50"/><circle cx="1286" cy="914" r="1.4" fill="#a0a0e0" opacity="0.90"/><circle cx="925" cy="885" r="1.1" fill="#d0d0e8" opacity="0.90"/><circle cx="1181" cy="419" r="2.0" fill="#b0c8f0" opacity="0.75"/><circle cx="906" cy="575" r="2.0" fill="#d0d0e8" opacity="0.75"/><circle cx="834" cy="489" r="1.6" fill="#c8a0c8" opacity="0.75"/><circle cx="575" cy="827" r="1.5" fill="#b0c8f0" opacity="0.75"/><circle cx="1633" cy="424" r="1.3" fill="#e0e0e0" opacity="0.50"/><circle cx="644" cy="401" r="1.4" fill="#e0b0c0" opacity="0.50"/><circle cx="1471" cy="169" r="1.8" fill="#c0b0d8" opacity="0.90"/><circle cx="1035" cy="177" r="1.4" fill="#a0a0e0" opacity="0.50"/><circle cx="125" cy="822" r="1.5" fill="#c8a0c8" opacity="0.90"/><circle cx="1165" cy="659" r="1.8" fill="#a0a0e0" opacity="0.60"/><circle cx="112" cy="665" r="1.8" fill="#e0b0c0" opacity="0.50"/><circle cx="1251" cy="862" r="1.5" fill="#a0a0e0" opacity="0.50"/><circle cx="713" cy="823" r="2.0" fill="#e8c0b0" opacity="0.75"/><circle cx="1614" cy="290" r="1.1" fill="#b0c8f0" opacity="0.50"/><circle cx="826" cy="672" r="1.1" fill="#e0e0e0" opacity="0.50"/><circle cx="1545" cy="782" r="1.5" fill="#f0a0b0" opacity="0.90"/><circle cx="163" cy="704" r="1.6" fill="#e0b0c0" opacity="0.90"/><circle cx="1445" cy="594" r="1.1" fill="#e0e0e0" opacity="0.60"/><circle cx="1675" cy="659" r="1.5" fill="#c8a0c8" opacity="0.50"/><circle cx="1288" cy="238" r="2.0" fill="#a0a0e0" opacity="0.60"/><circle cx="1627" cy="244" r="1.1" fill="#e8c0b0" opacity="0.60"/><circle cx="863" cy="757" r="1.1" fill="#b0c8f0" opacity="0.60"/><circle cx="1372" cy="206" r="1.8" fill="#c0b0d8" opacity="0.90"/><circle cx="881" cy="915" r="1.4" fill="#c8a0c8" opacity="0.50"/><circle cx="61" cy="148" r="1.8" fill="#a0a0e0" opacity="0.90"/><circle cx="608" cy="745" r="1.3" fill="#e0e0e0" opacity="0.50"/><circle cx="617" cy="928" r="1.8" fill="#e0e0e0" opacity="0.90"/><circle cx="1275" cy="257" r="2.0" fill="#a0a0e0" opacity="0.75"/><circle cx="1781" cy="273" r="2.0" fill="#f0a0b0" opacity="0.90"/><circle cx="744" cy="793" r="1.4" fill="#b0c8f0" opacity="0.75"/><circle cx="551" cy="655" r="1.8" fill="#b0c8f0" opacity="0.50"/><circle cx="1557" cy="638" r="1.4" fill="#f0a0b0" opacity="0.60"/><circle cx="727" cy="708" r="1.6" fill="#d0d0e8" opacity="0.90"/><circle cx="557" cy="137" r="1.4" fill="#e8c0b0" opacity="0.90"/><circle cx="327" cy="905" r="2.0" fill="#c8a0c8" opacity="0.75"/><circle cx="1561" cy="814" r="2.0" fill="#e0b0c0" opacity="0.75"/><circle cx="1820" cy="802" r="1.6" fill="#e0e0e0" opacity="0.75"/><circle cx="1016" cy="587" r="1.5" fill="#f0a0b0" opacity="0.60"/><circle cx="1478" cy="739" r="1.3" fill="#e8c0b0" opacity="0.50"/><circle cx="1277" cy="525" r="1.3" fill="#e8c0b0" opacity="0.50"/><circle cx="1485" cy="520" r="1.1" fill="#c0b0d8" opacity="0.75"/><circle cx="1449" cy="330" r="1.6" fill="#c0b0d8" opacity="0.75"/><circle cx="1655" cy="572" r="1.5" fill="#c0b0d8" opacity="0.60"/><circle cx="385" cy="297" r="1.3" fill="#e8c0b0" opacity="0.75"/><circle cx="1095" cy="436" r="2.0" fill="#c0b0d8" opacity="0.60"/><circle cx="490" cy="906" r="1.5" fill="#b0c8f0" opacity="0.50"/><circle cx="718" cy="523" r="1.1" fill="#e0b0c0" opacity="0.75"/><circle cx="1130" cy="424" r="1.6" fill="#c8a0c8" opacity="0.50"/><circle cx="101" cy="963" r="2.0" fill="#e0e0e0" opacity="0.60"/><circle cx="517" cy="787" r="1.5" fill="#a0a0e0" opacity="0.90"/><circle cx="1440" cy="820" r="1.3" fill="#e8c0b0" opacity="0.50"/><circle cx="658" cy="967" r="1.5" fill="#a0a0e0" opacity="0.50"/><circle cx="133" cy="601" r="2.0" fill="#e0e0e0" opacity="0.90"/><circle cx="1769" cy="896" r="1.1" fill="#f0a0b0" opacity="0.50"/><circle cx="1329" cy="211" r="1.4" fill="#d0d0e8" opacity="0.50"/><circle cx="1785" cy="695" r="1.5" fill="#e0b0c0" opacity="0.90"/><circle cx="1591" cy="446" r="1.3" fill="#d0d0e8" opacity="0.60"/><circle cx="111" cy="350" r="1.4" fill="#c8a0c8" opacity="0.50"/><circle cx="1568" cy="175" r="2.0" fill="#c0b0d8" opacity="0.90"/><circle cx="142" cy="257" r="2.0" fill="#c8a0c8" opacity="0.60"/><circle cx="1275" cy="385" r="1.6" fill="#e0e0e0" opacity="0.50"/><circle cx="899" cy="446" r="1.5" fill="#a0a0e0" opacity="0.75"/><circle cx="918" cy="277" r="1.3" fill="#e0b0c0" opacity="0.50"/><circle cx="894" cy="898" r="2.0" fill="#c8a0c8" opacity="0.60"/><circle cx="1733" cy="320" r="1.6" fill="#b0c8f0" opacity="0.60"/><circle cx="1460" cy="936" r="1.5" fill="#c8a0c8" opacity="0.50"/><circle cx="866" cy="420" r="2.0" fill="#d0d0e8" opacity="0.90"/><circle cx="251" cy="442" r="1.4" fill="#d0d0e8" opacity="0.50"/><circle cx="369" cy="513" r="1.3" fill="#e0e0e0" opacity="0.60"/><circle cx="526" cy="480" r="1.3" fill="#c8a0c8" opacity="0.75"/><circle cx="1082" cy="384" r="2.0" fill="#e0b0c0" opacity="0.75"/><circle cx="936" cy="402" r="1.5" fill="#a0a0e0" opacity="0.60"/><circle cx="1826" cy="183" r="2.0" fill="#d0d0e8" opacity="0.90"/><circle cx="1564" cy="236" r="2.0" fill="#d0d0e8" opacity="0.75"/><circle cx="829" cy="354" r="1.3" fill="#d0d0e8" opacity="0.50"/><circle cx="752" cy="483" r="1.3" fill="#c8a0c8" opacity="0.75"/><circle cx="303" cy="670" r="1.5" fill="#c0b0d8" opacity="0.75"/><circle cx="972" cy="506" r="2.0" fill="#c0b0d8" opacity="0.75"/><circle cx="379" cy="499" r="1.5" fill="#d0d0e8" opacity="0.75"/><circle cx="1083" cy="251" r="1.3" fill="#c0b0d8" opacity="0.60"/><circle cx="1339" cy="300" r="1.1" fill="#a0a0e0" opacity="0.90"/><circle cx="1429" cy="282" r="1.3" fill="#d0d0e8" opacity="0.75"/><circle cx="409" cy="191" r="1.8" fill="#c0b0d8" opacity="0.90"/><circle cx="1575" cy="901" r="1.6" fill="#b0c8f0" opacity="0.75"/><circle cx="554" cy="670" r="1.5" fill="#a0a0e0" opacity="0.50"/><circle cx="787" cy="773" r="1.3" fill="#e8c0b0" opacity="0.60"/><circle cx="380" cy="830" r="1.4" fill="#c8a0c8" opacity="0.60"/><circle cx="1322" cy="616" r="2.0" fill="#c8a0c8" opacity="0.75"/><circle cx="989" cy="508" r="1.6" fill="#a0a0e0" opacity="0.50"/><circle cx="691" cy="340" r="2.0" fill="#b0c8f0" opacity="0.90"/><circle cx="1092" cy="886" r="1.4" fill="#a0a0e0" opacity="0.90"/><circle cx="855" cy="157" r="2.0" fill="#c0b0d8" opacity="0.60"/><circle cx="78" cy="944" r="1.3" fill="#e0b0c0" opacity="0.60"/><circle cx="227" cy="345" r="2.0" fill="#c8a0c8" opacity="0.50"/><circle cx="216" cy="720" r="1.3" fill="#e8c0b0" opacity="0.50"/><circle cx="1568" cy="668" r="1.5" fill="#c0b0d8" opacity="0.60"/><circle cx="1322" cy="222" r="2.0" fill="#a0a0e0" opacity="0.60"/><circle cx="122" cy="239" r="1.5" fill="#c0b0d8" opacity="0.75"/><circle cx="241" cy="237" r="1.3" fill="#c0b0d8" opacity="0.60"/><circle cx="1611" cy="259" r="1.6" fill="#e0e0e0" opacity="0.90"/><circle cx="340" cy="826" r="1.8" fill="#f0a0b0" opacity="0.90"/><circle cx="1130" cy="639" r="1.1" fill="#f0a0b0" opacity="0.50"/><circle cx="1458" cy="419" r="1.3" fill="#b0c8f0" opacity="0.90"/><circle cx="1579" cy="607" r="1.4" fill="#f0a0b0" opacity="0.50"/><circle cx="633" cy="258" r="1.8" fill="#b0c8f0" opacity="0.60"/><circle cx="1629" cy="690" r="1.1" fill="#b0c8f0" opacity="0.50"/><circle cx="1009" cy="194" r="1.5" fill="#d0d0e8" opacity="0.50"/><circle cx="451" cy="487" r="1.5" fill="#e0e0e0" opacity="0.50"/><circle cx="1517" cy="874" r="1.1" fill="#c8a0c8" opacity="0.75"/><circle cx="1715" cy="657" r="1.8" fill="#c0b0d8" opacity="0.50"/><circle cx="1174" cy="345" r="1.6" fill="#c8a0c8" opacity="0.90"/><circle cx="472" cy="169" r="1.1" fill="#e8c0b0" opacity="0.75"/><circle cx="1222" cy="237" r="1.6" fill="#c0b0d8" opacity="0.75"/><circle cx="194" cy="629" r="1.3" fill="#e0e0e0" opacity="0.50"/><circle cx="974" cy="875" r="1.5" fill="#e8c0b0" opacity="0.75"/><circle cx="484" cy="209" r="1.6" fill="#e8c0b0" opacity="0.90"/><circle cx="1153" cy="612" r="1.8" fill="#f0a0b0" opacity="0.60"/><circle cx="1041" cy="442" r="1.6" fill="#e8c0b0" opacity="0.90"/><circle cx="896" cy="395" r="1.3" fill="#b0c8f0" opacity="0.60"/><circle cx="385" cy="592" r="1.6" fill="#f0a0b0" opacity="0.50"/><circle cx="1727" cy="272" r="1.3" fill="#b0c8f0" opacity="0.75"/><circle cx="937" cy="374" r="1.3" fill="#e8c0b0" opacity="0.50"/><circle cx="1449" cy="268" r="1.1" fill="#b0c8f0" opacity="0.90"/><circle cx="1240" cy="568" r="2.0" fill="#e0e0e0" opacity="0.75"/><circle cx="1382" cy="227" r="1.3" fill="#e0b0c0" opacity="0.90"/><circle cx="655" cy="430" r="1.8" fill="#d0d0e8" opacity="0.75"/><circle cx="1539" cy="568" r="1.8" fill="#e0e0e0" opacity="0.75"/><circle cx="1473" cy="728" r="1.8" fill="#e0b0c0" opacity="0.90"/><circle cx="1629" cy="140" r="2.0" fill="#c0b0d8" opacity="0.50"/><circle cx="949" cy="940" r="1.6" fill="#e0b0c0" opacity="0.90"/><circle cx="1591" cy="369" r="1.6" fill="#a0a0e0" opacity="0.90"/><circle cx="1594" cy="714" r="1.4" fill="#b0c8f0" opacity="0.75"/><circle cx="684" cy="575" r="1.6" fill="#f0a0b0" opacity="0.75"/><circle cx="52" cy="759" r="1.5" fill="#f0a0b0" opacity="0.90"/><circle cx="588" cy="584" r="2.0" fill="#e0b0c0" opacity="0.90"/><circle cx="1090" cy="622" r="1.1" fill="#b0c8f0" opacity="0.75"/><circle cx="1808" cy="644" r="1.3" fill="#b0c8f0" opacity="0.60"/><circle cx="1814" cy="880" r="1.1" fill="#c8a0c8" opacity="0.50"/><circle cx="508" cy="884" r="1.4" fill="#c0b0d8" opacity="0.75"/><circle cx="1023" cy="970" r="1.6" fill="#c0b0d8" opacity="0.90"/><circle cx="751" cy="435" r="1.6" fill="#b0c8f0" opacity="0.90"/><circle cx="1770" cy="701" r="1.6" fill="#d0d0e8" opacity="0.50"/><circle cx="787" cy="554" r="1.8" fill="#c0b0d8" opacity="0.60"/><circle cx="1646" cy="941" r="1.5" fill="#f0a0b0" opacity="0.90"/><circle cx="1440" cy="887" r="1.6" fill="#b0c8f0" opacity="0.50"/><circle cx="352" cy="402" r="1.1" fill="#e8c0b0" opacity="0.60"/><circle cx="242" cy="883" r="1.8" fill="#b0c8f0" opacity="0.90"/><circle cx="1192" cy="574" r="2.0" fill="#c0b0d8" opacity="0.60"/><circle cx="961" cy="293" r="1.3" fill="#c8a0c8" opacity="0.50"/><circle cx="685" cy="966" r="1.8" fill="#c8a0c8" opacity="0.90"/><circle cx="60" cy="138" r="1.8" fill="#c0b0d8" opacity="0.50"/><circle cx="1714" cy="468" r="1.1" fill="#c8a0c8" opacity="0.50"/><circle cx="399" cy="552" r="1.6" fill="#e8c0b0" opacity="0.60"/><circle cx="1088" cy="479" r="1.1" fill="#e0b0c0" opacity="0.60"/><circle cx="986" cy="561" r="1.1" fill="#a0a0e0" opacity="0.50"/><circle cx="351" cy="572" r="2.0" fill="#e0e0e0" opacity="0.90"/><circle cx="1512" cy="188" r="1.1" fill="#b0c8f0" opacity="0.60"/><circle cx="1346" cy="431" r="1.3" fill="#c8a0c8" opacity="0.75"/><circle cx="1187" cy="854" r="1.6" fill="#a0a0e0" opacity="0.75"/><circle cx="390" cy="657" r="1.1" fill="#c8a0c8" opacity="0.60"/><circle cx="1665" cy="623" r="1.1" fill="#e0e0e0" opacity="0.50"/><circle cx="1172" cy="344" r="1.1" fill="#e0b0c0" opacity="0.60"/><circle cx="614" cy="887" r="2.0" fill="#e0e0e0" opacity="0.75"/><circle cx="804" cy="346" r="1.5" fill="#a0a0e0" opacity="0.60"/><circle cx="1276" cy="700" r="1.6" fill="#d0d0e8" opacity="0.90"/><circle cx="604" cy="867" r="1.5" fill="#c8a0c8" opacity="0.60"/><circle cx="200" cy="278" r="1.5" fill="#e0b0c0" opacity="0.50"/><circle cx="1813" cy="379" r="1.6" fill="#b0c8f0" opacity="0.50"/><circle cx="651" cy="864" r="1.4" fill="#f0a0b0" opacity="0.50"/><circle cx="1794" cy="489" r="1.4" fill="#c0b0d8" opacity="0.60"/><circle cx="747" cy="526" r="1.4" fill="#d0d0e8" opacity="0.90"/><circle cx="104" cy="691" r="1.4" fill="#e0b0c0" opacity="0.60"/><circle cx="1328" cy="213" r="1.4" fill="#c0b0d8" opacity="0.60"/><circle cx="1053" cy="526" r="2.0" fill="#d0d0e8" opacity="0.60"/><circle cx="711" cy="317" r="1.5" fill="#f0a0b0" opacity="0.60"/><circle cx="582" cy="533" r="1.3" fill="#d0d0e8" opacity="0.90"/><circle cx="1272" cy="923" r="1.4" fill="#e0e0e0" opacity="0.75"/><circle cx="1016" cy="473" r="1.6" fill="#d0d0e8" opacity="0.60"/><circle cx="1632" cy="239" r="1.6" fill="#a0a0e0" opacity="0.75"/><circle cx="1383" cy="775" r="1.1" fill="#e0b0c0" opacity="0.75"/><circle cx="67" cy="729" r="1.8" fill="#e0b0c0" opacity="0.60"/><circle cx="626" cy="689" r="1.1" fill="#a0a0e0" opacity="0.75"/><circle cx="1509" cy="769" r="1.3" fill="#a0a0e0" opacity="0.75"/><circle cx="200" cy="377" r="2.0" fill="#f0a0b0" opacity="0.75"/><circle cx="690" cy="841" r="1.5" fill="#e0b0c0" opacity="0.75"/><circle cx="362" cy="442" r="2.0" fill="#b0c8f0" opacity="0.90"/><circle cx="86" cy="724" r="1.5" fill="#d0d0e8" opacity="0.90"/><circle cx="683" cy="661" r="1.3" fill="#e8c0b0" opacity="0.50"/><circle cx="534" cy="644" r="1.3" fill="#c8a0c8" opacity="0.90"/><circle cx="113" cy="271" r="1.3" fill="#e8c0b0" opacity="0.60"/><circle cx="735" cy="169" r="1.4" fill="#e0b0c0" opacity="0.60"/><circle cx="1081" cy="734" r="1.4" fill="#f0a0b0" opacity="0.75"/><circle cx="1748" cy="229" r="2.0" fill="#e8c0b0" opacity="0.50"/><circle cx="1637" cy="625" r="1.8" fill="#c8a0c8" opacity="0.60"/><circle cx="1283" cy="167" r="1.4" fill="#d0d0e8" opacity="0.75"/><circle cx="1408" cy="208" r="1.8" fill="#f0a0b0" opacity="0.60"/><circle cx="553" cy="211" r="1.5" fill="#e0e0e0" opacity="0.75"/><circle cx="1302" cy="753" r="2.0" fill="#e0e0e0" opacity="0.50"/><circle cx="1275" cy="308" r="1.8" fill="#c0b0d8" opacity="0.60"/><circle cx="933" cy="294" r="1.8" fill="#c0b0d8" opacity="0.75"/><circle cx="359" cy="273" r="2.0" fill="#d0d0e8" opacity="0.75"/><circle cx="496" cy="186" r="1.4" fill="#b0c8f0" opacity="0.90"/><circle cx="209" cy="667" r="1.3" fill="#e0b0c0" opacity="0.90"/><circle cx="1263" cy="335" r="1.3" fill="#c8a0c8" opacity="0.90"/><circle cx="283" cy="671" r="1.8" fill="#e8c0b0" opacity="0.60"/><circle cx="1655" cy="254" r="1.6" fill="#d0d0e8" opacity="0.75"/><circle cx="1189" cy="235" r="1.5" fill="#e0b0c0" opacity="0.60"/><circle cx="1133" cy="521" r="2.0" fill="#f0a0b0" opacity="0.60"/><circle cx="249" cy="378" r="1.4" fill="#e0e0e0" opacity="0.60"/><circle cx="119" cy="884" r="1.4" fill="#d0d0e8" opacity="0.50"/><circle cx="1320" cy="510" r="1.1" fill="#e0b0c0" opacity="0.75"/><circle cx="852" cy="611" r="1.4" fill="#e0b0c0" opacity="0.50"/><circle cx="123" cy="527" r="2.0" fill="#e0e0e0" opacity="0.50"/><circle cx="1404" cy="413" r="1.8" fill="#e8c0b0" opacity="0.50"/><circle cx="1217" cy="935" r="1.5" fill="#d0d0e8" opacity="0.75"/><circle cx="55" cy="904" r="1.8" fill="#e8c0b0" opacity="0.75"/><circle cx="1232" cy="201" r="1.8" fill="#c8a0c8" opacity="0.50"/><circle cx="1453" cy="837" r="1.4" fill="#b0c8f0" opacity="0.60"/><circle cx="1796" cy="575" r="1.8" fill="#e0b0c0" opacity="0.50"/><circle cx="1472" cy="829" r="1.8" fill="#b0c8f0" opacity="0.90"/><circle cx="377" cy="825" r="1.4" fill="#d0d0e8" opacity="0.75"/><circle cx="289" cy="904" r="2.0" fill="#e8c0b0" opacity="0.60"/><circle cx="145" cy="226" r="2.0" fill="#f0a0b0" opacity="0.50"/><circle cx="1765" cy="549" r="1.5" fill="#e0b0c0" opacity="0.75"/><circle cx="1140" cy="659" r="1.3" fill="#d0d0e8" opacity="0.60"/><circle cx="292" cy="668" r="1.5" fill="#a0a0e0" opacity="0.50"/><circle cx="1592" cy="536" r="1.3" fill="#b0c8f0" opacity="0.50"/><circle cx="98" cy="646" r="2.0" fill="#c0b0d8" opacity="0.90"/><circle cx="301" cy="196" r="1.1" fill="#c0b0d8" opacity="0.90"/><circle cx="1665" cy="188" r="1.1" fill="#e0b0c0" opacity="0.60"/><circle cx="731" cy="140" r="2.0" fill="#b0c8f0" opacity="0.60"/><circle cx="896" cy="589" r="1.6" fill="#e0e0e0" opacity="0.90"/><circle cx="1813" cy="895" r="2.0" fill="#e0b0c0" opacity="0.90"/><circle cx="1795" cy="654" r="2.0" fill="#c8a0c8" opacity="0.75"/><circle cx="1152" cy="384" r="1.6" fill="#f0a0b0" opacity="0.75"/><circle cx="917" cy="677" r="1.4" fill="#b0c8f0" opacity="0.50"/><circle cx="1588" cy="322" r="1.8" fill="#e0e0e0" opacity="0.50"/><circle cx="308" cy="620" r="1.6" fill="#f0a0b0" opacity="0.75"/><circle cx="1007" cy="608" r="1.5" fill="#e8c0b0" opacity="0.50"/><circle cx="455" cy="945" r="1.3" fill="#c0b0d8" opacity="0.50"/><circle cx="444" cy="835" r="1.8" fill="#a0a0e0" opacity="0.60"/><circle cx="1009" cy="346" r="1.5" fill="#d0d0e8" opacity="0.90"/><circle cx="453" cy="614" r="1.1" fill="#c0b0d8" opacity="0.50"/><circle cx="1594" cy="703" r="2.0" fill="#e0e0e0" opacity="0.60"/><circle cx="1616" cy="596" r="1.8" fill="#a0a0e0" opacity="0.50"/><circle cx="879" cy="709" r="1.6" fill="#e0b0c0" opacity="0.60"/><circle cx="1068" cy="783" r="1.3" fill="#b0c8f0" opacity="0.50"/><circle cx="778" cy="175" r="1.1" fill="#c8a0c8" opacity="0.60"/><circle cx="879" cy="237" r="1.3" fill="#f0a0b0" opacity="0.50"/><circle cx="1174" cy="864" r="1.6" fill="#a0a0e0" opacity="0.75"/><circle cx="347" cy="758" r="1.4" fill="#c8a0c8" opacity="0.75"/><circle cx="264" cy="447" r="1.8" fill="#c0b0d8" opacity="0.75"/><circle cx="1357" cy="172" r="1.6" fill="#b0c8f0" opacity="0.50"/><circle cx="689" cy="409" r="1.6" fill="#a0a0e0" opacity="0.50"/><circle cx="1729" cy="700" r="1.4" fill="#b0c8f0" opacity="0.60"/><circle cx="1306" cy="154" r="1.6" fill="#e0e0e0" opacity="0.50"/><circle cx="1484" cy="544" r="1.1" fill="#e8c0b0" opacity="0.60"/><circle cx="314" cy="913" r="2.0" fill="#f0a0b0" opacity="0.60"/><circle cx="1114" cy="345" r="1.8" fill="#e8c0b0" opacity="0.90"/><circle cx="65" cy="422" r="1.3" fill="#e0e0e0" opacity="0.90"/><circle cx="1633" cy="804" r="1.1" fill="#a0a0e0" opacity="0.60"/><circle cx="1172" cy="674" r="1.6" fill="#f0a0b0" opacity="0.90"/><circle cx="1806" cy="715" r="1.5" fill="#f0a0b0" opacity="0.60"/><circle cx="1633" cy="646" r="1.1" fill="#b0c8f0" opacity="0.75"/><circle cx="1004" cy="396" r="1.3" fill="#c8a0c8" opacity="0.60"/><circle cx="350" cy="437" r="1.5" fill="#b0c8f0" opacity="0.90"/><circle cx="748" cy="431" r="1.1" fill="#b0c8f0" opacity="0.90"/><circle cx="649" cy="153" r="1.5" fill="#c8a0c8" opacity="0.60"/><circle cx="1367" cy="256" r="1.5" fill="#e8c0b0" opacity="0.50"/><circle cx="953" cy="355" r="1.6" fill="#c0b0d8" opacity="0.60"/><circle cx="1851" cy="164" r="1.6" fill="#a0a0e0" opacity="0.60"/><circle cx="1453" cy="665" r="1.8" fill="#a0a0e0" opacity="0.75"/><circle cx="1485" cy="798" r="1.3" fill="#e0b0c0" opacity="0.50"/><circle cx="595" cy="773" r="1.8" fill="#b0c8f0" opacity="0.60"/><circle cx="680" cy="596" r="1.5" fill="#b0c8f0" opacity="0.50"/><circle cx="1325" cy="697" r="2.0" fill="#e0e0e0" opacity="0.75"/><circle cx="1672" cy="812" r="1.4" fill="#e0b0c0" opacity="0.60"/><circle cx="415" cy="878" r="1.8" fill="#e0e0e0" opacity="0.90"/><circle cx="853" cy="611" r="1.4" fill="#e0b0c0" opacity="0.50"/><circle cx="302" cy="737" r="1.4" fill="#c0b0d8" opacity="0.75"/><circle cx="174" cy="295" r="1.1" fill="#e0b0c0" opacity="0.75"/><circle cx="1099" cy="961" r="1.4" fill="#f0a0b0" opacity="0.50"/><circle cx="1570" cy="403" r="1.3" fill="#e8c0b0" opacity="0.75"/><circle cx="1037" cy="769" r="1.8" fill="#e8c0b0" opacity="0.60"/><circle cx="1326" cy="318" r="1.5" fill="#e0e0e0" opacity="0.60"/><circle cx="1669" cy="372" r="1.6" fill="#a0a0e0" opacity="0.60"/><circle cx="481" cy="183" r="1.3" fill="#c8a0c8" opacity="0.50"/><circle cx="174" cy="818" r="1.6" fill="#b0c8f0" opacity="0.60"/><circle cx="49" cy="362" r="1.8" fill="#c8a0c8" opacity="0.75"/><circle cx="1724" cy="313" r="1.4" fill="#c8a0c8" opacity="0.90"/><circle cx="780" cy="703" r="1.4" fill="#e0b0c0" opacity="0.50"/><circle cx="1616" cy="801" r="1.1" fill="#b0c8f0" opacity="0.90"/><circle cx="1843" cy="470" r="1.5" fill="#c8a0c8" opacity="0.50"/><circle cx="1729" cy="607" r="1.4" fill="#c8a0c8" opacity="0.90"/><circle cx="1160" cy="741" r="1.4" fill="#e0b0c0" opacity="0.50"/><circle cx="74" cy="312" r="1.6" fill="#a0a0e0" opacity="0.75"/><circle cx="1526" cy="489" r="1.6" fill="#c0b0d8" opacity="0.60"/><circle cx="1240" cy="638" r="1.4" fill="#d0d0e8" opacity="0.75"/><circle cx="1525" cy="535" r="1.1" fill="#e8c0b0" opacity="0.90"/><circle cx="1061" cy="438" r="1.6" fill="#e8c0b0" opacity="0.60"/><circle cx="502" cy="602" r="1.1" fill="#b0c8f0" opacity="0.60"/><circle cx="1846" cy="327" r="2.0" fill="#a0a0e0" opacity="0.50"/><circle cx="1180" cy="238" r="1.6" fill="#c0b0d8" opacity="0.60"/><circle cx="1053" cy="288" r="1.6" fill="#b0c8f0" opacity="0.60"/><circle cx="1688" cy="863" r="2.0" fill="#e0b0c0" opacity="0.50"/><circle cx="680" cy="729" r="1.5" fill="#e0e0e0" opacity="0.60"/><circle cx="1201" cy="423" r="2.0" fill="#f0a0b0" opacity="0.90"/><circle cx="427" cy="795" r="1.1" fill="#a0a0e0" opacity="0.50"/><circle cx="159" cy="675" r="1.5" fill="#b0c8f0" opacity="0.50"/><circle cx="456" cy="450" r="1.5" fill="#d0d0e8" opacity="0.50"/><circle cx="500" cy="355" r="1.5" fill="#d0d0e8" opacity="0.60"/><circle cx="687" cy="408" r="1.5" fill="#e8c0b0" opacity="0.75"/><circle cx="1645" cy="552" r="1.6" fill="#e0b0c0" opacity="0.90"/><circle cx="1615" cy="862" r="1.4" fill="#e0b0c0" opacity="0.75"/><circle cx="556" cy="413" r="1.5" fill="#d0d0e8" opacity="0.60"/><circle cx="624" cy="646" r="1.5" fill="#d0d0e8" opacity="0.50"/><circle cx="1651" cy="311" r="1.8" fill="#b0c8f0" opacity="0.50"/><circle cx="1463" cy="857" r="1.3" fill="#f0a0b0" opacity="0.60"/><circle cx="1856" cy="384" r="1.1" fill="#a0a0e0" opacity="0.60"/><circle cx="1818" cy="144" r="1.4" fill="#e0b0c0" opacity="0.75"/><circle cx="218" cy="277" r="1.8" fill="#f0a0b0" opacity="0.50"/><circle cx="796" cy="672" r="1.8" fill="#f0a0b0" opacity="0.75"/><circle cx="1828" cy="163" r="1.3" fill="#d0d0e8" opacity="0.50"/><circle cx="109" cy="557" r="1.3" fill="#f0a0b0" opacity="0.50"/><circle cx="1370" cy="176" r="1.4" fill="#a0a0e0" opacity="0.50"/><circle cx="260" cy="543" r="1.3" fill="#c0b0d8" opacity="0.90"/><circle cx="45" cy="323" r="1.6" fill="#e0b0c0" opacity="0.50"/><circle cx="1007" cy="837" r="1.1" fill="#b0c8f0" opacity="0.60"/><circle cx="1597" cy="948" r="1.3" fill="#a0a0e0" opacity="0.75"/><circle cx="1324" cy="149" r="1.4" fill="#a0a0e0" opacity="0.50"/><circle cx="399" cy="176" r="2.0" fill="#c0b0d8" opacity="0.75"/><circle cx="528" cy="408" r="1.1" fill="#e0e0e0" opacity="0.75"/><circle cx="1042" cy="712" r="2.0" fill="#e8c0b0" opacity="0.90"/><circle cx="810" cy="587" r="1.5" fill="#e0b0c0" opacity="0.90"/><circle cx="1429" cy="872" r="2.0" fill="#e0b0c0" opacity="0.50"/><circle cx="476" cy="554" r="1.4" fill="#f0a0b0" opacity="0.60"/><circle cx="1547" cy="690" r="1.1" fill="#c8a0c8" opacity="0.50"/><circle cx="781" cy="602" r="1.8" fill="#e0e0e0" opacity="0.75"/><circle cx="871" cy="618" r="1.5" fill="#e0e0e0" opacity="0.75"/><circle cx="1121" cy="967" r="1.3" fill="#f0a0b0" opacity="0.75"/><circle cx="1340" cy="465" r="1.6" fill="#e8c0b0" opacity="0.75"/><circle cx="171" cy="802" r="1.8" fill="#d0d0e8" opacity="0.75"/><circle cx="519" cy="838" r="2.0" fill="#b0c8f0" opacity="0.90"/><circle cx="1082" cy="971" r="1.1" fill="#c0b0d8" opacity="0.75"/><circle cx="996" cy="576" r="2.0" fill="#b0c8f0" opacity="0.60"/><circle cx="1269" cy="263" r="1.8" fill="#e0e0e0" opacity="0.60"/><circle cx="1209" cy="827" r="1.8" fill="#c8a0c8" opacity="0.75"/><circle cx="736" cy="831" r="2.0" fill="#f0a0b0" opacity="0.50"/><circle cx="788" cy="723" r="1.5" fill="#a0a0e0" opacity="0.75"/><circle cx="691" cy="807" r="1.6" fill="#e8c0b0" opacity="0.90"/><circle cx="1249" cy="366" r="1.4" fill="#e0e0e0" opacity="0.50"/><circle cx="860" cy="535" r="2.0" fill="#e0b0c0" opacity="0.60"/><circle cx="51" cy="245" r="1.5" fill="#c0b0d8" opacity="0.60"/><circle cx="1177" cy="573" r="2.0" fill="#f0a0b0" opacity="0.75"/><circle cx="72" cy="304" r="1.6" fill="#e8c0b0" opacity="0.50"/><circle cx="1118" cy="392" r="1.6" fill="#e8c0b0" opacity="0.75"/><circle cx="507" cy="358" r="1.5" fill="#a0a0e0" opacity="0.90"/><circle cx="1607" cy="304" r="1.5" fill="#e8c0b0" opacity="0.75"/><circle cx="1720" cy="735" r="1.5" fill="#b0c8f0" opacity="0.50"/><circle cx="1340" cy="383" r="1.5" fill="#f0a0b0" opacity="0.75"/><circle cx="683" cy="458" r="1.6" fill="#e0b0c0" opacity="0.60"/><circle cx="1824" cy="847" r="1.6" fill="#b0c8f0" opacity="0.50"/><circle cx="1255" cy="411" r="1.1" fill="#a0a0e0" opacity="0.90"/><circle cx="732" cy="575" r="1.5" fill="#c8a0c8" opacity="0.50"/><circle cx="1122" cy="522" r="1.5" fill="#f0a0b0" opacity="0.90"/><circle cx="1856" cy="283" r="1.1" fill="#e0e0e0" opacity="0.90"/><circle cx="937" cy="563" r="2.0" fill="#c8a0c8" opacity="0.60"/><circle cx="1391" cy="471" r="1.1" fill="#e8c0b0" opacity="0.75"/><circle cx="1444" cy="779" r="1.1" fill="#a0a0e0" opacity="0.60"/><circle cx="1587" cy="613" r="1.1" fill="#a0a0e0" opacity="0.90"/><circle cx="201" cy="765" r="1.6" fill="#e0e0e0" opacity="0.50"/><circle cx="1544" cy="303" r="1.4" fill="#e0e0e0" opacity="0.50"/><circle cx="1044" cy="761" r="2.0" fill="#e0b0c0" opacity="0.90"/><circle cx="1531" cy="864" r="1.3" fill="#b0c8f0" opacity="0.75"/><circle cx="387" cy="956" r="1.3" fill="#c0b0d8" opacity="0.75"/><circle cx="989" cy="208" r="1.5" fill="#e8c0b0" opacity="0.75"/><circle cx="1054" cy="563" r="1.5" fill="#c8a0c8" opacity="0.75"/><circle cx="596" cy="860" r="2.0" fill="#f0a0b0" opacity="0.75"/><circle cx="597" cy="246" r="1.3" fill="#c0b0d8" opacity="0.75"/><circle cx="1742" cy="684" r="1.8" fill="#e0b0c0" opacity="0.75"/><circle cx="1738" cy="421" r="1.5" fill="#c0b0d8" opacity="0.50"/><circle cx="1371" cy="143" r="1.1" fill="#f0a0b0" opacity="0.75"/><circle cx="104" cy="319" r="1.5" fill="#e8c0b0" opacity="0.60"/><circle cx="1337" cy="806" r="1.6" fill="#e0e0e0" opacity="0.90"/><circle cx="1746" cy="507" r="1.3" fill="#c8a0c8" opacity="0.60"/><circle cx="832" cy="670" r="1.1" fill="#e0b0c0" opacity="0.50"/><circle cx="1526" cy="551" r="1.1" fill="#c0b0d8" opacity="0.60"/><circle cx="949" cy="699" r="1.8" fill="#e8c0b0" opacity="0.60"/><circle cx="1015" cy="269" r="2.0" fill="#d0d0e8" opacity="0.50"/><circle cx="890" cy="304" r="1.1" fill="#c8a0c8" opacity="0.90"/><circle cx="448" cy="832" r="1.8" fill="#e0e0e0" opacity="0.90"/><circle cx="323" cy="183" r="1.8" fill="#e0b0c0" opacity="0.50"/><circle cx="332" cy="509" r="2.0" fill="#d0d0e8" opacity="0.75"/><circle cx="1330" cy="737" r="1.4" fill="#e8c0b0" opacity="0.75"/><circle cx="1041" cy="315" r="2.0" fill="#d0d0e8" opacity="0.90"/><circle cx="1818" cy="410" r="1.3" fill="#e8c0b0" opacity="0.60"/><circle cx="1235" cy="716" r="1.3" fill="#e0e0e0" opacity="0.60"/><circle cx="1369" cy="495" r="1.8" fill="#f0a0b0" opacity="0.50"/><circle cx="111" cy="430" r="1.8" fill="#d0d0e8" opacity="0.50"/><circle cx="571" cy="427" r="2.0" fill="#e0e0e0" opacity="0.50"/><circle cx="406" cy="370" r="1.4" fill="#c0b0d8" opacity="0.50"/><circle cx="407" cy="529" r="2.0" fill="#d0d0e8" opacity="0.75"/><circle cx="99" cy="636" r="1.1" fill="#b0c8f0" opacity="0.60"/><circle cx="1764" cy="684" r="1.1" fill="#e0b0c0" opacity="0.75"/><circle cx="679" cy="538" r="1.4" fill="#b0c8f0" opacity="0.60"/><circle cx="240" cy="831" r="2.0" fill="#a0a0e0" opacity="0.90"/><circle cx="215" cy="597" r="2.0" fill="#e0b0c0" opacity="0.90"/><circle cx="882" cy="164" r="1.6" fill="#a0a0e0" opacity="0.90"/><circle cx="1220" cy="246" r="1.6" fill="#b0c8f0" opacity="0.50"/><circle cx="724" cy="690" r="1.3" fill="#b0c8f0" opacity="0.60"/><circle cx="1250" cy="211" r="1.1" fill="#e0e0e0" opacity="0.75"/><circle cx="312" cy="215" r="1.3" fill="#a0a0e0" opacity="0.60"/><circle cx="945" cy="584" r="1.1" fill="#b0c8f0" opacity="0.90"/><circle cx="489" cy="611" r="1.1" fill="#c0b0d8" opacity="0.75"/><circle cx="710" cy="301" r="1.5" fill="#c0b0d8" opacity="0.60"/><circle cx="1843" cy="895" r="1.8" fill="#c0b0d8" opacity="0.60"/><circle cx="1665" cy="149" r="1.1" fill="#e0e0e0" opacity="0.60"/><circle cx="1297" cy="327" r="2.0" fill="#e0b0c0" opacity="0.60"/><circle cx="1575" cy="969" r="1.5" fill="#f0a0b0" opacity="0.50"/><circle cx="573" cy="880" r="1.1" fill="#d0d0e8" opacity="0.60"/><circle cx="484" cy="783" r="1.6" fill="#c8a0c8" opacity="0.60"/><circle cx="173" cy="418" r="1.1" fill="#c8a0c8" opacity="0.60"/><circle cx="1168" cy="714" r="2.0" fill="#e8c0b0" opacity="0.75"/><circle cx="193" cy="770" r="1.6" fill="#e0b0c0" opacity="0.50"/><circle cx="619" cy="914" r="2.0" fill="#f0a0b0" opacity="0.50"/><circle cx="201" cy="340" r="1.8" fill="#c0b0d8" opacity="0.60"/><circle cx="316" cy="424" r="1.3" fill="#d0d0e8" opacity="0.60"/><circle cx="1728" cy="709" r="1.8" fill="#a0a0e0" opacity="0.50"/><circle cx="1485" cy="537" r="1.5" fill="#c0b0d8" opacity="0.75"/><circle cx="1697" cy="763" r="1.8" fill="#a0a0e0" opacity="0.60"/><circle cx="1622" cy="178" r="1.4" fill="#f0a0b0" opacity="0.50"/><circle cx="1228" cy="947" r="1.6" fill="#e0b0c0" opacity="0.90"/><circle cx="1268" cy="759" r="1.3" fill="#e8c0b0" opacity="0.75"/><circle cx="1691" cy="758" r="2.0" fill="#e0b0c0" opacity="0.90"/><circle cx="744" cy="670" r="2.0" fill="#c0b0d8" opacity="0.75"/><circle cx="1405" cy="632" r="1.8" fill="#a0a0e0" opacity="0.50"/><circle cx="1807" cy="794" r="1.4" fill="#d0d0e8" opacity="0.60"/><circle cx="401" cy="518" r="1.3" fill="#e0e0e0" opacity="0.50"/><circle cx="755" cy="791" r="2.0" fill="#b0c8f0" opacity="0.90"/><circle cx="781" cy="209" r="1.8" fill="#b0c8f0" opacity="0.90"/><circle cx="1487" cy="140" r="1.5" fill="#c8a0c8" opacity="0.50"/><circle cx="1643" cy="533" r="1.5" fill="#e8c0b0" opacity="0.90"/><circle cx="306" cy="591" r="1.1" fill="#b0c8f0" opacity="0.90"/><circle cx="1581" cy="653" r="1.4" fill="#b0c8f0" opacity="0.50"/><circle cx="1851" cy="292" r="1.5" fill="#f0a0b0" opacity="0.60"/><circle cx="260" cy="706" r="1.1" fill="#f0a0b0" opacity="0.60"/><circle cx="751" cy="414" r="1.3" fill="#b0c8f0" opacity="0.60"/><circle cx="449" cy="879" r="1.6" fill="#f0a0b0" opacity="0.75"/><circle cx="952" cy="934" r="1.6" fill="#d0d0e8" opacity="0.60"/><circle cx="753" cy="144" r="2.0" fill="#e0b0c0" opacity="0.50"/><circle cx="1765" cy="516" r="2.0" fill="#e8c0b0" opacity="0.75"/><circle cx="1274" cy="958" r="1.8" fill="#c0b0d8" opacity="0.90"/><circle cx="286" cy="765" r="1.4" fill="#f0a0b0" opacity="0.50"/><circle cx="979" cy="412" r="1.4" fill="#e8c0b0" opacity="0.75"/><circle cx="597" cy="728" r="1.8" fill="#f0a0b0" opacity="0.50"/><circle cx="1696" cy="552" r="1.4" fill="#c8a0c8" opacity="0.50"/><circle cx="1637" cy="878" r="1.1" fill="#c0b0d8" opacity="0.90"/><circle cx="857" cy="763" r="1.3" fill="#e0e0e0" opacity="0.50"/><circle cx="1771" cy="539" r="1.1" fill="#e8c0b0" opacity="0.60"/><circle cx="382" cy="903" r="1.6" fill="#c8a0c8" opacity="0.90"/><circle cx="357" cy="628" r="1.4" fill="#d0d0e8" opacity="0.75"/><circle cx="1450" cy="158" r="1.6" fill="#f0a0b0" opacity="0.50"/><circle cx="1509" cy="701" r="1.5" fill="#e0e0e0" opacity="0.75"/><circle cx="1301" cy="368" r="1.3" fill="#e0e0e0" opacity="0.50"/><circle cx="1488" cy="426" r="1.3" fill="#d0d0e8" opacity="0.50"/><circle cx="336" cy="753" r="1.3" fill="#e8c0b0" opacity="0.50"/><circle cx="1112" cy="947" r="2.0" fill="#b0c8f0" opacity="0.60"/><circle cx="537" cy="880" r="1.5" fill="#d0d0e8" opacity="0.75"/><circle cx="1734" cy="473" r="1.8" fill="#e8c0b0" opacity="0.75"/><circle cx="759" cy="458" r="1.5" fill="#e8c0b0" opacity="0.50"/><circle cx="412" cy="895" r="1.5" fill="#c0b0d8" opacity="0.90"/><circle cx="1203" cy="786" r="1.4" fill="#c8a0c8" opacity="0.60"/><circle cx="549" cy="583" r="1.8" fill="#c0b0d8" opacity="0.90"/><circle cx="1414" cy="366" r="1.4" fill="#f0a0b0" opacity="0.75"/><circle cx="1594" cy="237" r="1.5" fill="#c8a0c8" opacity="0.50"/><circle cx="1011" cy="719" r="1.4" fill="#b0c8f0" opacity="0.75"/><circle cx="525" cy="339" r="1.1" fill="#c0b0d8" opacity="0.50"/><circle cx="1416" cy="702" r="1.5" fill="#a0a0e0" opacity="0.75"/><circle cx="343" cy="283" r="1.8" fill="#a0a0e0" opacity="0.90"/><circle cx="760" cy="921" r="1.8" fill="#b0c8f0" opacity="0.90"/><circle cx="756" cy="809" r="1.4" fill="#e0b0c0" opacity="0.60"/><circle cx="1011" cy="571" r="1.8" fill="#e8c0b0" opacity="0.60"/><circle cx="429" cy="705" r="1.5" fill="#a0a0e0" opacity="0.50"/><circle cx="1595" cy="694" r="1.6" fill="#f0a0b0" opacity="0.90"/><circle cx="430" cy="745" r="2.0" fill="#e0b0c0" opacity="0.60"/><circle cx="445" cy="845" r="1.3" fill="#c0b0d8" opacity="0.50"/><circle cx="1679" cy="887" r="1.8" fill="#f0a0b0" opacity="0.75"/><circle cx="280" cy="724" r="1.8" fill="#f0a0b0" opacity="0.75"/><circle cx="1339" cy="780" r="1.6" fill="#c0b0d8" opacity="0.75"/><circle cx="1149" cy="891" r="1.4" fill="#a0a0e0" opacity="0.75"/><circle cx="1274" cy="950" r="2.0" fill="#a0a0e0" opacity="0.75"/><circle cx="83" cy="568" r="1.1" fill="#b0c8f0" opacity="0.60"/><circle cx="46" cy="661" r="1.3" fill="#e0e0e0" opacity="0.75"/><circle cx="959" cy="952" r="1.6" fill="#c0b0d8" opacity="0.50"/><circle cx="112" cy="827" r="1.1" fill="#e0e0e0" opacity="0.60"/><circle cx="577" cy="918" r="1.4" fill="#c0b0d8" opacity="0.60"/><circle cx="438" cy="799" r="1.3" fill="#e8c0b0" opacity="0.50"/><circle cx="447" cy="280" r="2.0" fill="#c0b0d8" opacity="0.75"/><circle cx="814" cy="189" r="1.8" fill="#e8c0b0" opacity="0.50"/><circle cx="1107" cy="470" r="1.6" fill="#f0a0b0" opacity="0.60"/><circle cx="1257" cy="872" r="1.1" fill="#b0c8f0" opacity="0.75"/><circle cx="1241" cy="346" r="1.8" fill="#e0e0e0" opacity="0.60"/><circle cx="827" cy="945" r="1.8" fill="#e0e0e0" opacity="0.60"/><circle cx="664" cy="295" r="1.5" fill="#e0b0c0" opacity="0.75"/><circle cx="1426" cy="200" r="1.6" fill="#c8a0c8" opacity="0.90"/><circle cx="1459" cy="796" r="1.8" fill="#d0d0e8" opacity="0.75"/><circle cx="407" cy="767" r="2.0" fill="#e8c0b0" opacity="0.50"/><circle cx="1719" cy="739" r="1.8" fill="#c8a0c8" opacity="0.50"/><circle cx="686" cy="485" r="2.0" fill="#c0b0d8" opacity="0.75"/><circle cx="1058" cy="660" r="1.6" fill="#b0c8f0" opacity="0.75"/><circle cx="598" cy="173" r="1.3" fill="#b0c8f0" opacity="0.90"/><circle cx="1681" cy="808" r="1.5" fill="#a0a0e0" opacity="0.75"/><circle cx="235" cy="264" r="2.0" fill="#e0e0e0" opacity="0.90"/><circle cx="1848" cy="897" r="2.0" fill="#b0c8f0" opacity="0.90"/><circle cx="1678" cy="951" r="2.0" fill="#a0a0e0" opacity="0.75"/><circle cx="967" cy="311" r="1.4" fill="#c8a0c8" opacity="0.60"/><circle cx="1336" cy="925" r="1.6" fill="#f0a0b0" opacity="0.90"/><circle cx="334" cy="884" r="1.5" fill="#e0b0c0" opacity="0.60"/><circle cx="63" cy="315" r="1.6" fill="#c0b0d8" opacity="0.90"/><circle cx="90" cy="815" r="2.0" fill="#a0a0e0" opacity="0.90"/><circle cx="1464" cy="306" r="1.6" fill="#c0b0d8" opacity="0.50"/><circle cx="1607" cy="419" r="1.6" fill="#e0e0e0" opacity="0.90"/><circle cx="1443" cy="891" r="1.1" fill="#d0d0e8" opacity="0.60"/><circle cx="1693" cy="455" r="1.1" fill="#a0a0e0" opacity="0.60"/><circle cx="1764" cy="503" r="1.6" fill="#e0e0e0" opacity="0.50"/><circle cx="1081" cy="737" r="2.0" fill="#e0e0e0" opacity="0.60"/><circle cx="770" cy="698" r="1.8" fill="#d0d0e8" opacity="0.90"/><circle cx="1303" cy="530" r="1.3" fill="#a0a0e0" opacity="0.90"/><circle cx="1133" cy="188" r="1.3" fill="#d0d0e8" opacity="0.50"/><circle cx="756" cy="794" r="2.0" fill="#d0d0e8" opacity="0.50"/><circle cx="483" cy="894" r="1.3" fill="#c8a0c8" opacity="0.50"/><circle cx="891" cy="472" r="1.3" fill="#c8a0c8" opacity="0.90"/><circle cx="520" cy="264" r="1.1" fill="#e0e0e0" opacity="0.50"/><circle cx="1426" cy="873" r="1.1" fill="#e0b0c0" opacity="0.60"/><circle cx="1513" cy="272" r="1.6" fill="#b0c8f0" opacity="0.50"/><circle cx="970" cy="935" r="1.5" fill="#c8a0c8" opacity="0.50"/><circle cx="1594" cy="600" r="2.0" fill="#a0a0e0" opacity="0.50"/><circle cx="1328" cy="688" r="1.6" fill="#e8c0b0" opacity="0.90"/><circle cx="764" cy="142" r="1.8" fill="#d0d0e8" opacity="0.50"/><circle cx="382" cy="559" r="2.0" fill="#e0e0e0" opacity="0.60"/><circle cx="263" cy="679" r="1.3" fill="#f0a0b0" opacity="0.50"/><circle cx="1158" cy="208" r="1.6" fill="#b0c8f0" opacity="0.50"/><circle cx="200" cy="336" r="2.0" fill="#a0a0e0" opacity="0.50"/><circle cx="711" cy="389" r="2.0" fill="#e8c0b0" opacity="0.60"/><circle cx="942" cy="617" r="1.4" fill="#d0d0e8" opacity="0.50"/><circle cx="184" cy="172" r="1.8" fill="#d0d0e8" opacity="0.90"/><circle cx="872" cy="476" r="1.6" fill="#d0d0e8" opacity="0.50"/><circle cx="1706" cy="835" r="1.8" fill="#c8a0c8" opacity="0.60"/><circle cx="1591" cy="496" r="1.1" fill="#e0b0c0" opacity="0.75"/><circle cx="846" cy="726" r="1.4" fill="#e8c0b0" opacity="0.75"/><circle cx="92" cy="455" r="1.3" fill="#e0e0e0" opacity="0.60"/><circle cx="1830" cy="682" r="1.5" fill="#b0c8f0" opacity="0.75"/><circle cx="1507" cy="147" r="1.6" fill="#c8a0c8" opacity="0.75"/><circle cx="461" cy="876" r="2.0" fill="#b0c8f0" opacity="0.50"/><circle cx="1446" cy="783" r="1.4" fill="#a0a0e0" opacity="0.60"/><circle cx="231" cy="825" r="1.4" fill="#f0a0b0" opacity="0.75"/><circle cx="710" cy="585" r="1.5" fill="#e0b0c0" opacity="0.60"/><circle cx="1009" cy="679" r="1.6" fill="#d0d0e8" opacity="0.90"/><circle cx="1740" cy="569" r="2.0" fill="#a0a0e0" opacity="0.60"/><circle cx="438" cy="766" r="1.1" fill="#e8c0b0" opacity="0.90"/><circle cx="1346" cy="962" r="1.3" fill="#e0e0e0" opacity="0.60"/><circle cx="1300" cy="759" r="2.0" fill="#f0a0b0" opacity="0.60"/><circle cx="664" cy="938" r="1.1" fill="#d0d0e8" opacity="0.75"/><circle cx="1168" cy="684" r="1.8" fill="#e0b0c0" opacity="0.50"/><circle cx="1131" cy="716" r="1.4" fill="#a0a0e0" opacity="0.50"/><circle cx="1372" cy="583" r="1.1" fill="#b0c8f0" opacity="0.50"/><circle cx="300" cy="230" r="1.5" fill="#c0b0d8" opacity="0.75"/><circle cx="1720" cy="512" r="1.1" fill="#e8c0b0" opacity="0.75"/><circle cx="760" cy="718" r="1.3" fill="#e0e0e0" opacity="0.50"/><circle cx="1612" cy="521" r="1.4" fill="#d0d0e8" opacity="0.50"/><circle cx="748" cy="791" r="1.1" fill="#d0d0e8" opacity="0.75"/><circle cx="1264" cy="368" r="1.1" fill="#d0d0e8" opacity="0.50"/><circle cx="1691" cy="268" r="1.8" fill="#e8c0b0" opacity="0.75"/><circle cx="370" cy="256" r="1.1" fill="#c8a0c8" opacity="0.90"/><circle cx="503" cy="210" r="1.6" fill="#d0d0e8" opacity="0.50"/><circle cx="158" cy="148" r="2.0" fill="#e0b0c0" opacity="0.75"/><circle cx="704" cy="739" r="1.3" fill="#b0c8f0" opacity="0.75"/><circle cx="716" cy="275" r="1.8" fill="#a0a0e0" opacity="0.60"/><circle cx="1699" cy="274" r="2.0" fill="#f0a0b0" opacity="0.50"/><circle cx="449" cy="298" r="1.3" fill="#f0a0b0" opacity="0.75"/><circle cx="480" cy="882" r="1.4" fill="#c8a0c8" opacity="0.50"/><circle cx="222" cy="451" r="1.4" fill="#d0d0e8" opacity="0.75"/><circle cx="94" cy="502" r="1.1" fill="#a0a0e0" opacity="0.90"/><circle cx="1053" cy="547" r="1.5" fill="#a0a0e0" opacity="0.90"/><circle cx="915" cy="281" r="1.3" fill="#f0a0b0" opacity="0.90"/><circle cx="151" cy="295" r="1.4" fill="#b0c8f0" opacity="0.90"/><circle cx="896" cy="918" r="1.6" fill="#c8a0c8" opacity="0.50"/><circle cx="969" cy="540" r="1.3" fill="#f0a0b0" opacity="0.50"/><circle cx="149" cy="497" r="1.1" fill="#d0d0e8" opacity="0.60"/><circle cx="972" cy="400" r="1.1" fill="#a0a0e0" opacity="0.90"/><circle cx="524" cy="908" r="1.5" fill="#e0b0c0" opacity="0.50"/><circle cx="1512" cy="663" r="1.1" fill="#d0d0e8" opacity="0.75"/><circle cx="1250" cy="438" r="1.1" fill="#e0e0e0" opacity="0.90"/><circle cx="510" cy="561" r="1.8" fill="#c0b0d8" opacity="0.50"/><circle cx="1215" cy="710" r="1.1" fill="#c0b0d8" opacity="0.60"/><circle cx="1450" cy="691" r="1.3" fill="#b0c8f0" opacity="0.60"/><circle cx="747" cy="877" r="1.4" fill="#c8a0c8" opacity="0.75"/><circle cx="1238" cy="679" r="1.8" fill="#d0d0e8" opacity="0.50"/><circle cx="1131" cy="889" r="1.1" fill="#e0e0e0" opacity="0.60"/><circle cx="1591" cy="374" r="1.3" fill="#d0d0e8" opacity="0.75"/><circle cx="1407" cy="623" r="1.1" fill="#f0a0b0" opacity="0.50"/><circle cx="1279" cy="147" r="1.5" fill="#d0d0e8" opacity="0.50"/><circle cx="911" cy="563" r="1.8" fill="#e0e0e0" opacity="0.60"/><circle cx="1174" cy="317" r="2.0" fill="#e0e0e0" opacity="0.60"/><circle cx="606" cy="791" r="1.4" fill="#d0d0e8" opacity="0.75"/><circle cx="98" cy="284" r="1.5" fill="#c8a0c8" opacity="0.75"/><circle cx="1445" cy="335" r="2.0" fill="#c8a0c8" opacity="0.60"/><circle cx="1149" cy="351" r="1.5" fill="#e0e0e0" opacity="0.90"/><circle cx="291" cy="337" r="1.1" fill="#e8c0b0" opacity="0.90"/><circle cx="312" cy="250" r="1.6" fill="#e0b0c0" opacity="0.75"/><circle cx="1658" cy="184" r="1.3" fill="#f0a0b0" opacity="0.60"/><circle cx="186" cy="820" r="2.0" fill="#f0a0b0" opacity="0.75"/><circle cx="1661" cy="689" r="2.0" fill="#e0b0c0" opacity="0.75"/><circle cx="1806" cy="731" r="1.1" fill="#c8a0c8" opacity="0.90"/><circle cx="1709" cy="223" r="1.1" fill="#e8c0b0" opacity="0.50"/><circle cx="567" cy="943" r="2.0" fill="#e0b0c0" opacity="0.90"/><circle cx="174" cy="451" r="1.4" fill="#c0b0d8" opacity="0.50"/><circle cx="854" cy="553" r="1.6" fill="#b0c8f0" opacity="0.60"/><circle cx="836" cy="630" r="1.4" fill="#f0a0b0" opacity="0.60"/><circle cx="1608" cy="935" r="1.8" fill="#d0d0e8" opacity="0.90"/><circle cx="708" cy="573" r="1.8" fill="#a0a0e0" opacity="0.50"/><circle cx="1179" cy="530" r="1.8" fill="#b0c8f0" opacity="0.50"/><circle cx="852" cy="420" r="2.0" fill="#e0b0c0" opacity="0.90"/><circle cx="1789" cy="792" r="1.3" fill="#f0a0b0" opacity="0.50"/><circle cx="1788" cy="309" r="1.5" fill="#f0a0b0" opacity="0.60"/><circle cx="1683" cy="330" r="1.8" fill="#b0c8f0" opacity="0.90"/><circle cx="1251" cy="776" r="1.3" fill="#d0d0e8" opacity="0.60"/><circle cx="1644" cy="230" r="1.6" fill="#e0b0c0" opacity="0.90"/><circle cx="1164" cy="676" r="1.5" fill="#e0e0e0" opacity="0.75"/><circle cx="1093" cy="433" r="1.8" fill="#f0a0b0" opacity="0.75"/><circle cx="360" cy="538" r="1.1" fill="#e0b0c0" opacity="0.90"/><circle cx="715" cy="940" r="2.0" fill="#e8c0b0" opacity="0.60"/><circle cx="1198" cy="725" r="2.0" fill="#d0d0e8" opacity="0.75"/><circle cx="1438" cy="387" r="1.4" fill="#e0b0c0" opacity="0.50"/><circle cx="1137" cy="845" r="2.0" fill="#c8a0c8" opacity="0.60"/><circle cx="1677" cy="633" r="1.5" fill="#c0b0d8" opacity="0.75"/><circle cx="93" cy="803" r="2.0" fill="#e0b0c0" opacity="0.50"/><circle cx="1310" cy="139" r="1.3" fill="#e0b0c0" opacity="0.75"/><circle cx="1684" cy="792" r="1.3" fill="#c8a0c8" opacity="0.50"/><circle cx="248" cy="916" r="1.3" fill="#e0b0c0" opacity="0.90"/><circle cx="652" cy="572" r="1.4" fill="#e8c0b0" opacity="0.90"/><circle cx="1404" cy="866" r="1.4" fill="#c8a0c8" opacity="0.50"/><circle cx="522" cy="358" r="1.1" fill="#c8a0c8" opacity="0.75"/><circle cx="280" cy="861" r="1.4" fill="#b0c8f0" opacity="0.90"/><circle cx="297" cy="641" r="1.6" fill="#c8a0c8" opacity="0.60"/><circle cx="1571" cy="489" r="1.4" fill="#c8a0c8" opacity="0.60"/><circle cx="608" cy="196" r="1.5" fill="#a0a0e0" opacity="0.50"/><circle cx="1110" cy="296" r="1.8" fill="#e0e0e0" opacity="0.90"/><circle cx="1484" cy="329" r="1.1" fill="#e0e0e0" opacity="0.90"/><circle cx="292" cy="297" r="1.6" fill="#d0d0e8" opacity="0.50"/><circle cx="1573" cy="518" r="2.0" fill="#e8c0b0" opacity="0.90"/><circle cx="992" cy="413" r="1.1" fill="#c8a0c8" opacity="0.60"/><circle cx="1362" cy="321" r="1.4" fill="#d0d0e8" opacity="0.90"/><circle cx="1162" cy="889" r="1.3" fill="#e8c0b0" opacity="0.75"/><circle cx="279" cy="188" r="1.5" fill="#b0c8f0" opacity="0.75"/><circle cx="764" cy="573" r="1.4" fill="#c8a0c8" opacity="0.75"/><circle cx="203" cy="177" r="1.6" fill="#d0d0e8" opacity="0.60"/><circle cx="360" cy="662" r="1.3" fill="#e0e0e0" opacity="0.50"/><circle cx="401" cy="236" r="1.6" fill="#c0b0d8" opacity="0.75"/><circle cx="1292" cy="534" r="1.4" fill="#a0a0e0" opacity="0.50"/><circle cx="1243" cy="657" r="1.5" fill="#e0e0e0" opacity="0.50"/><circle cx="501" cy="694" r="1.3" fill="#e0e0e0" opacity="0.75"/><circle cx="1595" cy="919" r="1.5" fill="#b0c8f0" opacity="0.90"/><circle cx="1463" cy="741" r="1.4" fill="#c8a0c8" opacity="0.50"/><circle cx="1444" cy="209" r="1.4" fill="#e0b0c0" opacity="0.50"/><circle cx="1606" cy="924" r="1.6" fill="#e0b0c0" opacity="0.50"/><circle cx="890" cy="653" r="1.4" fill="#a0a0e0" opacity="0.75"/><circle cx="838" cy="208" r="1.5" fill="#a0a0e0" opacity="0.50"/><circle cx="98" cy="896" r="1.8" fill="#e0b0c0" opacity="0.50"/><circle cx="1318" cy="400" r="2.0" fill="#c0b0d8" opacity="0.90"/><circle cx="349" cy="281" r="2.0" fill="#f0a0b0" opacity="0.75"/><circle cx="701" cy="880" r="1.5" fill="#c0b0d8" opacity="0.50"/><circle cx="207" cy="923" r="1.8" fill="#f0a0b0" opacity="0.90"/><circle cx="453" cy="290" r="2.0" fill="#e8c0b0" opacity="0.90"/><circle cx="758" cy="305" r="2.0" fill="#e0b0c0" opacity="0.60"/><circle cx="1711" cy="546" r="2.0" fill="#c0b0d8" opacity="0.75"/><circle cx="1504" cy="159" r="1.6" fill="#e0e0e0" opacity="0.60"/><circle cx="1822" cy="650" r="1.4" fill="#e0b0c0" opacity="0.75"/><circle cx="1286" cy="687" r="1.1" fill="#c8a0c8" opacity="0.60"/><circle cx="1089" cy="145" r="2.0" fill="#e8c0b0" opacity="0.50"/><circle cx="1681" cy="931" r="1.4" fill="#d0d0e8" opacity="0.75"/><circle cx="1535" cy="358" r="1.4" fill="#e8c0b0" opacity="0.75"/><circle cx="1168" cy="465" r="1.4" fill="#a0a0e0" opacity="0.60"/><circle cx="63" cy="700" r="2.0" fill="#d0d0e8" opacity="0.50"/><circle cx="1848" cy="744" r="2.0" fill="#e0b0c0" opacity="0.75"/><circle cx="502" cy="684" r="1.5" fill="#f0a0b0" opacity="0.75"/><circle cx="284" cy="586" r="1.4" fill="#c8a0c8" opacity="0.75"/><circle cx="1675" cy="280" r="1.4" fill="#e0b0c0" opacity="0.50"/><circle cx="1488" cy="840" r="1.5" fill="#b0c8f0" opacity="0.90"/><circle cx="1469" cy="789" r="2.0" fill="#d0d0e8" opacity="0.75"/><circle cx="699" cy="189" r="1.1" fill="#b0c8f0" opacity="0.50"/><circle cx="1688" cy="157" r="1.4" fill="#a0a0e0" opacity="0.50"/><circle cx="949" cy="180" r="2.0" fill="#e0e0e0" opacity="0.90"/><circle cx="608" cy="534" r="1.5" fill="#e8c0b0" opacity="0.90"/><circle cx="621" cy="424" r="2.0" fill="#e8c0b0" opacity="0.75"/><circle cx="1086" cy="224" r="1.6" fill="#c0b0d8" opacity="0.50"/><circle cx="923" cy="484" r="1.8" fill="#d0d0e8" opacity="0.60"/><circle cx="420" cy="589" r="1.8" fill="#a0a0e0" opacity="0.50"/><circle cx="882" cy="611" r="1.1" fill="#e0b0c0" opacity="0.90"/><circle cx="1863" cy="289" r="1.4" fill="#c0b0d8" opacity="0.75"/><circle cx="225" cy="799" r="1.6" fill="#c8a0c8" opacity="0.60"/><circle cx="709" cy="923" r="1.8" fill="#f0a0b0" opacity="0.60"/><circle cx="735" cy="729" r="1.5" fill="#d0d0e8" opacity="0.75"/><circle cx="591" cy="411" r="1.8" fill="#e0b0c0" opacity="0.90"/><circle cx="1038" cy="554" r="1.8" fill="#e0b0c0" opacity="0.90"/><circle cx="1865" cy="605" r="2.0" fill="#e0b0c0" opacity="0.60"/><circle cx="72" cy="678" r="2.0" fill="#a0a0e0" opacity="0.75"/><circle cx="137" cy="182" r="1.6" fill="#c8a0c8" opacity="0.60"/><circle cx="972" cy="915" r="1.6" fill="#d0d0e8" opacity="0.60"/><circle cx="320" cy="502" r="1.1" fill="#f0a0b0" opacity="0.60"/><circle cx="1139" cy="352" r="1.4" fill="#d0d0e8" opacity="0.90"/><circle cx="435" cy="661" r="1.1" fill="#a0a0e0" opacity="0.50"/><circle cx="1505" cy="890" r="1.3" fill="#d0d0e8" opacity="0.75"/><circle cx="464" cy="822" r="1.3" fill="#e0b0c0" opacity="0.60"/><circle cx="1821" cy="738" r="1.1" fill="#e0e0e0" opacity="0.60"/><circle cx="537" cy="836" r="1.6" fill="#c8a0c8" opacity="0.90"/><circle cx="1763" cy="506" r="1.1" fill="#a0a0e0" opacity="0.90"/><circle cx="299" cy="520" r="1.8" fill="#d0d0e8" opacity="0.75"/><circle cx="785" cy="739" r="1.3" fill="#d0d0e8" opacity="0.60"/><circle cx="1626" cy="434" r="1.5" fill="#e8c0b0" opacity="0.75"/><circle cx="336" cy="318" r="1.1" fill="#e0b0c0" opacity="0.60"/><circle cx="1116" cy="240" r="1.4" fill="#e0b0c0" opacity="0.90"/><circle cx="915" cy="503" r="1.6" fill="#e0e0e0" opacity="0.90"/><circle cx="1764" cy="530" r="1.3" fill="#e0e0e0" opacity="0.60"/><circle cx="953" cy="330" r="1.4" fill="#f0a0b0" opacity="0.50"/><circle cx="776" cy="432" r="1.5" fill="#b0c8f0" opacity="0.75"/><circle cx="1327" cy="838" r="1.8" fill="#e0b0c0" opacity="0.90"/><circle cx="1617" cy="614" r="1.1" fill="#c8a0c8" opacity="0.90"/><circle cx="687" cy="662" r="1.8" fill="#f0a0b0" opacity="0.90"/><circle cx="1171" cy="267" r="1.8" fill="#c8a0c8" opacity="0.60"/><circle cx="1183" cy="702" r="1.5" fill="#b0c8f0" opacity="0.60"/><circle cx="661" cy="925" r="1.6" fill="#c0b0d8" opacity="0.90"/><circle cx="1228" cy="375" r="1.3" fill="#c8a0c8" opacity="0.75"/><circle cx="1512" cy="504" r="1.4" fill="#b0c8f0" opacity="0.50"/><circle cx="678" cy="580" r="1.4" fill="#e0e0e0" opacity="0.50"/><circle cx="647" cy="459" r="1.6" fill="#e8c0b0" opacity="0.50"/><circle cx="716" cy="460" r="1.4" fill="#c0b0d8" opacity="0.50"/><circle cx="543" cy="414" r="2.0" fill="#e0e0e0" opacity="0.60"/><circle cx="1754" cy="451" r="1.1" fill="#d0d0e8" opacity="0.60"/><circle cx="149" cy="809" r="1.3" fill="#e8c0b0" opacity="0.60"/><circle cx="440" cy="501" r="1.1" fill="#a0a0e0" opacity="0.60"/><circle cx="1045" cy="906" r="1.1" fill="#e0b0c0" opacity="0.90"/><circle cx="1568" cy="169" r="1.5" fill="#f0a0b0" opacity="0.90"/><circle cx="210" cy="865" r="2.0" fill="#e0b0c0" opacity="0.60"/><circle cx="1823" cy="168" r="1.1" fill="#e0b0c0" opacity="0.50"/><circle cx="111" cy="410" r="1.8" fill="#e0b0c0" opacity="0.50"/><circle cx="886" cy="225" r="1.3" fill="#b0c8f0" opacity="0.60"/><circle cx="698" cy="953" r="1.5" fill="#b0c8f0" opacity="0.90"/><circle cx="786" cy="509" r="1.5" fill="#c8a0c8" opacity="0.60"/><circle cx="342" cy="882" r="2.0" fill="#b0c8f0" opacity="0.50"/><circle cx="853" cy="656" r="1.1" fill="#e0e0e0" opacity="0.50"/><circle cx="864" cy="872" r="1.6" fill="#b0c8f0" opacity="0.90"/><circle cx="973" cy="259" r="1.1" fill="#c0b0d8" opacity="0.60"/><circle cx="947" cy="711" r="1.3" fill="#c8a0c8" opacity="0.50"/><circle cx="1581" cy="438" r="1.8" fill="#d0d0e8" opacity="0.90"/><circle cx="1369" cy="477" r="1.5" fill="#e0b0c0" opacity="0.75"/><circle cx="1673" cy="295" r="1.3" fill="#c8a0c8" opacity="0.75"/><circle cx="621" cy="769" r="1.4" fill="#b0c8f0" opacity="0.60"/><circle cx="1087" cy="592" r="1.4" fill="#a0a0e0" opacity="0.90"/><circle cx="1738" cy="768" r="1.3" fill="#f0a0b0" opacity="0.50"/><circle cx="1086" cy="894" r="1.6" fill="#c0b0d8" opacity="0.90"/><circle cx="1327" cy="140" r="1.6" fill="#e0b0c0" opacity="0.50"/><circle cx="727" cy="868" r="1.6" fill="#f0a0b0" opacity="0.90"/><circle cx="1651" cy="812" r="1.1" fill="#e0e0e0" opacity="0.75"/><circle cx="218" cy="548" r="1.8" fill="#e8c0b0" opacity="0.60"/><circle cx="159" cy="352" r="2.0" fill="#b0c8f0" opacity="0.60"/><circle cx="1719" cy="923" r="1.6" fill="#f0a0b0" opacity="0.75"/><circle cx="873" cy="857" r="1.5" fill="#e0e0e0" opacity="0.50"/><circle cx="125" cy="834" r="2.0" fill="#e8c0b0" opacity="0.50"/><circle cx="1139" cy="858" r="1.8" fill="#e0b0c0" opacity="0.75"/><circle cx="1202" cy="450" r="1.3" fill="#e8c0b0" opacity="0.50"/><circle cx="852" cy="157" r="1.1" fill="#c8a0c8" opacity="0.60"/><circle cx="888" cy="528" r="1.8" fill="#a0a0e0" opacity="0.75"/><circle cx="666" cy="915" r="1.3" fill="#e0b0c0" opacity="0.50"/><circle cx="1217" cy="836" r="1.4" fill="#b0c8f0" opacity="0.60"/><circle cx="339" cy="912" r="1.5" fill="#d0d0e8" opacity="0.75"/><circle cx="514" cy="187" r="1.3" fill="#e8c0b0" opacity="0.50"/><circle cx="1191" cy="581" r="2.0" fill="#e0e0e0" opacity="0.60"/><circle cx="219" cy="899" r="2.0" fill="#b0c8f0" opacity="0.50"/><circle cx="1399" cy="330" r="1.5" fill="#e0e0e0" opacity="0.60"/><circle cx="1725" cy="270" r="1.8" fill="#a0a0e0" opacity="0.75"/><circle cx="779" cy="276" r="1.3" fill="#e0e0e0" opacity="0.90"/><circle cx="940" cy="360" r="1.4" fill="#a0a0e0" opacity="0.90"/><circle cx="1430" cy="628" r="1.3" fill="#b0c8f0" opacity="0.50"/><circle cx="711" cy="937" r="1.3" fill="#e0e0e0" opacity="0.75"/><circle cx="1804" cy="458" r="1.6" fill="#e0b0c0" opacity="0.75"/><circle cx="1446" cy="401" r="1.5" fill="#a0a0e0" opacity="0.75"/><circle cx="871" cy="445" r="2.0" fill="#b0c8f0" opacity="0.90"/><circle cx="1773" cy="665" r="1.6" fill="#e0b0c0" opacity="0.75"/><circle cx="384" cy="295" r="1.4" fill="#d0d0e8" opacity="0.50"/><circle cx="807" cy="311" r="1.1" fill="#d0d0e8" opacity="0.50"/><circle cx="1415" cy="334" r="1.1" fill="#e8c0b0" opacity="0.50"/><circle cx="1851" cy="702" r="1.8" fill="#c8a0c8" opacity="0.75"/><circle cx="130" cy="492" r="1.4" fill="#b0c8f0" opacity="0.50"/><circle cx="980" cy="428" r="1.8" fill="#c0b0d8" opacity="0.60"/><circle cx="64" cy="305" r="1.3" fill="#d0d0e8" opacity="0.50"/><circle cx="424" cy="238" r="1.6" fill="#c0b0d8" opacity="0.75"/><circle cx="1272" cy="457" r="1.8" fill="#c8a0c8" opacity="0.50"/><circle cx="1129" cy="719" r="1.5" fill="#a0a0e0" opacity="0.75"/><circle cx="979" cy="493" r="2.0" fill="#c8a0c8" opacity="0.50"/><circle cx="1854" cy="966" r="1.6" fill="#c0b0d8" opacity="0.90"/><circle cx="334" cy="742" r="1.6" fill="#e0b0c0" opacity="0.75"/><circle cx="1717" cy="445" r="1.6" fill="#e0b0c0" opacity="0.60"/><circle cx="329" cy="261" r="1.6" fill="#a0a0e0" opacity="0.60"/><circle cx="604" cy="610" r="1.1" fill="#c0b0d8" opacity="0.90"/><circle cx="793" cy="590" r="1.1" fill="#c8a0c8" opacity="0.60"/><circle cx="811" cy="334" r="2.0" fill="#c8a0c8" opacity="0.60"/><circle cx="1674" cy="434" r="2.0" fill="#a0a0e0" opacity="0.90"/>
<polyline points="169.0,155.7 234.5,141.5 285.0,259.0 300.0,290.0" stroke="#7a8f3a" stroke-width="1.05" fill="none"/>
<polyline points="285.0,259.0 232.0,254.7 180.0,276.0 171.0,318.0 171.0,387.0" stroke="#7a8f3a" stroke-width="1.05" fill="none"/>
<polyline points="180.0,276.0 150.0,262.0" stroke="#7a8f3a" stroke-width="1.05" fill="none"/>
<polyline points="597.0,172.7 605.0,136.0" stroke="#7a8f3a" stroke-width="1.05" fill="none"/>
<polyline points="40.0,434.0 52.0,426.0 172.5,470.0 200.0,456.0 230.0,445.0" stroke="#7a8f3a" stroke-width="1.05" fill="none"/>
<polyline points="123.3,629.6 167.3,615.0" stroke="#7a8f3a" stroke-width="1.05" fill="none"/>
<polyline points="123.3,629.6 125.0,670.0 127.4,716.0 149.6,752.0 179.0,830.0 139.0,850.7" stroke="#7a8f3a" stroke-width="1.05" fill="none"/>
<polyline points="167.3,615.0 189.6,670.0 200.0,694.0 215.0,720.0" stroke="#7a8f3a" stroke-width="1.05" fill="none"/>
<polyline points="502.5,955.0 555.6,971.0" stroke="#7a8f3a" stroke-width="1.05" fill="none"/>
<polyline points="222.8,954.0 229.0,971.0" stroke="#7a8f3a" stroke-width="1.05" fill="none"/>
<polyline points="546.0,954.0 552.5,971.0" stroke="#7a8f3a" stroke-width="1.05" fill="none"/>
<polyline points="727.1,231.4 838.1,153.7 939.6,153.2 970.1,242.5 864.6,253.3 727.1,231.4" stroke="#7a8f3a" stroke-width="1.05" fill="none"/>
<polyline points="838.1,153.7 864.6,253.3" stroke="#7a8f3a" stroke-width="1.05" fill="none"/>
<polyline points="871.8,379.7 859.1,429.5 815.0,408.7 787.2,435.2 766.4,429.5 745.0,424.0" stroke="#7a8f3a" stroke-width="1.05" fill="none"/>
<polyline points="1024.0,288.7 1037.0,310.6 1050.6,304.3 1063.5,321.5 1082.0,314.4 1084.7,358.0 1170.0,352.3" stroke="#7a8f3a" stroke-width="1.05" fill="none"/>
<polyline points="1301.0,187.0 1268.0,136.0" stroke="#7a8f3a" stroke-width="1.05" fill="none"/>
<polyline points="1522.0,150.4 1538.0,141.5" stroke="#7a8f3a" stroke-width="1.05" fill="none"/>
<polyline points="1485.0,286.7 1498.3,271.8 1512.7,275.3 1499.5,285.7 1485.0,286.7" stroke="#7a8f3a" stroke-width="1.05" fill="none"/>
<polyline points="1512.7,275.3 1550.5,285.7" stroke="#7a8f3a" stroke-width="1.05" fill="none"/>
<polyline points="1649.4,136.0 1635.4,180.3 1643.8,204.0 1658.7,231.9 1694.0,318.6 1712.8,265.5 1761.9,249.0 1855.0,216.4 1865.0,215.8" stroke="#7a8f3a" stroke-width="1.05" fill="none"/>
<polyline points="1635.4,180.3 1746.3,189.0 1855.0,216.4" stroke="#7a8f3a" stroke-width="1.05" fill="none"/>
<polyline points="1504.6,375.2 1499.6,384.7 1538.2,415.8" stroke="#7a8f3a" stroke-width="1.05" fill="none"/>
<polyline points="1090.8,596.0 1194.3,495.3 1295.3,577.3 1184.0,705.0 1090.8,596.0" stroke="#7a8f3a" stroke-width="1.05" fill="none"/>
<polyline points="1194.3,495.3 1204.2,444.7 1218.5,366.5" stroke="#7a8f3a" stroke-width="1.05" fill="none"/>
<polyline points="1194.3,495.3 1240.9,491.3 1254.3,491.3 1318.0,358.0" stroke="#7a8f3a" stroke-width="1.05" fill="none"/>
<polyline points="1295.3,577.3 1347.0,561.2 1365.7,559.0 1449.6,523.3 1456.8,447.8" stroke="#7a8f3a" stroke-width="1.05" fill="none"/>
<polyline points="880.5,532.3 952.0,590.7 1013.5,603.1 1090.8,596.0" stroke="#7a8f3a" stroke-width="1.05" fill="none"/>
<polyline points="952.0,590.7 998.6,440.0 1004.8,429.8 1079.3,404.0" stroke="#7a8f3a" stroke-width="1.05" fill="none"/>
<polyline points="820.5,623.9 947.3,629.5 1028.4,628.6 1090.8,596.0" stroke="#7a8f3a" stroke-width="1.05" fill="none"/>
<polyline points="841.0,697.3 832.3,712.8 899.1,731.4 841.0,697.3" stroke="#7a8f3a" stroke-width="1.05" fill="none"/>
<polyline points="976.8,678.6 978.4,712.8 1005.4,728.3 1012.5,760.0 1026.6,831.4 1034.9,913.8 1036.4,971.0" stroke="#7a8f3a" stroke-width="1.05" fill="none"/>
<polyline points="1315.6,707.4 1329.3,678.7 1371.7,676.7 1388.3,646.7" stroke="#7a8f3a" stroke-width="1.05" fill="none"/>
<polyline points="1371.7,676.7 1372.5,708.8 1343.0,735.7 1315.6,707.4" stroke="#7a8f3a" stroke-width="1.05" fill="none"/>
<polyline points="1315.6,707.4 1272.6,736.8 1229.4,776.1 1173.5,824.4 1141.2,849.0 1120.3,872.0 1093.3,916.0 1071.1,943.6 1058.2,971.0" stroke="#7a8f3a" stroke-width="1.05" fill="none"/>
<polyline points="952.2,825.0 941.1,811.8 899.0,801.3 750.0,900.0" stroke="#7a8f3a" stroke-width="1.05" fill="none"/>
<polyline points="1703.8,451.5 1691.3,458.0 1603.7,514.0 1528.8,558.0 1494.7,591.3 1472.9,598.5 1463.6,611.8" stroke="#7a8f3a" stroke-width="1.05" fill="none"/>
<polyline points="1466.7,583.0 1472.9,598.5 1499.3,688.6 1553.7,716.5 1567.7,740.8 1580.0,760.0" stroke="#7a8f3a" stroke-width="1.05" fill="none"/>
<polyline points="1499.3,688.6 1452.7,724.3 1463.6,739.8 1474.5,750.7 1477.5,756.0" stroke="#7a8f3a" stroke-width="1.05" fill="none"/>
<polyline points="1776.5,414.3 1788.9,435.4 1828.0,548.7 1830.9,567.4 1746.3,602.5 1707.5,606.2 1666.5,607.2 1708.4,563.7 1735.5,534.8 1776.5,414.3" stroke="#7a8f3a" stroke-width="1.05" fill="none"/>
<polyline points="1865.0,612.0 1859.7,617.7 1838.0,645.7 1864.4,668.4" stroke="#7a8f3a" stroke-width="1.05" fill="none"/>
<polyline points="1811.0,699.4 1777.4,742.9 1750.4,785.3 1732.6,832.0 1724.9,837.6 1693.6,825.9 1596.7,804.7" stroke="#7a8f3a" stroke-width="1.05" fill="none"/>
<polyline points="1689.0,776.0 1693.6,825.9" stroke="#7a8f3a" stroke-width="1.05" fill="none"/>
<polyline points="1477.5,756.0 1486.0,840.7 1521.5,874.2 1569.0,839.0 1596.7,804.7 1580.0,760.0" stroke="#7a8f3a" stroke-width="1.05" fill="none"/>
<polyline points="1371.5,888.3 1405.3,971.0" stroke="#7a8f3a" stroke-width="1.05" fill="none"/>
<polyline points="1746.4,946.0 1700.3,888.3 1618.3,936.5 1606.6,971.0" stroke="#7a8f3a" stroke-width="1.05" fill="none"/>
<polyline points="1839.5,740.7 1840.0,750.0 1847.0,774.6 1855.0,802.2 1865.0,838.0" stroke="#7a8f3a" stroke-width="1.05" fill="none"/>
<polyline points="1834.0,912.9 1851.5,926.7 1865.0,911.0" stroke="#7a8f3a" stroke-width="1.05" fill="none"/>
<ellipse cx="340.5" cy="208.7" rx="3.6" ry="2.6" transform="rotate(10 340.5 208.7)" fill="#8a8a8e" opacity="0.90"/>
<ellipse cx="347.0" cy="206.0" rx="2.6" ry="2.6" transform="rotate(0 347.0 206.0)" fill="#8a8a8e" opacity="0.90"/>
<ellipse cx="931.1" cy="700.4" rx="7.0" ry="5.0" transform="rotate(25 931.1 700.4)" fill="#8a8a8e" opacity="0.90"/>
<ellipse cx="851.6" cy="661.5" rx="4.5" ry="4.0" transform="rotate(0 851.6 661.5)" fill="#55555c" opacity="0.90"/>
<ellipse cx="811.2" cy="523.3" rx="3.5" ry="2.5" transform="rotate(-20 811.2 523.3)" fill="#8a8a8e" opacity="0.90"/>
<ellipse cx="963.0" cy="543.0" rx="2.5" ry="2.0" transform="rotate(30 963.0 543.0)" fill="#8a8a8e" opacity="0.90"/>
<ellipse cx="965.0" cy="549.0" rx="5.0" ry="1.6" transform="rotate(20 965.0 549.0)" fill="#ddd" opacity="0.90"/>
<circle cx="1561.8" cy="489.7" r="3.6" fill="#77778a" opacity="0.8"/>
<circle cx="1458.0" cy="404.6" r="3.6" fill="#77778a" opacity="0.8"/>
<circle cx="1733.0" cy="632.6" r="3.6" fill="#77778a" opacity="0.8"/>
<circle cx="1715.5" cy="493.5" r="3.6" fill="#77778a" opacity="0.8"/>
<circle cx="1538.0" cy="143.0" r="3.6" fill="#77778a" opacity="0.8"/>
<circle cx="1131.0" cy="220.5" r="3.6" fill="#77778a" opacity="0.8"/>
<circle cx="897.0" cy="315.0" r="3.6" fill="#77778a" opacity="0.8"/>
<circle cx="1721.0" cy="481.0" r="3.6" fill="#77778a" opacity="0.8"/>
<circle cx="1145.0" cy="220.0" r="3.2" fill="none" stroke="#55556a" stroke-width="1"/>
<circle cx="997.0" cy="260.0" r="3.2" fill="none" stroke="#55556a" stroke-width="1"/>
<circle cx="1040.0" cy="259.0" r="3.2" fill="none" stroke="#55556a" stroke-width="1"/>
<circle cx="831.0" cy="348.0" r="3.2" fill="none" stroke="#55556a" stroke-width="1"/>
<circle cx="1196.0" cy="190.0" r="3.2" fill="none" stroke="#55556a" stroke-width="1"/>
<circle cx="1376.0" cy="188.0" r="3.2" fill="none" stroke="#55556a" stroke-width="1"/>
<circle cx="776.5" cy="436.4" r="3.2" fill="none" stroke="#55556a" stroke-width="1"/>
<circle cx="844.4" cy="391.0" r="3.2" fill="none" stroke="#55556a" stroke-width="1"/>
<rect x="940.5" y="260.5" width="5" height="5" fill="none" stroke="#4a4a66" stroke-width="1"/>
<rect x="796.5" y="282.5" width="7" height="7" fill="none" stroke="#4a4a66" stroke-width="1"/>
<rect x="904.5" y="311.5" width="7" height="7" fill="none" stroke="#4a4a66" stroke-width="1"/>
<rect x="1318.0" y="217.0" width="6" height="6" fill="none" stroke="#4a4a66" stroke-width="1"/>
<path d="M992.1 184.2C994.2 183.8 996.1 184.3 997.9 185.0C999.7 185.7 1001.8 186.9 1003.0 188.6C1004.2 190.3 1005.0 192.9 1005.2 195.2C1005.5 197.5 1005.1 200.2 1004.5 202.5C1003.9 204.8 1003.2 207.4 1001.6 209.0C1000.0 210.6 997.1 211.8 995.0 211.9C992.9 212.0 990.9 210.5 989.2 209.8C987.5 209.1 986.4 208.3 984.8 207.6C983.2 206.9 981.0 206.4 979.7 205.4C978.4 204.4 977.3 202.7 976.8 201.7C976.2 200.7 976.0 200.3 976.4 199.5C976.8 198.7 978.2 197.3 979.0 196.6C979.8 195.9 980.6 196.0 981.1 195.2C981.6 194.3 981.2 192.8 981.9 191.5C982.6 190.2 983.8 188.3 985.5 187.1C987.2 185.9 990.0 184.5 992.1 184.2Z" stroke="#fff" stroke-width="1.25" fill="none" stroke-linejoin="round"/>
<circle cx="995" cy="197.4" r="4" fill="none" stroke="#55557a" stroke-width="1"/><circle cx="995" cy="197.4" r="1" fill="#fff"/><circle cx="997.5" cy="192" r="0.8" fill="#fff"/>
<path d="M1163.3 153.5C1162.1 153.8 1159.5 155.5 1158.2 157.1C1156.9 158.7 1156.0 161.2 1155.7 163.0C1155.4 164.8 1155.8 166.3 1156.4 168.1C1157.0 169.9 1158.4 171.8 1159.3 173.9C1160.2 176.0 1161.1 178.8 1161.9 180.5C1162.7 182.2 1162.6 183.8 1164.1 183.8C1165.5 183.8 1168.3 181.7 1170.6 180.5C1172.9 179.3 1175.7 177.9 1177.9 176.8C1180.1 175.7 1182.4 174.6 1183.8 173.9C1185.2 173.2 1186.3 173.1 1186.3 172.5C1186.3 171.9 1184.7 170.7 1183.8 170.6C1182.9 170.5 1181.7 171.8 1180.8 171.7C1179.9 171.6 1179.4 170.7 1178.6 170.3C1177.8 169.9 1175.9 170.1 1175.7 169.5C1175.5 168.9 1177.2 167.4 1177.2 166.6C1177.2 165.8 1176.6 165.2 1175.7 164.4C1174.8 163.6 1173.2 162.5 1172.1 161.5C1171.0 160.5 1170.3 159.7 1169.2 158.6C1168.1 157.5 1166.5 155.8 1165.5 155.0C1164.5 154.2 1164.5 153.2 1163.3 153.5Z" stroke="#fff" stroke-width="1.25" fill="none" stroke-linejoin="round"/>
<path d="M1172.8 151.3C1173.4 150.3 1175.2 149.5 1176.5 149.1C1177.8 148.7 1179.6 148.4 1180.8 148.8C1182.0 149.2 1182.8 150.6 1183.8 151.3C1184.8 152.0 1186.1 152.1 1186.7 152.8C1187.3 153.5 1187.8 154.8 1187.4 155.7C1187.0 156.5 1185.1 157.1 1184.5 157.9C1183.9 158.8 1184.4 160.2 1183.8 160.8C1183.2 161.4 1181.7 161.6 1180.8 161.2C1179.9 160.8 1179.6 159.1 1178.6 158.6C1177.6 158.1 1176.0 158.5 1175.0 157.9C1174.0 157.3 1173.2 156.1 1172.8 155.0C1172.4 153.9 1172.2 152.3 1172.8 151.3Z M1174 153.5l3 2.5l1.5 3 M1177 152l3 3l0.5 3.5 M1180.5 155l2 3" stroke="#fff" stroke-width="1.25" fill="none" stroke-linejoin="round"/>
<path d="M1195.8 146.9C1196.3 147.0 1197.1 149.4 1197.2 150.6C1197.3 151.8 1196.9 153.7 1196.5 154.2C1196.1 154.7 1195.1 154.2 1194.7 153.5C1194.3 152.8 1194.1 151.0 1194.3 149.9C1194.5 148.8 1195.3 146.8 1195.8 146.9Z" stroke="#fff" stroke-width="1.25" fill="none" stroke-linejoin="round"/>
<path d="M1197.6 156.0C1198.6 155.8 1201.2 156.3 1202.0 157.1C1202.8 157.9 1203.0 159.8 1202.7 160.8C1202.5 161.8 1201.5 163.2 1200.5 163.3C1199.5 163.4 1197.6 162.3 1196.9 161.5C1196.2 160.7 1196.0 159.5 1196.1 158.6C1196.2 157.7 1196.6 156.2 1197.6 156.0Z" stroke="#fff" stroke-width="1.25" fill="none" stroke-linejoin="round"/>
<path d="M1196.1 163.7C1196.8 163.7 1198.4 164.0 1198.3 165.2C1198.2 166.4 1196.2 169.9 1195.4 171.0C1194.6 172.1 1193.8 171.9 1193.2 171.7C1192.7 171.4 1191.9 170.6 1192.1 169.5C1192.3 168.4 1193.6 166.2 1194.3 165.2C1195.0 164.2 1195.4 163.7 1196.1 163.7Z" stroke="#fff" stroke-width="1.25" fill="none" stroke-linejoin="round"/>
<rect x="1160.4" y="166.3" width="19.3" height="19.3" fill="none" stroke="#55557a" stroke-width="1"/>
<path d="M1318 204 l2 -4 M1322 201 l5 -2 l3 4 l-4 -1 Z M1334 199 l4 3 l3 6 l-5 -4 Z M1338 209 l2 2 M1315 217 l1 6 l5 3 l2 -2 l-5 -3 Z" stroke="#fff" stroke-width="1.25" fill="none" stroke-linejoin="round"/>
<rect x="1031" y="241" width="3.4" height="2.6" fill="#fff"/>
<circle cx="98" cy="932" r="3.4" fill="none" stroke="#3a4a80" stroke-width="1"/><circle cx="110" cy="932" r="3.4" fill="none" stroke="#3a4a80" stroke-width="1"/><circle cx="123" cy="945" r="3.4" fill="none" stroke="#3a4a80" stroke-width="1"/><circle cx="109" cy="943" r="3.4" fill="none" stroke="#3a4a80" stroke-width="1"/><circle cx="95" cy="944" r="3.4" fill="none" stroke="#3a4a80" stroke-width="1"/>
<rect x="149" y="901" width="5" height="5" fill="none" stroke="#3a4a80"/><rect x="153" y="896" width="5" height="5" fill="none" stroke="#3a4a80"/><rect x="125" y="885" width="4" height="5" fill="none" stroke="#3a4a80"/>
<path d="M108 948 c2 -4 8 -4 10 -2 c4 0 5 4 3 6 c1 3 -3 5 -6 4 c-3 2 -7 0 -7 -3 c-2 -1 -2 -4 0 -5 Z M111 949 l6 1 M110 953 l8 -1 M113 947 l1 8" stroke="#fff" stroke-width="1.1" fill="none"/>
<circle cx="124.5" cy="891" r="1.5" fill="#fff"/><circle cx="128" cy="888" r="1.2" fill="#fff"/>
<circle cx="234.5" cy="141.5" r="3.2" fill="#fff8d0"/>
<circle cx="597.0" cy="172.7" r="3.2" fill="#fffbe0"/>
<circle cx="232.0" cy="254.7" r="2.4" fill="#fff"/>
<circle cx="171.0" cy="318.0" r="2.6" fill="#fffbe0"/>
<circle cx="167.0" cy="315.0" r="1.8" fill="#fff"/>
<circle cx="171.0" cy="387.0" r="2.4" fill="#fff"/>
<circle cx="158.0" cy="386.0" r="2.0" fill="#fff"/>
<circle cx="52.0" cy="426.0" r="2.0" fill="#fff"/>
<circle cx="116.0" cy="424.5" r="2.0" fill="#fff"/>
<circle cx="81.0" cy="436.0" r="1.6" fill="#ffe080"/>
<circle cx="172.5" cy="470.0" r="2.0" fill="#ffb0a0"/>
<circle cx="123.3" cy="629.6" r="4.0" fill="#fff0c0"/>
<circle cx="167.3" cy="615.0" r="3.8" fill="#fff"/>
<circle cx="175.6" cy="623.7" r="1.9" fill="#fff"/>
<circle cx="160.0" cy="621.5" r="1.4" fill="#ffd0a0"/>
<circle cx="100.0" cy="659.0" r="2.0" fill="#ffe0c0"/>
<circle cx="156.0" cy="664.0" r="1.8" fill="#ffd0b0"/>
<circle cx="132.0" cy="652.0" r="1.6" fill="#ffb0b0"/>
<circle cx="127.4" cy="716.0" r="2.6" fill="#fffbe0"/>
<circle cx="149.6" cy="752.0" r="2.2" fill="#ffe8a0"/>
<circle cx="179.0" cy="830.0" r="3.6" fill="#fff"/>
<circle cx="139.0" cy="850.7" r="2.8" fill="#fffbe0"/>
<circle cx="145.0" cy="850.0" r="1.6" fill="#ffe080"/>
<circle cx="94.0" cy="764.5" r="2.6" fill="#fff"/>
<circle cx="120.0" cy="833.0" r="2.0" fill="#fffbe0"/>
<circle cx="727.1" cy="231.4" r="2.6" fill="#ffe8b0"/>
<circle cx="838.1" cy="153.7" r="2.6" fill="#c0e8ff"/>
<circle cx="939.6" cy="153.2" r="3.2" fill="#fff"/>
<circle cx="970.1" cy="242.5" r="2.6" fill="#ffd8c0"/>
<circle cx="864.6" cy="253.3" r="2.4" fill="#ffe890"/>
<circle cx="950.0" cy="194.5" r="2.0" fill="#fff"/>
<circle cx="902.0" cy="207.5" r="2.0" fill="#fff"/>
<circle cx="760.0" cy="224.5" r="1.8" fill="#fffbd0"/>
<circle cx="980.0" cy="253.0" r="2.2" fill="#fff0c0"/>
<circle cx="957.0" cy="266.5" r="2.0" fill="#ffffc0"/>
<circle cx="871.8" cy="379.7" r="3.4" fill="#fff"/>
<circle cx="859.1" cy="429.5" r="3.2" fill="#ffe8d0"/>
<circle cx="815.0" cy="408.7" r="3.0" fill="#fff"/>
<circle cx="787.2" cy="435.2" r="3.0" fill="#fff"/>
<circle cx="821.9" cy="372.7" r="2.2" fill="#fff"/>
<circle cx="841.5" cy="427.0" r="2.4" fill="#ffffd0"/>
<circle cx="824.7" cy="422.2" r="1.4" fill="#ffb0a0"/>
<circle cx="827.5" cy="422.2" r="1.4" fill="#ffb0a0"/>
<circle cx="832.6" cy="467.3" r="1.7" fill="#fff"/>
<circle cx="837.4" cy="467.3" r="1.5" fill="#fff"/>
<circle cx="783.4" cy="449.7" r="1.8" fill="#ffb090"/>
<circle cx="804.6" cy="448.4" r="1.8" fill="#fff"/>
<circle cx="882.5" cy="436.4" r="1.8" fill="#80c0ff"/>
<circle cx="880.6" cy="445.9" r="2.0" fill="#60b0ff"/>
<circle cx="898.9" cy="375.9" r="1.9" fill="#ffd0b0"/>
<circle cx="895.7" cy="359.5" r="1.8" fill="#ffd8c0"/>
<circle cx="1024.0" cy="288.7" r="1.8" fill="#ffe890"/>
<circle cx="1037.0" cy="310.6" r="2.4" fill="#fff"/>
<circle cx="1050.6" cy="304.3" r="2.0" fill="#fff"/>
<circle cx="1063.5" cy="321.5" r="1.8" fill="#ffc0a0"/>
<circle cx="1082.0" cy="314.4" r="1.8" fill="#a0e0ff"/>
<circle cx="1084.7" cy="358.0" r="1.8" fill="#ffe860"/>
<circle cx="1170.0" cy="352.3" r="2.0" fill="#ff9090"/>
<circle cx="1301.0" cy="187.0" r="3.0" fill="#fff0d0"/>
<circle cx="1212.5" cy="230.0" r="2.2" fill="#fff"/>
<circle cx="1229.0" cy="231.0" r="2.4" fill="#fff"/>
<circle cx="1131.0" cy="235.0" r="2.0" fill="#ffe0c0"/>
<circle cx="1360.0" cy="165.0" r="2.0" fill="#fff"/>
<circle cx="1312.0" cy="266.0" r="2.4" fill="#ffe8d0"/>
<circle cx="1522.0" cy="150.4" r="2.2" fill="#ffb0b0"/>
<circle cx="1360.0" cy="164.5" r="2.0" fill="#fff"/>
<circle cx="1485.0" cy="286.7" r="1.8" fill="#ffffc0"/>
<circle cx="1498.3" cy="271.8" r="2.0" fill="#a0d0ff"/>
<circle cx="1512.7" cy="275.3" r="2.4" fill="#fff"/>
<circle cx="1499.5" cy="285.7" r="1.8" fill="#fff"/>
<circle cx="1550.5" cy="285.7" r="2.0" fill="#a0d0ff"/>
<circle cx="1515.5" cy="270.0" r="1.6" fill="#fff"/>
<circle cx="1635.4" cy="180.3" r="2.8" fill="#ffd0b0"/>
<circle cx="1643.8" cy="204.0" r="4.6" fill="#fff"/>
<circle cx="1658.7" cy="231.9" r="2.2" fill="#ffe890"/>
<circle cx="1694.0" cy="318.6" r="2.4" fill="#a0e0ff"/>
<circle cx="1712.8" cy="265.5" r="2.2" fill="#ffffa0"/>
<circle cx="1761.9" cy="249.0" r="2.0" fill="#a0e0ff"/>
<circle cx="1855.0" cy="216.4" r="2.4" fill="#c0f0ff"/>
<circle cx="1746.3" cy="189.0" r="2.4" fill="#fff"/>
<circle cx="1504.6" cy="375.2" r="1.8" fill="#fff"/>
<circle cx="1499.6" cy="384.7" r="1.6" fill="#ffffc0"/>
<circle cx="1538.2" cy="415.8" r="2.0" fill="#fff"/>
<circle cx="1572.0" cy="386.5" r="1.8" fill="#fff"/>
<circle cx="1090.8" cy="596.0" r="3.6" fill="#fff"/>
<circle cx="1194.3" cy="495.3" r="3.0" fill="#ffd8b0"/>
<circle cx="1295.3" cy="577.3" r="3.0" fill="#fff"/>
<circle cx="1184.0" cy="705.0" r="2.6" fill="#c0e8ff"/>
<circle cx="1204.2" cy="444.7" r="2.6" fill="#fff0a0"/>
<circle cx="1218.5" cy="366.5" r="2.0" fill="#ffffc0"/>
<circle cx="1240.9" cy="491.3" r="2.2" fill="#ffe8a0"/>
<circle cx="1254.3" cy="491.3" r="1.8" fill="#ffffc0"/>
<circle cx="1318.0" cy="358.0" r="2.0" fill="#fff"/>
<circle cx="1347.0" cy="561.2" r="1.8" fill="#ffffa0"/>
<circle cx="1365.7" cy="559.0" r="2.2" fill="#c0e0ff"/>
<circle cx="1449.6" cy="523.3" r="2.4" fill="#fff"/>
<circle cx="1456.8" cy="447.8" r="3.0" fill="#ffc0d0"/>
<circle cx="880.5" cy="532.3" r="1.8" fill="#fff"/>
<circle cx="952.0" cy="590.7" r="2.2" fill="#fff"/>
<circle cx="1013.5" cy="603.1" r="1.8" fill="#c0f0ff"/>
<circle cx="820.5" cy="623.9" r="3.2" fill="#ffb0c0"/>
<circle cx="947.3" cy="629.5" r="3.2" fill="#ffb8c0"/>
<circle cx="1028.4" cy="628.6" r="2.4" fill="#ffe0b0"/>
<circle cx="841.0" cy="697.3" r="2.6" fill="#fff"/>
<circle cx="832.3" cy="712.8" r="1.6" fill="#ffffc0"/>
<circle cx="899.1" cy="731.4" r="2.4" fill="#ffffd0"/>
<circle cx="976.8" cy="678.6" r="1.6" fill="#ffff90"/>
<circle cx="978.4" cy="712.8" r="1.6" fill="#c0f0ff"/>
<circle cx="1005.4" cy="728.3" r="1.8" fill="#ffe890"/>
<circle cx="899.0" cy="801.3" r="3.6" fill="#fff4c0"/>
<circle cx="941.1" cy="811.8" r="3.2" fill="#fff"/>
<circle cx="952.2" cy="825.0" r="2.6" fill="#fff"/>
<circle cx="1026.6" cy="831.4" r="2.0" fill="#ffe070"/>
<circle cx="1034.9" cy="913.8" r="2.0" fill="#ffd860"/>
<circle cx="1173.5" cy="824.4" r="2.0" fill="#ffd090"/>
<circle cx="1141.2" cy="849.0" r="2.0" fill="#ffe060"/>
<circle cx="1120.3" cy="872.0" r="1.8" fill="#e0e0b0"/>
<circle cx="1093.3" cy="916.0" r="1.8" fill="#ffc8a0"/>
<circle cx="1071.1" cy="943.6" r="2.0" fill="#ffe8a0"/>
<circle cx="1329.4" cy="679.2" r="1.6" fill="#ffff90"/>
<circle cx="1315.5" cy="707.2" r="1.8" fill="#ffffc0"/>
<circle cx="1272.0" cy="736.7" r="1.8" fill="#fff"/>
<circle cx="1371.3" cy="676.7" r="2.0" fill="#ffe860"/>
<circle cx="1387.5" cy="647.5" r="1.6" fill="#a0d0ff"/>
<circle cx="1372.6" cy="708.7" r="1.6" fill="#c0e0ff"/>
<circle cx="1343.0" cy="735.2" r="1.8" fill="#fff"/>
<circle cx="1603.7" cy="514.0" r="2.8" fill="#fff080"/>
<circle cx="1509.6" cy="552.5" r="2.8" fill="#ffe0c0"/>
<circle cx="1528.8" cy="558.0" r="1.6" fill="#a0d0ff"/>
<circle cx="1494.7" cy="591.3" r="2.0" fill="#a0d0ff"/>
<circle cx="1472.9" cy="598.5" r="2.4" fill="#ffffa0"/>
<circle cx="1463.6" cy="611.8" r="1.8" fill="#a0d0ff"/>
<circle cx="1466.7" cy="583.0" r="1.6" fill="#a0d0ff"/>
<circle cx="1703.8" cy="451.5" r="2.2" fill="#fff"/>
<circle cx="1691.3" cy="458.0" r="1.6" fill="#ffffa0"/>
<circle cx="1499.3" cy="688.6" r="2.0" fill="#ffb090"/>
<circle cx="1553.7" cy="716.5" r="1.8" fill="#ffb090"/>
<circle cx="1567.7" cy="740.8" r="2.6" fill="#fff"/>
<circle cx="1452.7" cy="724.3" r="1.8" fill="#ffb090"/>
<circle cx="1463.6" cy="739.8" r="1.6" fill="#ffe0a0"/>
<circle cx="1474.5" cy="750.7" r="1.6" fill="#a0d0ff"/>
<circle cx="1776.5" cy="414.3" r="2.4" fill="#ffffd0"/>
<circle cx="1788.9" cy="435.4" r="2.6" fill="#ffffc0"/>
<circle cx="1666.5" cy="607.2" r="2.8" fill="#fff"/>
<circle cx="1680.0" cy="603.0" r="2.0" fill="#fff"/>
<circle cx="1707.5" cy="606.2" r="1.6" fill="#c0e0ff"/>
<circle cx="1746.3" cy="602.5" r="2.0" fill="#ffe860"/>
<circle cx="1830.9" cy="567.4" r="1.8" fill="#ffc0a0"/>
<circle cx="1828.0" cy="548.7" r="1.8" fill="#fff"/>
<circle cx="1735.5" cy="534.8" r="2.0" fill="#fff"/>
<circle cx="1708.4" cy="563.7" r="1.6" fill="#ffe890"/>
<circle cx="1859.7" cy="617.7" r="1.6" fill="#ffe060"/>
<circle cx="1838.0" cy="645.7" r="1.8" fill="#ffe8a0"/>
<circle cx="1811.0" cy="699.4" r="1.8" fill="#a0d0ff"/>
<circle cx="1839.5" cy="740.7" r="2.6" fill="#e0e8ff"/>
<circle cx="1777.4" cy="742.9" r="2.0" fill="#fff"/>
<circle cx="1693.6" cy="825.9" r="4.4" fill="#fff"/>
<circle cx="1724.9" cy="837.6" r="2.0" fill="#ffe070"/>
<circle cx="1732.6" cy="832.0" r="2.0" fill="#fff"/>
<circle cx="1750.4" cy="785.3" r="2.0" fill="#fff"/>
<circle cx="1689.0" cy="776.0" r="1.8" fill="#a0c0ff"/>
<circle cx="1596.7" cy="804.7" r="2.4" fill="#ffe890"/>
<circle cx="1569.0" cy="839.0" r="2.2" fill="#ffd090"/>
<circle cx="1568.0" cy="829.0" r="2.2" fill="#ffe0a0"/>
<circle cx="1521.5" cy="874.2" r="1.8" fill="#ffff60"/>
<circle cx="1486.0" cy="840.7" r="2.0" fill="#fff"/>
<circle cx="1477.5" cy="756.0" r="1.8" fill="#fff"/>
<circle cx="1371.5" cy="888.3" r="2.4" fill="#ffe060"/>
<circle cx="1700.3" cy="888.3" r="2.0" fill="#ffe070"/>
<circle cx="1618.3" cy="936.5" r="2.0" fill="#fff"/>
<circle cx="1746.4" cy="946.0" r="1.8" fill="#a0d0ff"/>
<circle cx="1834.0" cy="912.9" r="2.0" fill="#fff"/>
<circle cx="1851.5" cy="926.7" r="2.2" fill="#ffe060"/>
<circle cx="1847.0" cy="774.6" r="1.8" fill="#ffe070"/>
<circle cx="1855.0" cy="802.2" r="1.8" fill="#ffd090"/>
<circle cx="1864.0" cy="838.0" r="2.0" fill="#ffe070"/>
<circle cx="1511.0" cy="780.5" r="2.0" fill="#fff"/>
<circle cx="1482.0" cy="909.0" r="2.0" fill="#fff"/>
<circle cx="1481.5" cy="946.0" r="2.2" fill="#ff9090"/>
<circle cx="1451.0" cy="915.0" r="1.8" fill="#ffe0c0"/>
<circle cx="1298.6" cy="870.5" r="7.0" fill="#ffffd8"/>
<circle cx="47.0" cy="289.5" r="2.2" fill="#fff"/>
<circle cx="1079.3" cy="404.0" r="2.0" fill="#ffd0e0"/>
<circle cx="977.1" cy="199.9" r="2.0" fill="#ffe8d0"/>
<circle cx="1156.0" cy="142.4" r="2.0" fill="#fff"/>
<circle cx="1209.6" cy="179.0" r="2.4" fill="#fff"/>
<circle cx="1171.7" cy="184.3" r="2.2" fill="#ffb0d0"/>
<circle cx="1271.6" cy="178.0" r="2.0" fill="#a8c8ff"/>
<circle cx="1074.5" cy="402.0" r="1.6" fill="#e0c0e0"/>
<circle cx="1011.5" cy="835.1" r="2.8" fill="#888"/>
<circle cx="780.0" cy="873.0" r="1.8" fill="#fff"/>
<circle cx="784.0" cy="801.0" r="2.4" fill="#c0e0ff"/>
<circle cx="1161.5" cy="460.0" r="2.0" fill="#fff"/>
<circle cx="1006.0" cy="537.0" r="1.6" fill="#fff"/>
<circle cx="869.0" cy="607.5" r="2.0" fill="#fff"/>
<circle cx="527.0" cy="960.0" r="2.6" fill="#fff"/>
<circle cx="518.0" cy="957.0" r="2.0" fill="#ffd0c0"/>
<circle cx="523.0" cy="952.0" r="2.0" fill="#ffc0c0"/>
<circle cx="532.0" cy="963.0" r="1.6" fill="#fff"/>
<circle cx="555.0" cy="969.0" r="1.8" fill="#ffe060"/>
<circle cx="496.0" cy="961.0" r="1.6" fill="#fff"/>
<text x="242.7" y="140.5" font-size="16.5" font-family="'Liberation Serif',serif" fill="#f0f0f0">α</text>
<text x="605.2" y="171.7" font-size="16.5" font-family="'Liberation Serif',serif" fill="#f0f0f0">α</text>
<text x="178.0" y="169.5" font-size="16.5" font-family="'Liberation Serif',serif" fill="#f0f0f0">β</text>
<text x="176.1" y="614.0" font-size="16.5" font-family="'Liberation Serif',serif" fill="#f0f0f0">α</text>
<text x="132.3" y="628.6" font-size="16.5" font-family="'Liberation Serif',serif" fill="#f0f0f0">β</text>
<text x="187.6" y="829.0" font-size="16.5" font-family="'Liberation Serif',serif" fill="#f0f0f0">γ</text>
<text x="947.8" y="152.2" font-size="16.5" font-family="'Liberation Serif',serif" fill="#f0f0f0">α</text>
<text x="880.2" y="378.7" font-size="16.5" font-family="'Liberation Serif',serif" fill="#f0f0f0">β</text>
<text x="867.3" y="428.5" font-size="16.5" font-family="'Liberation Serif',serif" fill="#f0f0f0">α</text>
<text x="823.0" y="407.7" font-size="16.5" font-family="'Liberation Serif',serif" fill="#f0f0f0">γ</text>
<text x="795.2" y="434.2" font-size="16.5" font-family="'Liberation Serif',serif" fill="#f0f0f0">δ</text>
<text x="1309.0" y="186.0" font-size="16.5" font-family="'Liberation Serif',serif" fill="#f0f0f0">ε</text>
<text x="1643.2" y="179.3" font-size="16.5" font-family="'Liberation Serif',serif" fill="#f0f0f0">γ</text>
<text x="1653.4" y="203.0" font-size="16.5" font-family="'Liberation Serif',serif" fill="#f0f0f0">α</text>
<text x="1796.5" y="434.4" font-size="16.5" font-family="'Liberation Serif',serif" fill="#f0f0f0">β</text>
<text x="1464.8" y="446.8" font-size="16.5" font-family="'Liberation Serif',serif" fill="#f0f0f0">ε</text>
<text x="1211.8" y="443.7" font-size="16.5" font-family="'Liberation Serif',serif" fill="#f0f0f0">η</text>
<text x="1202.3" y="494.3" font-size="16.5" font-family="'Liberation Serif',serif" fill="#f0f0f0">β</text>
<text x="1303.3" y="576.3" font-size="16.5" font-family="'Liberation Serif',serif" fill="#f0f0f0">α</text>
<text x="1191.6" y="704.0" font-size="16.5" font-family="'Liberation Serif',serif" fill="#f0f0f0">γ</text>
<text x="1099.4" y="595.0" font-size="16.5" font-family="'Liberation Serif',serif" fill="#f0f0f0">α</text>
<text x="955.5" y="628.5" font-size="16.5" font-family="'Liberation Serif',serif" fill="#f0f0f0">β</text>
<text x="828.7" y="622.9" font-size="16.5" font-family="'Liberation Serif',serif" fill="#f0f0f0">γ1</text>
<text x="848.6" y="696.3" font-size="16.5" font-family="'Liberation Serif',serif" fill="#f0f0f0">β</text>
<text x="1517.4" y="551.5" font-size="16.5" font-family="'Liberation Serif',serif" fill="#f0f0f0">α</text>
<text x="1611.5" y="513.0" font-size="16.5" font-family="'Liberation Serif',serif" fill="#f0f0f0">β</text>
<text x="1674.3" y="606.2" font-size="16.5" font-family="'Liberation Serif',serif" fill="#f0f0f0">δ</text>
<text x="907.6" y="800.3" font-size="16.5" font-family="'Liberation Serif',serif" fill="#f0f0f0">α</text>
<text x="949.3" y="810.8" font-size="16.5" font-family="'Liberation Serif',serif" fill="#f0f0f0">β</text>
<text x="1703.0" y="824.9" font-size="16.5" font-family="'Liberation Serif',serif" fill="#f0f0f0">α</text>
<text x="1847.1" y="739.7" font-size="16.5" font-family="'Liberation Serif',serif" fill="#f0f0f0">γ</text>
<text x="765.7" y="209.2" font-size="17.64" fill="#ffff00" stroke="#ffff00" stroke-width="0.45">Cepheus</text>
<text x="774.6" y="415.5" font-size="17.34" fill="#ffff00" stroke="#ffff00" stroke-width="0.45">Cassiopeia</text>
<text x="1039.0" y="336.2" font-size="17.69" fill="#ffff00" stroke="#ffff00" stroke-width="0.45">Lacerta</text>
<text x="1386.4" y="182.2" font-size="17.50" fill="#ffff00" stroke="#ffff00" stroke-width="0.45">Vulpecula</text>
<text x="1490.5" y="302.5" font-size="17.27" fill="#ffff00" stroke="#ffff00" stroke-width="0.45">Delphinus</text>
<text x="1687.3" y="228.8" font-size="17.30" fill="#ffff00" stroke="#ffff00" stroke-width="0.45">Aquila</text>
<text x="1477.6" y="405.0" font-size="17.36" fill="#ffff00" stroke="#ffff00" stroke-width="0.45">Equuleus</text>
<text x="1262.0" y="503.8" font-size="17.58" fill="#ffff00" stroke="#ffff00" stroke-width="0.45">Pegasus</text>
<text x="931.8" y="562.9" font-size="17.83" fill="#ffff00" stroke="#ffff00" stroke-width="0.45">Andromeda</text>
<text x="819.0" y="722.2" font-size="17.38" fill="#ffff00" stroke="#ffff00" stroke-width="0.45">Triangulum</text>
<text x="1078.2" y="776.2" font-size="17.25" fill="#ffff00" stroke="#ffff00" stroke-width="0.45">Pisces</text>
<text x="800.0" y="850.0" font-size="17.56" fill="#ffff00" stroke="#ffff00" stroke-width="0.45">Aries</text>
<text x="1501.5" y="690.1" font-size="17.33" fill="#ffff00" stroke="#ffff00" stroke-width="0.45">Aquarius</text>
<text x="1705.3" y="548.8" font-size="17.53" fill="#ffff00" stroke="#ffff00" stroke-width="0.45">Capricornus</text>
<text x="1682.8" y="774.1" font-size="17.42" fill="#ffff00" stroke="#ffff00" stroke-width="0.45">Piscis Austrinus</text>
<text x="172.7" y="739.8" font-size="16.83" fill="#ffff00" stroke="#ffff00" stroke-width="0.45">Gemini</text>
<text x="570.0" y="956.1" font-size="18.32" fill="#ffff00" stroke="#ffff00" stroke-width="0.45">Taurus</text>
<text x="297.0" y="206.6" font-size="14.26" fill="#fff" stroke="#fff" stroke-width="0.25">M 81</text>
<text x="353.7" y="202.9" font-size="13.63" fill="#fff" stroke="#fff" stroke-width="0.25">M 82</text>
<text x="895.0" y="313.2" font-size="15.61" fill="#fff" stroke="#fff" stroke-width="0.25">M 52</text>
<text x="1007.0" y="197.0" font-size="16.67" fill="#fff" stroke="#fff" stroke-width="0.25">IC 1396</text>
<text x="1109.6" y="215.7" font-size="16.69" fill="#fff" stroke="#fff" stroke-width="0.25">M 39</text>
<text x="1184.5" y="199.5" font-size="16.83" fill="#fff" stroke="#fff" stroke-width="0.25">NGC 7000</text>
<text x="1541.0" y="137.0" font-size="13.94" fill="#fff" stroke="#fff" stroke-width="0.25">M 71</text>
<text x="1465.0" y="401.5" font-size="15.29" fill="#fff" stroke="#fff" stroke-width="0.25">M 15</text>
<text x="744.2" y="468.7" font-size="16.88" fill="#fff" stroke="#fff" stroke-width="0.25">Stock 2</text>
<text x="722.5" y="434.6" font-size="15.79" fill="#fff" stroke="#fff" stroke-width="0.25">M 103</text>
<text x="817.4" y="518.6" font-size="11.20" fill="#fff" stroke="#fff" stroke-width="0.25">M 76</text>
<text x="910.0" y="543.6" font-size="13.46" fill="#fff" stroke="#fff" stroke-width="0.25">M 110</text>
<text x="920.9" y="569.1" font-size="13.27" fill="#fff" stroke="#fff" stroke-width="0.25">M 32</text>
<text x="973.7" y="556.1" font-size="16.06" fill="#fff" stroke="#fff" stroke-width="0.25">M 31</text>
<text x="759.3" y="641.7" font-size="16.78" fill="#fff" stroke="#fff" stroke-width="0.25">M 34</text>
<text x="942.0" y="699.2" font-size="16.78" fill="#fff" stroke="#fff" stroke-width="0.25">M 33</text>
<text x="1569.2" y="486.4" font-size="14.88" fill="#fff" stroke="#fff" stroke-width="0.25">M 2</text>
<text x="1681.0" y="477.4" font-size="13.31" fill="#fff" stroke="#fff" stroke-width="0.25">M 72</text>
<text x="1716.2" y="489.0" font-size="11.02" fill="#fff" stroke="#fff" stroke-width="0.25">M 73</text>
<text x="1739.5" y="629.5" font-size="15.20" fill="#fff" stroke="#fff" stroke-width="0.25">M 30</text>
<text x="1018.0" y="831.4" font-size="11.20" fill="#fff" stroke="#fff" stroke-width="0.25">M 74</text>
<text x="952.2" y="914.3" font-size="14.98" fill="#fff" stroke="#fff" stroke-width="0.25">Uranus</text>
<text x="1306.2" y="868.1" font-size="14.71" fill="#fff" stroke="#fff" stroke-width="0.25">Moon</text>
<text x="1467.6" y="715.0" font-size="14.73" fill="#fff" stroke="#fff" stroke-width="0.25">Neptune</text>
<text x="117.6" y="930.2" font-size="17.12" fill="#fff" stroke="#fff" stroke-width="0.25">Cr 106</text>
<text x="60.0" y="402.4" font-size="15.00" fill="#d4d4d4">+15°00&#39;</text>
<text x="60.0" y="562.4" font-size="15.00" fill="#d4d4d4">+00°00&#39;</text>
<text x="58.0" y="746.7" font-size="15.88" fill="#d4d4d4">-15°00&#39;</text>
<text x="60.0" y="923.5" font-size="15.24" fill="#d4d4d4">-30°00&#39;</text>
<text x="89.5" y="602.6" font-size="15.42" fill="#d4d4d4">330°00&#39;</text>
<text x="877.9" y="816.6" font-size="15.4" text-anchor="middle" fill="#d4d4d4">45°00&#39;</text>
<text x="877.9" y="796.6" font-size="15.4" text-anchor="middle" fill="#d4d4d4">NE</text>
<text x="1043.9" y="815.6" font-size="15.4" text-anchor="middle" fill="#d4d4d4">60°00&#39;</text>
<text x="1207.6" y="796.1" font-size="15.4" text-anchor="middle" fill="#d4d4d4">75°00&#39;</text>
<text x="1365.7" y="760.6" font-size="15.4" text-anchor="middle" fill="#d4d4d4">90°00&#39;</text>
<text x="1365.7" y="740.6" font-size="15.4" text-anchor="middle" fill="#d4d4d4">E</text>
<text x="1516.9" y="713.0" font-size="15.4" text-anchor="middle" fill="#d4d4d4">105°00&#39;</text>
<text x="1661.8" y="657.5" font-size="15.4" text-anchor="middle" fill="#d4d4d4">120°00&#39;</text>
<text x="1802.4" y="597.6" font-size="15.4" text-anchor="middle" fill="#d4d4d4">135°00&#39;</text>
<text x="1802.4" y="577.6" font-size="15.4" text-anchor="middle" fill="#d4d4d4">SE</text>
<g transform="translate(1101 401.6) rotate(35.4)" fill="none"><rect x="-16.5" y="-25" width="33" height="50" stroke="#d81224" stroke-width="1.2"/><path d="M-5.5 -25V25M5.5 -25V25M-16.5 -8.3H16.5M-16.5 8.3H16.5" stroke="#f01428" stroke-width="2"/></g>
<rect x="1110.5" y="389.5" width="111.5" height="28" fill="#000022" stroke="#4a4a5c" stroke-width="1"/>
<circle cx="1103.7" cy="403.1" r="5.2" fill="#000022" stroke="#fff" stroke-width="1.2"/>
<text x="1113.4" y="410.9" font-size="21.35" fill="#fff">HD216646</text>
<rect x="40" y="136" width="147" height="151" fill="#1f1e23" fill-opacity="0.94"/>
<text x="45" y="157.0" font-size="15.8" textLength="123.5" lengthAdjust="spacingAndGlyphs" fill="#fff" stroke="#fff" stroke-width="0.2">Alt/Az coord. MER</text>
<text x="45" y="175.9" font-size="15.8" textLength="61.0" lengthAdjust="spacingAndGlyphs" fill="#fff" stroke="#fff" stroke-width="0.2">Apparent</text>
<text x="45" y="194.9" font-size="15.8" textLength="67.5" lengthAdjust="spacingAndGlyphs" fill="#fff" stroke="#fff" stroke-width="0.2">Telescope</text>
<text x="45" y="213.8" font-size="15.8" textLength="79.0" lengthAdjust="spacingAndGlyphs" fill="#fff" stroke="#fff" stroke-width="0.2">2019-10-12</text>
<text x="45" y="232.8" font-size="15.8" textLength="125.0" lengthAdjust="spacingAndGlyphs" fill="#fff" stroke="#fff" stroke-width="0.2">17h24m35s (BST)</text>
<text x="45" y="251.8" font-size="15.8" textLength="117.0" lengthAdjust="spacingAndGlyphs" fill="#fff" stroke="#fff" stroke-width="0.2">Mag:6.1/9.0,20.0&#39;</text>
<text x="45" y="270.7" font-size="15.8" textLength="119.0" lengthAdjust="spacingAndGlyphs" fill="#fff" stroke="#fff" stroke-width="0.2">FOV:+180°00&#39;00&quot;</text>
</g></svg>
<div class="abs" id="dlg" style="left:200px;top:260px;width:554px;height:694px;background:#f0f0f0;box-shadow:0 2px 14px rgba(0,0,0,0.55),0 0 0 1px rgba(40,40,60,0.55)"></div>
<div class="abs" style="left:200px;top:260px;width:554px;height:32px;background:#fff"></div>
<svg style="left:203px;top:265px" width="20" height="20" viewBox="0 0 20 20"><defs><linearGradient id="lg2" x1="0" y1="0" x2="1" y2="1"><stop offset="0" stop-color="#2a2a2a"/><stop offset="0.5" stop-color="#777"/><stop offset="1" stop-color="#a0a0a0"/></linearGradient></defs><rect width="20" height="20" fill="url(#lg2)"/><path d="M6 11.5 L17 2.5 L9 12.5Z" fill="#f0f0f0"/><path d="M0 17 L4 16 L7 17.5 L12 17 L20 18 V20 H0Z" fill="#0a0a0a"/></svg>
<div class="t" style="left:228.5px;top:265.5px;line-height:20px;font-size:14.94px;color:#000;">Display</div>
<svg style="left:590px;top:260px" width="160" height="32" viewBox="0 0 160 32" stroke="#000" stroke-width="1.1" fill="none"><path d="M11 14.5H23"/><rect x="69.5" y="9.5" width="11" height="11"/><path d="M128 9.5L140 21.5M140 9.5L128 21.5"/></svg>
<div class="abs" style="left:203px;top:319px;width:549px;height:579px;background:#fff;border:1px solid #d9d9d9"></div>
<div class="abs" style="left:203px;top:295px;width:60px;height:25px;background:#f0f0f0;border:1px solid #d9d9d9"></div>
<div class="t" style="left:209.4px;top:298px;line-height:20px;font-size:14.08px;color:#000;">Labels</div>
<div class="abs" style="left:262px;top:295px;width:61px;height:25px;background:#f0f0f0;border:1px solid #d9d9d9"></div>
<div class="t" style="left:269.5px;top:298px;line-height:20px;font-size:14.07px;color:#000;">Fonts</div>
<div class="abs" style="left:322px;top:295px;width:165px;height:25px;background:#f0f0f0;border:1px solid #d9d9d9"></div>
<div class="t" style="left:329.7px;top:298px;line-height:20px;font-size:14.63px;color:#000;">Finder circle (eyepiece)</div>
<div class="abs" style="left:486px;top:292px;width:166px;height:29px;background:#fff;border:1px solid #d9d9d9;border-bottom:none"></div>
<div class="t" style="left:494px;top:295.5px;line-height:20px;font-size:14.47px;color:#000;">Finder rectangle (CCD)</div>
<div class="abs" style="left:706px;top:294px;width:23px;height:23px;background:linear-gradient(#f2f2f2,#dcdcdc);border:1px solid #acacac"></div>
<div class="abs" style="left:729px;top:294px;width:23px;height:23px;background:linear-gradient(#f2f2f2,#dcdcdc);border:1px solid #acacac"></div>
<svg style="left:706px;top:294px" width="46" height="23" viewBox="0 0 46 23"><path d="M14 7.5V15.5L9.5 11.5Z M32 7.5V15.5L36.5 11.5Z" fill="#000"/></svg>
<div class="t" style="left:234.4px;top:336px;line-height:20px;font-size:14.44px;color:#000;">Finder rectangle (CCD)</div>
<div class="abs" style="left:583px;top:338px;width:126px;height:26px;background:#e1e1e1;border:1px solid #adadad"></div>
<div class="t" style="left:583px;width:126px;text-align:center;top:341px;line-height:20px;font-size:14.70px;color:#000">Compute</div>
<div class="abs" style="left:234px;top:373px;width:503px;height:391px;background:#fff;border:1px solid #ababab"></div>
<div class="abs" style="left:236px;top:375px;width:443px;height:30px;background:#f0f0f0"></div>
<div class="abs" style="left:236px;top:375px;width:30px;height:330px;background:#f0f0f0"></div>
<div class="abs" style="left:715px;top:375px;width:21px;height:388px;background:#f0f0f0"></div>
<svg style="left:715px;top:375px" width="21" height="388" viewBox="0 0 21 388" fill="none" stroke="#bcbcbc" stroke-width="1.6"><path d="M6 13L10.5 8.5L15 13M6 375L10.5 379.5L15 375"/></svg>
<div class="t" style="left:240px;top:380px;line-height:20px;font-size:14.74px;color:#000;">n</div>
<div class="t" style="left:269.6px;top:380px;line-height:20px;font-size:14.80px;color:#000;">x</div>
<div class="t" style="left:300px;top:380px;line-height:20px;font-size:15.41px;color:#000;">Width</div>
<div class="t" style="left:360px;top:380px;line-height:20px;font-size:15.36px;color:#000;">Height</div>
<div class="t" style="left:480px;top:380px;line-height:20px;font-size:15.10px;color:#000;">Offset</div>
<div class="t" style="left:540px;top:380px;line-height:20px;font-size:15.03px;color:#000;">Description</div>
<div class="abs" style="left:420px;top:380px;width:53px;height:20px;overflow:hidden"><div class="t" style="left:0;top:0;line-height:20px;font-size:14.8px">Rotation</div></div>
<div class="abs" style="left:296px;top:405px;width:383px;height:30px;background:#0078d7"></div>
<svg style="left:0;top:0" width="0" height="0"><defs><radialGradient id="rg" cx="0.4" cy="0.3" r="0.7"><stop offset="0" stop-color="#f06060"/><stop offset="0.35" stop-color="#d8202c"/><stop offset="1" stop-color="#8a0810"/></radialGradient><radialGradient id="gg" cx="0.4" cy="0.3" r="0.7"><stop offset="0" stop-color="#c8f070"/><stop offset="0.4" stop-color="#8cc63a"/><stop offset="1" stop-color="#4c8418"/></radialGradient></defs></svg>
<div class="t" style="left:240px;top:410px;line-height:20px;font-size:14.50px;color:#000;">1</div>
<svg style="left:268px;top:407px" width="15" height="15" viewBox="0 0 15 15"><circle cx="7.5" cy="7.5" r="6.6" fill="url(#gg)"/><ellipse cx="6.6" cy="4.6" rx="3.2" ry="1.9" fill="#fff" opacity="0.35"/></svg>
<div class="t" style="left:300px;top:410px;line-height:20px;font-size:14.00px;color:#fff;letter-spacing:-0.25px">104.61</div>
<div class="t" style="left:360px;top:410px;line-height:20px;font-size:14.00px;color:#fff;letter-spacing:-0.25px">70.15</div>
<div class="t" style="left:420px;top:410px;line-height:20px;font-size:14.00px;color:#fff;letter-spacing:-0.25px">0.00</div>
<div class="t" style="left:480px;top:410px;line-height:20px;font-size:14.00px;color:#fff;letter-spacing:-0.25px">0.00</div>
<div class="t" style="left:540px;top:410px;line-height:20px;font-size:14.30px;color:#fff;">R104.61x70.15</div>
<div class="t" style="left:240px;top:440px;line-height:20px;font-size:14.50px;color:#000;">2</div>
<svg style="left:268px;top:437px" width="15" height="15" viewBox="0 0 15 15"><circle cx="7.5" cy="7.5" r="6.6" fill="url(#rg)"/><ellipse cx="6.6" cy="4.6" rx="3.2" ry="1.9" fill="#fff" opacity="0.35"/></svg>
<div class="t" style="left:300px;top:440px;line-height:20px;font-size:14.00px;color:#000;letter-spacing:-0.25px">103.90</div>
<div class="t" style="left:360px;top:440px;line-height:20px;font-size:14.00px;color:#000;letter-spacing:-0.25px">69.67</div>
<div class="t" style="left:420px;top:440px;line-height:20px;font-size:14.00px;color:#000;letter-spacing:-0.25px">0.00</div>
<div class="t" style="left:480px;top:440px;line-height:20px;font-size:14.00px;color:#000;letter-spacing:-0.25px">0.00</div>
<div class="abs" style="left:540px;top:440px;width:136px;height:20px;overflow:hidden"><div class="t" style="left:0;top:0;line-height:20px;font-size:14.26px">183c Pro Tec 432mm</div></div>
<div class="t" style="left:240px;top:470px;line-height:20px;font-size:14.50px;color:#000;">3</div>
<svg style="left:268px;top:467px" width="15" height="15" viewBox="0 0 15 15"><circle cx="7.5" cy="7.5" r="6.6" fill="url(#rg)"/><ellipse cx="6.6" cy="4.6" rx="3.2" ry="1.9" fill="#fff" opacity="0.35"/></svg>
<div class="t" style="left:300px;top:470px;line-height:20px;font-size:14.00px;color:#000;letter-spacing:-0.25px">0.00</div>
<div class="t" style="left:360px;top:470px;line-height:20px;font-size:14.00px;color:#000;letter-spacing:-0.25px">0.00</div>
<div class="t" style="left:420px;top:470px;line-height:20px;font-size:14.00px;color:#000;letter-spacing:-0.25px">0.00</div>
<div class="t" style="left:480px;top:470px;line-height:20px;font-size:14.00px;color:#000;letter-spacing:-0.25px">0.00</div>
<div class="t" style="left:240px;top:500px;line-height:20px;font-size:14.50px;color:#000;">4</div>
<svg style="left:268px;top:497px" width="15" height="15" viewBox="0 0 15 15"><circle cx="7.5" cy="7.5" r="6.6" fill="url(#rg)"/><ellipse cx="6.6" cy="4.6" rx="3.2" ry="1.9" fill="#fff" opacity="0.35"/></svg>
<div class="t" style="left:300px;top:500px;line-height:20px;font-size:14.00px;color:#000;letter-spacing:-0.25px">0.00</div>
<div class="t" style="left:360px;top:500px;line-height:20px;font-size:14.00px;color:#000;letter-spacing:-0.25px">0.00</div>
<div class="t" style="left:420px;top:500px;line-height:20px;font-size:14.00px;color:#000;letter-spacing:-0.25px">0.00</div>
<div class="t" style="left:480px;top:500px;line-height:20px;font-size:14.00px;color:#000;letter-spacing:-0.25px">0.00</div>
<div class="t" style="left:240px;top:530px;line-height:20px;font-size:14.50px;color:#000;">5</div>
<svg style="left:268px;top:527px" width="15" height="15" viewBox="0 0 15 15"><circle cx="7.5" cy="7.5" r="6.6" fill="url(#rg)"/><ellipse cx="6.6" cy="4.6" rx="3.2" ry="1.9" fill="#fff" opacity="0.35"/></svg>
<div class="t" style="left:300px;top:530px;line-height:20px;font-size:14.00px;color:#000;letter-spacing:-0.25px">90.67</div>
<div class="t" style="left:360px;top:530px;line-height:20px;font-size:14.00px;color:#000;letter-spacing:-0.25px">68.00</div>
<div class="t" style="left:420px;top:530px;line-height:20px;font-size:14.00px;color:#000;letter-spacing:-0.25px">0.00</div>
<div class="t" style="left:480px;top:530px;line-height:20px;font-size:14.00px;color:#000;letter-spacing:-0.25px">0.00</div>
<div class="t" style="left:540px;top:530px;line-height:20px;font-size:14.30px;color:#000;">IMX224 182mm</div>
<div class="t" style="left:240px;top:560px;line-height:20px;font-size:14.50px;color:#000;">6</div>
<svg style="left:268px;top:557px" width="15" height="15" viewBox="0 0 15 15"><circle cx="7.5" cy="7.5" r="6.6" fill="url(#rg)"/><ellipse cx="6.6" cy="4.6" rx="3.2" ry="1.9" fill="#fff" opacity="0.35"/></svg>
<div class="t" style="left:300px;top:560px;line-height:20px;font-size:14.00px;color:#000;letter-spacing:-0.25px">38.20</div>
<div class="t" style="left:360px;top:560px;line-height:20px;font-size:14.00px;color:#000;letter-spacing:-0.25px">28.65</div>
<div class="t" style="left:420px;top:560px;line-height:20px;font-size:14.00px;color:#000;letter-spacing:-0.25px">0.00</div>
<div class="t" style="left:480px;top:560px;line-height:20px;font-size:14.00px;color:#000;letter-spacing:-0.25px">0.00</div>
<div class="t" style="left:540px;top:560px;line-height:20px;font-size:14.30px;color:#000;">IMX224 432mm</div>
<div class="t" style="left:240px;top:590px;line-height:20px;font-size:14.50px;color:#000;">7</div>
<svg style="left:268px;top:587px" width="15" height="15" viewBox="0 0 15 15"><circle cx="7.5" cy="7.5" r="6.6" fill="url(#rg)"/><ellipse cx="6.6" cy="4.6" rx="3.2" ry="1.9" fill="#fff" opacity="0.35"/></svg>
<div class="t" style="left:300px;top:590px;line-height:20px;font-size:14.00px;color:#000;letter-spacing:-0.25px">19.10</div>
<div class="t" style="left:360px;top:590px;line-height:20px;font-size:14.00px;color:#000;letter-spacing:-0.25px">14.32</div>
<div class="t" style="left:420px;top:590px;line-height:20px;font-size:14.00px;color:#000;letter-spacing:-0.25px">0.00</div>
<div class="t" style="left:480px;top:590px;line-height:20px;font-size:14.00px;color:#000;letter-spacing:-0.25px">0.00</div>
<div class="t" style="left:540px;top:590px;line-height:20px;font-size:14.30px;color:#000;">IMX224 864MM</div>
<div class="t" style="left:240px;top:620px;line-height:20px;font-size:14.50px;color:#000;">8</div>
<svg style="left:268px;top:617px" width="15" height="15" viewBox="0 0 15 15"><circle cx="7.5" cy="7.5" r="6.6" fill="url(#rg)"/><ellipse cx="6.6" cy="4.6" rx="3.2" ry="1.9" fill="#fff" opacity="0.35"/></svg>
<div class="t" style="left:300px;top:620px;line-height:20px;font-size:14.00px;color:#000;letter-spacing:-0.25px">190.37</div>
<div class="t" style="left:360px;top:620px;line-height:20px;font-size:14.00px;color:#000;letter-spacing:-0.25px">126.92</div>
<div class="t" style="left:420px;top:620px;line-height:20px;font-size:14.00px;color:#000;letter-spacing:-0.25px">0.00</div>
<div class="t" style="left:480px;top:620px;line-height:20px;font-size:14.00px;color:#000;letter-spacing:-0.25px">0.00</div>
<div class="t" style="left:540px;top:620px;line-height:20px;font-size:14.30px;color:#000;">EOS1100D 432MM</div>
<div class="t" style="left:240px;top:650px;line-height:20px;font-size:14.50px;color:#000;">9</div>
<svg style="left:268px;top:647px" width="15" height="15" viewBox="0 0 15 15"><circle cx="7.5" cy="7.5" r="6.6" fill="url(#rg)"/><ellipse cx="6.6" cy="4.6" rx="3.2" ry="1.9" fill="#fff" opacity="0.35"/></svg>
<div class="t" style="left:300px;top:650px;line-height:20px;font-size:14.00px;color:#000;letter-spacing:-0.25px">22.00</div>
<div class="t" style="left:360px;top:650px;line-height:20px;font-size:14.00px;color:#000;letter-spacing:-0.25px">16.50</div>
<div class="t" style="left:420px;top:650px;line-height:20px;font-size:14.00px;color:#000;letter-spacing:-0.25px">0.00</div>
<div class="t" style="left:480px;top:650px;line-height:20px;font-size:14.00px;color:#000;letter-spacing:-0.25px">0.00</div>
<div class="t" style="left:240px;top:680px;line-height:20px;font-size:14.50px;color:#000;">10</div>
<svg style="left:268px;top:677px" width="15" height="15" viewBox="0 0 15 15"><circle cx="7.5" cy="7.5" r="6.6" fill="url(#rg)"/><ellipse cx="6.6" cy="4.6" rx="3.2" ry="1.9" fill="#fff" opacity="0.35"/></svg>
<div class="t" style="left:300px;top:680px;line-height:20px;font-size:14.00px;color:#000;letter-spacing:-0.25px">11.00</div>
<div class="t" style="left:360px;top:680px;line-height:20px;font-size:14.00px;color:#000;letter-spacing:-0.25px">8.25</div>
<div class="t" style="left:420px;top:680px;line-height:20px;font-size:14.00px;color:#000;letter-spacing:-0.25px">0.00</div>
<div class="t" style="left:480px;top:680px;line-height:20px;font-size:14.00px;color:#000;letter-spacing:-0.25px">0.00</div>
<div class="abs" style="left:533px;top:775px;width:15px;height:15px;background:#fff;border:1px solid #333"></div>
<svg style="left:533px;top:775px" width="15" height="15" viewBox="0 0 15 15" fill="none" stroke="#222" stroke-width="1.4"><path d="M3.2 7.6L6.2 10.6L11.8 4.4"/></svg>
<div class="t" style="left:552px;top:772.5px;line-height:20px;font-size:14.58px;color:#000;">Show labels</div>
<div class="abs" style="left:533px;top:811px;width:15px;height:15px;background:#fff;border:1px solid #333"></div>
<svg style="left:533px;top:811px" width="15" height="15" viewBox="0 0 15 15" fill="none" stroke="#222" stroke-width="1.4"><path d="M3.2 7.6L6.2 10.6L11.8 4.4"/></svg>
<div class="t" style="left:552px;top:808.5px;line-height:20px;font-size:14.72px;color:#000;">Show mark index</div>
<div class="abs" style="left:234px;top:811px;width:15px;height:15px;background:#fff;border:1px solid #333"></div>
<div class="t" style="left:254px;top:808.5px;line-height:20px;font-size:14.92px;color:#000;">Mark the centre of the chart</div>
<div class="hl" style="left:200px;top:899px;width:554px;background:#a0a0a0"></div><div class="hl" style="left:200px;top:900px;width:554px;background:#fff"></div>
<div class="abs" style="left:290px;top:912px;width:80px;height:26px;background:#e1e1e1;border:1px solid #adadad"></div>
<div class="t" style="left:290px;width:80px;text-align:center;top:915px;line-height:20px;font-size:14.60px;color:#000">Help</div>
<div class="abs" style="left:403px;top:912px;width:83px;height:26px;background:#e1e1e1;border:2px solid #0078d7"></div>
<div class="t" style="left:403px;width:83px;text-align:center;top:915px;line-height:20px;font-size:14.60px;color:#000">OK</div>
<div class="abs" style="left:516px;top:912px;width:83px;height:26px;background:#e1e1e1;border:1px solid #adadad"></div>
<div class="t" style="left:516px;width:83px;text-align:center;top:915px;line-height:20px;font-size:14.60px;color:#000">Apply</div>
<div class="abs" style="left:637px;top:912px;width:83px;height:26px;background:#e1e1e1;border:1px solid #adadad"></div>
<div class="t" style="left:637px;width:83px;text-align:center;top:915px;line-height:20px;font-size:14.60px;color:#000">Cancel</div>
</body></html>
